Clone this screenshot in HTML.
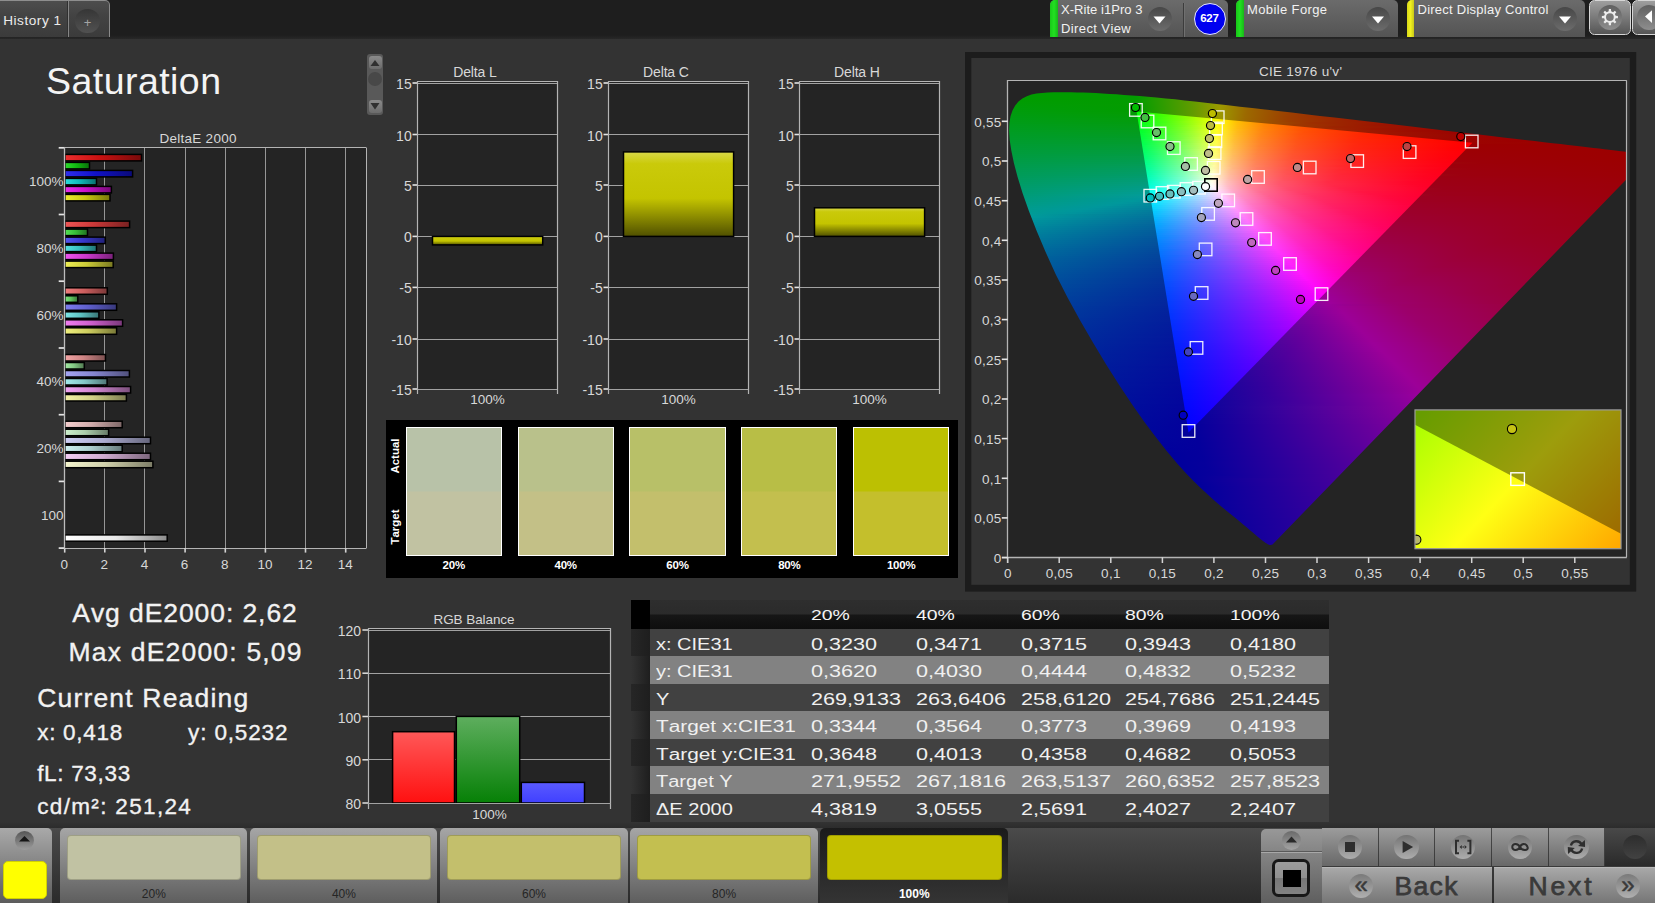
<!DOCTYPE html><html lang="en"><head><meta charset="utf-8"><title>Saturation</title><style>
html,body{margin:0;padding:0;background:#333;}
body{width:1655px;height:903px;overflow:hidden;position:relative;font-family:"Liberation Sans",sans-serif;font-kerning:none;}
.t{position:absolute;white-space:nowrap;line-height:normal;font-kerning:none;}
.a{position:absolute;box-sizing:border-box;}
svg{position:absolute;left:0;top:0;overflow:visible}
svg text{font-family:"Liberation Sans",sans-serif;font-kerning:none;}
</style></head><body><div class="a" style="left:0;top:0;width:1655px;height:38.5px;background:linear-gradient(#1e1e1e,#1e1e1e 90%,#282828)"></div><div class="a" style="left:0;top:0;width:110px;height:37px;background:linear-gradient(#4d4d4d,#434343 40%,#3b3b3b);border-top:1.3px solid #8e8e8e;border-right:1.2px solid #8a8a8a;border-top-right-radius:5px"></div><div class="a" style="left:67.3px;top:1px;width:1px;height:36px;background:#303030"></div><div class="a" style="left:68.3px;top:1px;width:1px;height:36px;background:#858585"></div><div class="a" style="left:75.4px;top:8.8px;width:24.4px;height:24.4px;border-radius:50%;background:linear-gradient(#363636,#515151)"></div><div class="t" style="left:3.2px;top:12.7px;font-size:13.6px;color:#ececec;letter-spacing:0.54px;">History 1</div><div class="t" style="left:83.8px;top:15.2px;font-size:13px;color:#a4a4a4;">+</div><div class="a" style="left:1050.0px;top:0;width:178.0px;height:37px;background:linear-gradient(#6b6b6b,#545454);border-radius:5px 5px 0 0;overflow:hidden"><div style="width:7.5px;height:37px;background:linear-gradient(90deg,#18c818,#22e022 50%,#18b818)"></div></div><div class="a" style="left:1147.5px;top:6.5px;width:24px;height:24px;border-radius:50%;background:linear-gradient(#474747,#6c6c6c)"></div><svg width="1655" height="40"><polygon points="1153.5,16.5 1165.5,16.5 1159.5,23.5" fill="#fff"/></svg><div class="a" style="left:1183px;top:3px;width:1px;height:34px;background:#3c3c3c"></div><div class="a" style="left:1184px;top:3px;width:1px;height:34px;background:#707070"></div><div class="a" style="left:1193.5px;top:2.5px;width:32px;height:32px;border-radius:50%;background:#0000f0;border:1.3px solid #e8e8ff;box-sizing:border-box"></div><div class="t" style="left:1200.3px;top:12.2px;font-size:11.5px;color:#fff;letter-spacing:-0.34px;font-weight:bold;">627</div><div class="t" style="left:1061.0px;top:1.7px;font-size:13px;color:#f2f2f2;letter-spacing:0.04px;">X-Rite i1Pro 3</div><div class="t" style="left:1061.0px;top:20.7px;font-size:13px;color:#f2f2f2;letter-spacing:0.40px;">Direct View</div><div class="a" style="left:1236.0px;top:0;width:162.0px;height:37px;background:linear-gradient(#6b6b6b,#545454);border-radius:5px 5px 0 0;overflow:hidden"><div style="width:7.5px;height:37px;background:linear-gradient(90deg,#18c818,#22e022 50%,#18b818)"></div></div><div class="a" style="left:1366.0px;top:6.5px;width:24px;height:24px;border-radius:50%;background:linear-gradient(#474747,#6c6c6c)"></div><svg width="1655" height="40"><polygon points="1372.0,16.5 1384.0,16.5 1378.0,23.5" fill="#fff"/></svg><div class="t" style="left:1247.0px;top:1.7px;font-size:13px;color:#f2f2f2;letter-spacing:0.38px;">Mobile Forge</div><div class="a" style="left:1406.5px;top:0;width:178.5px;height:37px;background:linear-gradient(#6b6b6b,#545454);border-radius:5px 5px 0 0;overflow:hidden"><div style="width:7.5px;height:37px;background:linear-gradient(90deg,#d8d818,#f0f020 50%,#c8c818)"></div></div><div class="a" style="left:1553.0px;top:6.5px;width:24px;height:24px;border-radius:50%;background:linear-gradient(#474747,#6c6c6c)"></div><svg width="1655" height="40"><polygon points="1559.0,16.5 1571.0,16.5 1565.0,23.5" fill="#fff"/></svg><div class="t" style="left:1417.5px;top:1.7px;font-size:13px;color:#f2f2f2;letter-spacing:0.25px;">Direct Display Control</div><div class="a" style="left:1589px;top:-0.3px;width:41.9px;height:35.5px;border:1.4px solid #d6d6d6;border-radius:5.5px;background:linear-gradient(#9e9e9e,#565656)"></div><div class="a" style="left:1597.8px;top:5.2px;width:24.4px;height:24.4px;border-radius:50%;background:linear-gradient(#606060,#8e8e8e)"></div><svg width="1655" height="40"><polygon points="1617.93,16.02 1617.93,18.18 1615.67,18.34 1614.86,20.30 1616.34,22.01 1614.81,23.54 1613.10,22.06 1611.14,22.87 1610.98,25.13 1608.82,25.13 1608.66,22.87 1606.70,22.06 1604.99,23.54 1603.46,22.01 1604.94,20.30 1604.13,18.34 1601.87,18.18 1601.87,16.02 1604.13,15.86 1604.94,13.90 1603.46,12.19 1604.99,10.66 1606.70,12.14 1608.66,11.33 1608.82,9.07 1610.98,9.07 1611.14,11.33 1613.10,12.14 1614.81,10.66 1616.34,12.19 1614.86,13.90 1615.67,15.86" fill="#ececec"/><circle cx="1609.9" cy="17.1" r="3.9" fill="#797979"/></svg><div class="a" style="left:1632.3px;top:-0.3px;width:30px;height:35.5px;border:1.4px solid #d6d6d6;border-radius:5.5px 0 0 5.5px;background:linear-gradient(#9e9e9e,#565656)"></div><div class="a" style="left:1636.6px;top:5.2px;width:24.4px;height:24.4px;border-radius:50%;background:linear-gradient(#606060,#8e8e8e)"></div><svg width="1655" height="40"><polygon points="1645,16.6 1652,10.2 1652,23" fill="#fff"/></svg><div class="t" style="left:46.0px;top:59.8px;font-size:37.5px;color:#f4f4f4;letter-spacing:0.45px;">Saturation</div><div class="a" style="left:367px;top:54px;width:16px;height:61px;background:#595959;border-radius:3px"></div><div class="a" style="left:368.5px;top:56px;width:13px;height:13px;background:linear-gradient(#8a8a8a,#6c6c6c);border-radius:3px"></div><div class="a" style="left:368.5px;top:99.5px;width:13px;height:13px;background:linear-gradient(#8a8a8a,#6c6c6c);border-radius:3px"></div><div class="a" style="left:368px;top:71.5px;width:14px;height:14px;background:#484848;border-radius:50%"></div><svg width="400" height="120"><polygon points="370.5,66 379.5,66 375,60" fill="#303030"/><polygon points="370.5,103 379.5,103 375,109.5" fill="#303030"/></svg><svg width="1655" height="903" viewBox="0 0 1655 903"><defs><linearGradient id="b0"><stop offset="0" stop-color="#ec2e2e"/><stop offset="0.45" stop-color="#c91111"/><stop offset="1" stop-color="#780a0a"/></linearGradient><linearGradient id="b1"><stop offset="0" stop-color="#2edc2e"/><stop offset="0.45" stop-color="#11ba11"/><stop offset="1" stop-color="#0a6f0a"/></linearGradient><linearGradient id="b2"><stop offset="0" stop-color="#2e2eec"/><stop offset="0.45" stop-color="#1111c9"/><stop offset="1" stop-color="#0a0a78"/></linearGradient><linearGradient id="b3"><stop offset="0" stop-color="#2edcdc"/><stop offset="0.45" stop-color="#11baba"/><stop offset="1" stop-color="#0a6f6f"/></linearGradient><linearGradient id="b4"><stop offset="0" stop-color="#ec2eec"/><stop offset="0.45" stop-color="#c911c9"/><stop offset="1" stop-color="#780a78"/></linearGradient><linearGradient id="b5"><stop offset="0" stop-color="#ecec2e"/><stop offset="0.45" stop-color="#c9c911"/><stop offset="1" stop-color="#78780a"/></linearGradient><linearGradient id="b6"><stop offset="0" stop-color="#ee5555"/><stop offset="0.45" stop-color="#cb3838"/><stop offset="1" stop-color="#792121"/></linearGradient><linearGradient id="b7"><stop offset="0" stop-color="#55e155"/><stop offset="0.45" stop-color="#38bf38"/><stop offset="1" stop-color="#217221"/></linearGradient><linearGradient id="b8"><stop offset="0" stop-color="#5555ee"/><stop offset="0.45" stop-color="#3838cb"/><stop offset="1" stop-color="#212179"/></linearGradient><linearGradient id="b9"><stop offset="0" stop-color="#55e1e1"/><stop offset="0.45" stop-color="#38bfbf"/><stop offset="1" stop-color="#217272"/></linearGradient><linearGradient id="b10"><stop offset="0" stop-color="#ee55ee"/><stop offset="0.45" stop-color="#cb38cb"/><stop offset="1" stop-color="#792179"/></linearGradient><linearGradient id="b11"><stop offset="0" stop-color="#eeee55"/><stop offset="0.45" stop-color="#cbcb38"/><stop offset="1" stop-color="#797921"/></linearGradient><linearGradient id="b12"><stop offset="0" stop-color="#f07e7e"/><stop offset="0.45" stop-color="#cd5f5f"/><stop offset="1" stop-color="#7a3838"/></linearGradient><linearGradient id="b13"><stop offset="0" stop-color="#7ee67e"/><stop offset="0.45" stop-color="#5fc45f"/><stop offset="1" stop-color="#387538"/></linearGradient><linearGradient id="b14"><stop offset="0" stop-color="#7e7ef0"/><stop offset="0.45" stop-color="#5f5fcd"/><stop offset="1" stop-color="#38387a"/></linearGradient><linearGradient id="b15"><stop offset="0" stop-color="#7ee6e6"/><stop offset="0.45" stop-color="#5fc4c4"/><stop offset="1" stop-color="#387575"/></linearGradient><linearGradient id="b16"><stop offset="0" stop-color="#f07ef0"/><stop offset="0.45" stop-color="#cd5fcd"/><stop offset="1" stop-color="#7a387a"/></linearGradient><linearGradient id="b17"><stop offset="0" stop-color="#f0f07e"/><stop offset="0.45" stop-color="#cdcd5f"/><stop offset="1" stop-color="#7a7a38"/></linearGradient><linearGradient id="b18"><stop offset="0" stop-color="#f2a5a5"/><stop offset="0.45" stop-color="#cf8585"/><stop offset="1" stop-color="#7c5050"/></linearGradient><linearGradient id="b19"><stop offset="0" stop-color="#a5eba5"/><stop offset="0.45" stop-color="#85c985"/><stop offset="1" stop-color="#507850"/></linearGradient><linearGradient id="b20"><stop offset="0" stop-color="#a5a5f2"/><stop offset="0.45" stop-color="#8585cf"/><stop offset="1" stop-color="#50507c"/></linearGradient><linearGradient id="b21"><stop offset="0" stop-color="#a5ebeb"/><stop offset="0.45" stop-color="#85c9c9"/><stop offset="1" stop-color="#507878"/></linearGradient><linearGradient id="b22"><stop offset="0" stop-color="#f2a5f2"/><stop offset="0.45" stop-color="#cf85cf"/><stop offset="1" stop-color="#7c507c"/></linearGradient><linearGradient id="b23"><stop offset="0" stop-color="#f2f2a5"/><stop offset="0.45" stop-color="#cfcf85"/><stop offset="1" stop-color="#7c7c50"/></linearGradient><linearGradient id="b24"><stop offset="0" stop-color="#f4cece"/><stop offset="0.45" stop-color="#d1acac"/><stop offset="1" stop-color="#7d6767"/></linearGradient><linearGradient id="b25"><stop offset="0" stop-color="#cef0ce"/><stop offset="0.45" stop-color="#acceac"/><stop offset="1" stop-color="#677b67"/></linearGradient><linearGradient id="b26"><stop offset="0" stop-color="#cecef4"/><stop offset="0.45" stop-color="#acacd1"/><stop offset="1" stop-color="#67677d"/></linearGradient><linearGradient id="b27"><stop offset="0" stop-color="#cef0f0"/><stop offset="0.45" stop-color="#accece"/><stop offset="1" stop-color="#677b7b"/></linearGradient><linearGradient id="b28"><stop offset="0" stop-color="#f4cef4"/><stop offset="0.45" stop-color="#d1acd1"/><stop offset="1" stop-color="#7d677d"/></linearGradient><linearGradient id="b29"><stop offset="0" stop-color="#f4f4ce"/><stop offset="0.45" stop-color="#d1d1ac"/><stop offset="1" stop-color="#7d7d67"/></linearGradient><linearGradient id="bw"><stop offset="0" stop-color="#fff"/><stop offset="0.5" stop-color="#e8e8e8"/><stop offset="1" stop-color="#8c8c8c"/></linearGradient><linearGradient id="yb" x1="0" y1="0" x2="0" y2="1"><stop offset="0" stop-color="#d8d848"/><stop offset="0.14" stop-color="#caca0a"/><stop offset="0.55" stop-color="#c4c400"/><stop offset="1" stop-color="#505000"/></linearGradient><linearGradient id="gr" x1="0" y1="0" x2="0" y2="1"><stop offset="0" stop-color="#ff5858"/><stop offset="1" stop-color="#ff1010"/></linearGradient><linearGradient id="gg" x1="0" y1="0" x2="0" y2="1"><stop offset="0" stop-color="#5eae5e"/><stop offset="1" stop-color="#068006"/></linearGradient><linearGradient id="gb" x1="0" y1="0" x2="0" y2="1"><stop offset="0" stop-color="#5a5aff"/><stop offset="1" stop-color="#4040ff"/></linearGradient><linearGradient id="ins" gradientUnits="userSpaceOnUse" x1="1432" y1="398" x2="1604" y2="560"><stop offset="0" stop-color="#a6ff00"/><stop offset="0.5" stop-color="#ffff14"/><stop offset="1" stop-color="#ffaa00"/></linearGradient><clipPath id="cins"><rect x="1415" y="410" width="206" height="138.5"/></clipPath></defs><rect x="64.7" y="147.8" width="301.7" height="400.3" fill="#242424"/><line x1="104.5" y1="147.8" x2="104.5" y2="548.1" stroke="#969696" stroke-width="1"/><line x1="144.5" y1="147.8" x2="144.5" y2="548.1" stroke="#969696" stroke-width="1"/><line x1="185.5" y1="147.8" x2="185.5" y2="548.1" stroke="#969696" stroke-width="1"/><line x1="225.5" y1="147.8" x2="225.5" y2="548.1" stroke="#969696" stroke-width="1"/><line x1="265.5" y1="147.8" x2="265.5" y2="548.1" stroke="#969696" stroke-width="1"/><line x1="305.5" y1="147.8" x2="305.5" y2="548.1" stroke="#969696" stroke-width="1"/><line x1="345.5" y1="147.8" x2="345.5" y2="548.1" stroke="#969696" stroke-width="1"/><line x1="64.7" y1="147.5" x2="366.4" y2="147.5" stroke="#b4b4b4" stroke-width="1"/><line x1="366.5" y1="147.8" x2="366.5" y2="548.1" stroke="#b4b4b4" stroke-width="1"/><line x1="64.7" y1="548.5" x2="366.4" y2="548.5" stroke="#b4b4b4" stroke-width="1"/><line x1="58.7" y1="147.8" x2="64.7" y2="147.8" stroke="#e4e4e4" stroke-width="1.7"/><line x1="58.7" y1="214.5" x2="64.7" y2="214.5" stroke="#e4e4e4" stroke-width="1.7"/><line x1="58.7" y1="281.2" x2="64.7" y2="281.2" stroke="#e4e4e4" stroke-width="1.7"/><line x1="58.7" y1="348.0" x2="64.7" y2="348.0" stroke="#e4e4e4" stroke-width="1.7"/><line x1="58.7" y1="414.7" x2="64.7" y2="414.7" stroke="#e4e4e4" stroke-width="1.7"/><line x1="58.7" y1="481.4" x2="64.7" y2="481.4" stroke="#e4e4e4" stroke-width="1.7"/><line x1="58.7" y1="548.1" x2="64.7" y2="548.1" stroke="#e4e4e4" stroke-width="1.7"/><line x1="64.7" y1="548.1" x2="64.7" y2="552.6" stroke="#d4d4d4" stroke-width="1.6"/><text x="64.2" y="568.6" font-size="13.5" fill="#d8d8d8" text-anchor="middle">0</text><line x1="104.8" y1="548.1" x2="104.8" y2="552.6" stroke="#d4d4d4" stroke-width="1.6"/><text x="104.3" y="568.6" font-size="13.5" fill="#d8d8d8" text-anchor="middle">2</text><line x1="145.0" y1="548.1" x2="145.0" y2="552.6" stroke="#d4d4d4" stroke-width="1.6"/><text x="144.5" y="568.6" font-size="13.5" fill="#d8d8d8" text-anchor="middle">4</text><line x1="185.1" y1="548.1" x2="185.1" y2="552.6" stroke="#d4d4d4" stroke-width="1.6"/><text x="184.6" y="568.6" font-size="13.5" fill="#d8d8d8" text-anchor="middle">6</text><line x1="225.3" y1="548.1" x2="225.3" y2="552.6" stroke="#d4d4d4" stroke-width="1.6"/><text x="224.8" y="568.6" font-size="13.5" fill="#d8d8d8" text-anchor="middle">8</text><line x1="265.4" y1="548.1" x2="265.4" y2="552.6" stroke="#d4d4d4" stroke-width="1.6"/><text x="264.9" y="568.6" font-size="13.5" fill="#d8d8d8" text-anchor="middle">10</text><line x1="305.5" y1="548.1" x2="305.5" y2="552.6" stroke="#d4d4d4" stroke-width="1.6"/><text x="305.0" y="568.6" font-size="13.5" fill="#d8d8d8" text-anchor="middle">12</text><line x1="345.7" y1="548.1" x2="345.7" y2="552.6" stroke="#d4d4d4" stroke-width="1.6"/><text x="345.2" y="568.6" font-size="13.5" fill="#d8d8d8" text-anchor="middle">14</text><text x="63.5" y="186.2" font-size="13.5" fill="#d8d8d8" text-anchor="end">100%</text><text x="63.5" y="252.9" font-size="13.5" fill="#d8d8d8" text-anchor="end">80%</text><text x="63.5" y="319.6" font-size="13.5" fill="#d8d8d8" text-anchor="end">60%</text><text x="63.5" y="386.3" font-size="13.5" fill="#d8d8d8" text-anchor="end">40%</text><text x="63.5" y="453.0" font-size="13.5" fill="#d8d8d8" text-anchor="end">20%</text><text x="63.5" y="519.7" font-size="13.5" fill="#d8d8d8" text-anchor="end">100</text><text x="198.1" y="142.5" font-size="13.5" fill="#d8d8d8" text-anchor="middle" letter-spacing="0.27">DeltaE 2000</text><rect x="64.9" y="154.4" width="76.6" height="6.5" fill="url(#b0)" stroke="#000" stroke-width="1.5"/><rect x="64.9" y="162.4" width="24.6" height="6.5" fill="url(#b1)" stroke="#000" stroke-width="1.5"/><rect x="64.9" y="170.4" width="67.7" height="6.5" fill="url(#b2)" stroke="#000" stroke-width="1.5"/><rect x="64.9" y="178.4" width="31.6" height="6.5" fill="url(#b3)" stroke="#000" stroke-width="1.5"/><rect x="64.9" y="186.4" width="46.5" height="6.5" fill="url(#b4)" stroke="#000" stroke-width="1.5"/><rect x="64.9" y="194.4" width="45.1" height="6.5" fill="url(#b5)" stroke="#000" stroke-width="1.5"/><rect x="64.9" y="221.1" width="64.7" height="6.5" fill="url(#b6)" stroke="#000" stroke-width="1.5"/><rect x="64.9" y="229.1" width="22.6" height="6.5" fill="url(#b7)" stroke="#000" stroke-width="1.5"/><rect x="64.9" y="237.1" width="40.4" height="6.5" fill="url(#b8)" stroke="#000" stroke-width="1.5"/><rect x="64.9" y="245.1" width="31.6" height="6.5" fill="url(#b9)" stroke="#000" stroke-width="1.5"/><rect x="64.9" y="253.1" width="48.5" height="6.5" fill="url(#b10)" stroke="#000" stroke-width="1.5"/><rect x="64.9" y="261.1" width="48.3" height="6.5" fill="url(#b11)" stroke="#000" stroke-width="1.5"/><rect x="64.9" y="287.8" width="42.4" height="6.5" fill="url(#b12)" stroke="#000" stroke-width="1.5"/><rect x="64.9" y="295.8" width="12.9" height="6.5" fill="url(#b13)" stroke="#000" stroke-width="1.5"/><rect x="64.9" y="303.8" width="51.7" height="6.5" fill="url(#b14)" stroke="#000" stroke-width="1.5"/><rect x="64.9" y="311.8" width="34.0" height="6.5" fill="url(#b15)" stroke="#000" stroke-width="1.5"/><rect x="64.9" y="319.8" width="57.7" height="6.5" fill="url(#b16)" stroke="#000" stroke-width="1.5"/><rect x="64.9" y="327.8" width="51.7" height="6.5" fill="url(#b17)" stroke="#000" stroke-width="1.5"/><rect x="64.9" y="354.5" width="40.6" height="6.5" fill="url(#b18)" stroke="#000" stroke-width="1.5"/><rect x="64.9" y="362.5" width="19.4" height="6.5" fill="url(#b19)" stroke="#000" stroke-width="1.5"/><rect x="64.9" y="370.5" width="64.5" height="6.5" fill="url(#b20)" stroke="#000" stroke-width="1.5"/><rect x="64.9" y="378.5" width="42.2" height="6.5" fill="url(#b21)" stroke="#000" stroke-width="1.5"/><rect x="64.9" y="386.5" width="65.7" height="6.5" fill="url(#b22)" stroke="#000" stroke-width="1.5"/><rect x="64.9" y="394.5" width="61.5" height="6.5" fill="url(#b23)" stroke="#000" stroke-width="1.5"/><rect x="64.9" y="421.2" width="57.3" height="6.5" fill="url(#b24)" stroke="#000" stroke-width="1.5"/><rect x="64.9" y="429.2" width="43.7" height="6.5" fill="url(#b25)" stroke="#000" stroke-width="1.5"/><rect x="64.9" y="437.2" width="85.6" height="6.5" fill="url(#b26)" stroke="#000" stroke-width="1.5"/><rect x="64.9" y="445.2" width="57.3" height="6.5" fill="url(#b27)" stroke="#000" stroke-width="1.5"/><rect x="64.9" y="453.2" width="85.6" height="6.5" fill="url(#b28)" stroke="#000" stroke-width="1.5"/><rect x="64.9" y="461.2" width="88.0" height="6.5" fill="url(#b29)" stroke="#000" stroke-width="1.5"/><rect x="64.9" y="534.9" width="102.3" height="6.3" fill="url(#bw)" stroke="#000" stroke-width="1.5"/><line x1="64.5" y1="147.3" x2="64.5" y2="548.6" stroke="#bdbdbd" stroke-width="1.3"/><rect x="417.5" y="81.5" width="140.2" height="307.5" fill="#242424"/><line x1="417.5" y1="83.5" x2="557.7" y2="83.5" stroke="#a2a2a2" stroke-width="1.1"/><line x1="412.5" y1="83.0" x2="417.5" y2="83.0" stroke="#e4e4e4" stroke-width="1.6"/><text x="411.7" y="89.0" font-size="14" fill="#d8d8d8" text-anchor="end">15</text><line x1="417.5" y1="134.5" x2="557.7" y2="134.5" stroke="#a2a2a2" stroke-width="1.1"/><line x1="412.5" y1="134.5" x2="417.5" y2="134.5" stroke="#e4e4e4" stroke-width="1.6"/><text x="411.7" y="140.5" font-size="14" fill="#d8d8d8" text-anchor="end">10</text><line x1="417.5" y1="185.5" x2="557.7" y2="185.5" stroke="#a2a2a2" stroke-width="1.1"/><line x1="412.5" y1="185.0" x2="417.5" y2="185.0" stroke="#e4e4e4" stroke-width="1.6"/><text x="411.7" y="191.0" font-size="14" fill="#d8d8d8" text-anchor="end">5</text><line x1="417.5" y1="236.5" x2="557.7" y2="236.5" stroke="#a2a2a2" stroke-width="1.1"/><line x1="412.5" y1="236.4" x2="417.5" y2="236.4" stroke="#e4e4e4" stroke-width="1.6"/><text x="411.7" y="242.4" font-size="14" fill="#d8d8d8" text-anchor="end">0</text><line x1="417.5" y1="287.5" x2="557.7" y2="287.5" stroke="#a2a2a2" stroke-width="1.1"/><line x1="412.5" y1="287.4" x2="417.5" y2="287.4" stroke="#e4e4e4" stroke-width="1.6"/><text x="411.7" y="293.4" font-size="14" fill="#d8d8d8" text-anchor="end">-5</text><line x1="417.5" y1="339.5" x2="557.7" y2="339.5" stroke="#a2a2a2" stroke-width="1.1"/><line x1="412.5" y1="339.0" x2="417.5" y2="339.0" stroke="#e4e4e4" stroke-width="1.6"/><text x="411.7" y="345.0" font-size="14" fill="#d8d8d8" text-anchor="end">-10</text><line x1="417.5" y1="389.5" x2="557.7" y2="389.5" stroke="#a2a2a2" stroke-width="1.1"/><line x1="412.5" y1="389.0" x2="417.5" y2="389.0" stroke="#e4e4e4" stroke-width="1.6"/><text x="411.7" y="395.0" font-size="14" fill="#d8d8d8" text-anchor="end">-15</text><line x1="417.5" y1="81.5" x2="557.7" y2="81.5" stroke="#b4b4b4" stroke-width="1"/><line x1="417.5" y1="81.0" x2="417.5" y2="394.0" stroke="#b4b4b4" stroke-width="1.2"/><line x1="557.5" y1="81.0" x2="557.5" y2="394.0" stroke="#b4b4b4" stroke-width="1.2"/><rect x="432.5" y="236.4" width="110.2" height="8.5" fill="url(#yb)" stroke="#000" stroke-width="1.5"/><text x="487.6" y="404.0" font-size="13.5" fill="#d8d8d8" text-anchor="middle" letter-spacing="-0.01">100%</text><text x="474.9" y="76.6" font-size="14" fill="#d8d8d8" text-anchor="middle" letter-spacing="-0.15">Delta L</text><rect x="608.5" y="81.5" width="140.1" height="307.5" fill="#242424"/><line x1="608.5" y1="83.5" x2="748.6" y2="83.5" stroke="#a2a2a2" stroke-width="1.1"/><line x1="603.5" y1="83.0" x2="608.5" y2="83.0" stroke="#e4e4e4" stroke-width="1.6"/><text x="602.7" y="89.0" font-size="14" fill="#d8d8d8" text-anchor="end">15</text><line x1="608.5" y1="134.5" x2="748.6" y2="134.5" stroke="#a2a2a2" stroke-width="1.1"/><line x1="603.5" y1="134.5" x2="608.5" y2="134.5" stroke="#e4e4e4" stroke-width="1.6"/><text x="602.7" y="140.5" font-size="14" fill="#d8d8d8" text-anchor="end">10</text><line x1="608.5" y1="185.5" x2="748.6" y2="185.5" stroke="#a2a2a2" stroke-width="1.1"/><line x1="603.5" y1="185.0" x2="608.5" y2="185.0" stroke="#e4e4e4" stroke-width="1.6"/><text x="602.7" y="191.0" font-size="14" fill="#d8d8d8" text-anchor="end">5</text><line x1="608.5" y1="236.5" x2="748.6" y2="236.5" stroke="#a2a2a2" stroke-width="1.1"/><line x1="603.5" y1="236.4" x2="608.5" y2="236.4" stroke="#e4e4e4" stroke-width="1.6"/><text x="602.7" y="242.4" font-size="14" fill="#d8d8d8" text-anchor="end">0</text><line x1="608.5" y1="287.5" x2="748.6" y2="287.5" stroke="#a2a2a2" stroke-width="1.1"/><line x1="603.5" y1="287.4" x2="608.5" y2="287.4" stroke="#e4e4e4" stroke-width="1.6"/><text x="602.7" y="293.4" font-size="14" fill="#d8d8d8" text-anchor="end">-5</text><line x1="608.5" y1="339.5" x2="748.6" y2="339.5" stroke="#a2a2a2" stroke-width="1.1"/><line x1="603.5" y1="339.0" x2="608.5" y2="339.0" stroke="#e4e4e4" stroke-width="1.6"/><text x="602.7" y="345.0" font-size="14" fill="#d8d8d8" text-anchor="end">-10</text><line x1="608.5" y1="389.5" x2="748.6" y2="389.5" stroke="#a2a2a2" stroke-width="1.1"/><line x1="603.5" y1="389.0" x2="608.5" y2="389.0" stroke="#e4e4e4" stroke-width="1.6"/><text x="602.7" y="395.0" font-size="14" fill="#d8d8d8" text-anchor="end">-15</text><line x1="608.5" y1="81.5" x2="748.6" y2="81.5" stroke="#b4b4b4" stroke-width="1"/><line x1="608.5" y1="81.0" x2="608.5" y2="394.0" stroke="#b4b4b4" stroke-width="1.2"/><line x1="748.5" y1="81.0" x2="748.5" y2="394.0" stroke="#b4b4b4" stroke-width="1.2"/><rect x="623.5" y="151.9" width="110.1" height="84.5" fill="url(#yb)" stroke="#000" stroke-width="1.5"/><text x="678.5" y="404.0" font-size="13.5" fill="#d8d8d8" text-anchor="middle" letter-spacing="-0.01">100%</text><text x="665.9" y="76.6" font-size="14" fill="#d8d8d8" text-anchor="middle" letter-spacing="-0.16">Delta C</text><rect x="799.5" y="81.5" width="140.1" height="307.5" fill="#242424"/><line x1="799.5" y1="83.5" x2="939.6" y2="83.5" stroke="#a2a2a2" stroke-width="1.1"/><line x1="794.5" y1="83.0" x2="799.5" y2="83.0" stroke="#e4e4e4" stroke-width="1.6"/><text x="793.7" y="89.0" font-size="14" fill="#d8d8d8" text-anchor="end">15</text><line x1="799.5" y1="134.5" x2="939.6" y2="134.5" stroke="#a2a2a2" stroke-width="1.1"/><line x1="794.5" y1="134.5" x2="799.5" y2="134.5" stroke="#e4e4e4" stroke-width="1.6"/><text x="793.7" y="140.5" font-size="14" fill="#d8d8d8" text-anchor="end">10</text><line x1="799.5" y1="185.5" x2="939.6" y2="185.5" stroke="#a2a2a2" stroke-width="1.1"/><line x1="794.5" y1="185.0" x2="799.5" y2="185.0" stroke="#e4e4e4" stroke-width="1.6"/><text x="793.7" y="191.0" font-size="14" fill="#d8d8d8" text-anchor="end">5</text><line x1="799.5" y1="236.5" x2="939.6" y2="236.5" stroke="#a2a2a2" stroke-width="1.1"/><line x1="794.5" y1="236.4" x2="799.5" y2="236.4" stroke="#e4e4e4" stroke-width="1.6"/><text x="793.7" y="242.4" font-size="14" fill="#d8d8d8" text-anchor="end">0</text><line x1="799.5" y1="287.5" x2="939.6" y2="287.5" stroke="#a2a2a2" stroke-width="1.1"/><line x1="794.5" y1="287.4" x2="799.5" y2="287.4" stroke="#e4e4e4" stroke-width="1.6"/><text x="793.7" y="293.4" font-size="14" fill="#d8d8d8" text-anchor="end">-5</text><line x1="799.5" y1="339.5" x2="939.6" y2="339.5" stroke="#a2a2a2" stroke-width="1.1"/><line x1="794.5" y1="339.0" x2="799.5" y2="339.0" stroke="#e4e4e4" stroke-width="1.6"/><text x="793.7" y="345.0" font-size="14" fill="#d8d8d8" text-anchor="end">-10</text><line x1="799.5" y1="389.5" x2="939.6" y2="389.5" stroke="#a2a2a2" stroke-width="1.1"/><line x1="794.5" y1="389.0" x2="799.5" y2="389.0" stroke="#e4e4e4" stroke-width="1.6"/><text x="793.7" y="395.0" font-size="14" fill="#d8d8d8" text-anchor="end">-15</text><line x1="799.5" y1="81.5" x2="939.6" y2="81.5" stroke="#b4b4b4" stroke-width="1"/><line x1="799.5" y1="81.0" x2="799.5" y2="394.0" stroke="#b4b4b4" stroke-width="1.2"/><line x1="939.5" y1="81.0" x2="939.5" y2="394.0" stroke="#b4b4b4" stroke-width="1.2"/><rect x="814.5" y="207.8" width="110.1" height="28.6" fill="url(#yb)" stroke="#000" stroke-width="1.5"/><text x="869.5" y="404.0" font-size="13.5" fill="#d8d8d8" text-anchor="middle" letter-spacing="-0.01">100%</text><text x="856.9" y="76.6" font-size="14" fill="#d8d8d8" text-anchor="middle" letter-spacing="-0.16">Delta H</text><rect x="368.4" y="628.5" width="242.0" height="174.5" fill="#242424"/><line x1="368.4" y1="630.5" x2="610.4" y2="630.5" stroke="#a2a2a2" stroke-width="1.1"/><line x1="362.4" y1="630.0" x2="368.4" y2="630.0" stroke="#e0e0e0" stroke-width="1.5"/><text x="361.1" y="636.0" font-size="14" fill="#d8d8d8" text-anchor="end">120</text><line x1="368.4" y1="673.5" x2="610.4" y2="673.5" stroke="#a2a2a2" stroke-width="1.1"/><line x1="362.4" y1="673.2" x2="368.4" y2="673.2" stroke="#e0e0e0" stroke-width="1.5"/><text x="361.1" y="679.2" font-size="14" fill="#d8d8d8" text-anchor="end">110</text><line x1="368.4" y1="716.5" x2="610.4" y2="716.5" stroke="#a2a2a2" stroke-width="1.1"/><line x1="362.4" y1="716.5" x2="368.4" y2="716.5" stroke="#e0e0e0" stroke-width="1.5"/><text x="361.1" y="722.5" font-size="14" fill="#d8d8d8" text-anchor="end">100</text><line x1="368.4" y1="759.5" x2="610.4" y2="759.5" stroke="#a2a2a2" stroke-width="1.1"/><line x1="362.4" y1="759.8" x2="368.4" y2="759.8" stroke="#e0e0e0" stroke-width="1.5"/><text x="361.1" y="765.8" font-size="14" fill="#d8d8d8" text-anchor="end">90</text><line x1="368.4" y1="803.5" x2="610.4" y2="803.5" stroke="#a2a2a2" stroke-width="1.1"/><line x1="362.4" y1="803.0" x2="368.4" y2="803.0" stroke="#e0e0e0" stroke-width="1.5"/><text x="361.1" y="809.0" font-size="14" fill="#d8d8d8" text-anchor="end">80</text><line x1="368.4" y1="628.5" x2="610.4" y2="628.5" stroke="#b4b4b4" stroke-width="1"/><line x1="368.5" y1="628.0" x2="368.5" y2="809.0" stroke="#b4b4b4" stroke-width="1.2"/><line x1="610.5" y1="628.0" x2="610.5" y2="809.0" stroke="#b4b4b4" stroke-width="1.2"/><rect x="392.6" y="731.7" width="61.9" height="71.3" fill="url(#gr)" stroke="#000" stroke-width="1.5"/><rect x="456.3" y="716.4" width="63.4" height="86.6" fill="url(#gg)" stroke="#000" stroke-width="1.5"/><rect x="521.3" y="782.4" width="63.2" height="20.6" fill="url(#gb)" stroke="#000" stroke-width="1.5"/><line x1="368.4" y1="803.5" x2="610.4" y2="803.5" stroke="#a2a2a2" stroke-width="1.1"/><text x="489.4" y="819.3" font-size="13.5" fill="#d8d8d8" text-anchor="middle" letter-spacing="-0.01">100%</text><text x="474.0" y="624.0" font-size="13.5" fill="#d8d8d8" text-anchor="middle" letter-spacing="-0.08">RGB Balance</text><rect x="965" y="52" width="671.2" height="539.6" fill="#1c1c1c"/><rect x="971.3" y="58" width="658.5" height="526.8" fill="#333"/><rect x="1007.7" y="80.5" width="619" height="476.5" fill="#242424"/><defs><linearGradient id="o0" gradientUnits="userSpaceOnUse" x1="1033" x2="1113"><stop offset="0" stop-color="#009c00"/><stop offset="1" stop-color="#009c00"/></linearGradient><linearGradient id="o1" gradientUnits="userSpaceOnUse" x1="1026" x2="1140"><stop offset="0" stop-color="#009c00"/><stop offset="0.965" stop-color="#039c00"/><stop offset="1" stop-color="#099c00"/></linearGradient><linearGradient id="o2" gradientUnits="userSpaceOnUse" x1="1022" x2="1163"><stop offset="0" stop-color="#009c00"/><stop offset="0.809" stop-color="#029c00"/><stop offset="1" stop-color="#2c9c00"/></linearGradient><linearGradient id="o3" gradientUnits="userSpaceOnUse" x1="1019" x2="1183"><stop offset="0" stop-color="#009c00"/><stop offset="0.72" stop-color="#039c00"/><stop offset="1" stop-color="#4f9c00"/></linearGradient><linearGradient id="o4" gradientUnits="userSpaceOnUse" x1="1017" x2="1201"><stop offset="0" stop-color="#009c01"/><stop offset="0.652" stop-color="#039c00"/><stop offset="0.94" stop-color="#5c9c00"/><stop offset="1" stop-color="#729c00"/></linearGradient><linearGradient id="o5" gradientUnits="userSpaceOnUse" x1="1015" x2="1218"><stop offset="0" stop-color="#009c03"/><stop offset="0.601" stop-color="#039c00"/><stop offset="0.862" stop-color="#5c9c00"/><stop offset="1" stop-color="#989c00"/></linearGradient><linearGradient id="o6" gradientUnits="userSpaceOnUse" x1="1013" x2="1236"><stop offset="0" stop-color="#009c05"/><stop offset="0.561" stop-color="#049c00"/><stop offset="0.798" stop-color="#5e9c00"/><stop offset="0.928" stop-color="#9c9a00"/><stop offset="1" stop-color="#9c7a00"/></linearGradient><linearGradient id="o7" gradientUnits="userSpaceOnUse" x1="1012" x2="1253"><stop offset="0" stop-color="#009c07"/><stop offset="0.523" stop-color="#039c00"/><stop offset="0.739" stop-color="#5c9c00"/><stop offset="0.863" stop-color="#9c9900"/><stop offset="0.975" stop-color="#9c6900"/><stop offset="1" stop-color="#9c6200"/></linearGradient><linearGradient id="o8" gradientUnits="userSpaceOnUse" x1="1011" x2="1270"><stop offset="0" stop-color="#009c09"/><stop offset="0.49" stop-color="#039c00"/><stop offset="0.691" stop-color="#5c9c00"/><stop offset="0.807" stop-color="#9c9900"/><stop offset="0.911" stop-color="#9c6900"/><stop offset="1" stop-color="#9c4f00"/></linearGradient><linearGradient id="o9" gradientUnits="userSpaceOnUse" x1="1010" x2="1288"><stop offset="0" stop-color="#009c0c"/><stop offset="0.46" stop-color="#029c00"/><stop offset="0.647" stop-color="#5c9c00"/><stop offset="0.755" stop-color="#9c9800"/><stop offset="0.853" stop-color="#9c6800"/><stop offset="1" stop-color="#9c4000"/></linearGradient><linearGradient id="o10" gradientUnits="userSpaceOnUse" x1="1010" x2="1305"><stop offset="0" stop-color="#009c0e"/><stop offset="0.437" stop-color="#039c02"/><stop offset="0.61" stop-color="#5c9c00"/><stop offset="0.712" stop-color="#9c9800"/><stop offset="0.803" stop-color="#9c6800"/><stop offset="0.949" stop-color="#9c3e00"/><stop offset="1" stop-color="#9c3400"/></linearGradient><linearGradient id="o11" gradientUnits="userSpaceOnUse" x1="1009" x2="1323"><stop offset="0" stop-color="#009c10"/><stop offset="0.414" stop-color="#039c05"/><stop offset="0.576" stop-color="#5c9c00"/><stop offset="0.669" stop-color="#9c9a00"/><stop offset="0.752" stop-color="#9c6a00"/><stop offset="0.885" stop-color="#9c4000"/><stop offset="1" stop-color="#9c2b00"/></linearGradient><linearGradient id="o12" gradientUnits="userSpaceOnUse" x1="1009" x2="1340"><stop offset="0" stop-color="#009c12"/><stop offset="0.393" stop-color="#029c07"/><stop offset="0.547" stop-color="#5c9c01"/><stop offset="0.634" stop-color="#9c9900"/><stop offset="0.713" stop-color="#9c6a00"/><stop offset="0.84" stop-color="#9c3f00"/><stop offset="1" stop-color="#9c2300"/></linearGradient><linearGradient id="o13" gradientUnits="userSpaceOnUse" x1="1008" x2="1357"><stop offset="0" stop-color="#009c14"/><stop offset="0.378" stop-color="#039c0a"/><stop offset="0.542" stop-color="#6b9c03"/><stop offset="0.605" stop-color="#9c9900"/><stop offset="0.679" stop-color="#9c6900"/><stop offset="0.799" stop-color="#9c3f00"/><stop offset="1" stop-color="#9c1c00"/></linearGradient><linearGradient id="o14" gradientUnits="userSpaceOnUse" x1="1008" x2="1374"><stop offset="0" stop-color="#009c16"/><stop offset="0.361" stop-color="#039c0d"/><stop offset="0.56" stop-color="#909c04"/><stop offset="0.579" stop-color="#9c9603"/><stop offset="0.653" stop-color="#9c6600"/><stop offset="0.77" stop-color="#9c3c00"/><stop offset="0.975" stop-color="#9c1900"/><stop offset="1" stop-color="#9c1700"/></linearGradient><linearGradient id="o15" gradientUnits="userSpaceOnUse" x1="1008" x2="1391"><stop offset="0" stop-color="#009c18"/><stop offset="0.345" stop-color="#029c10"/><stop offset="0.577" stop-color="#9c8205"/><stop offset="0.661" stop-color="#9c5500"/><stop offset="0.796" stop-color="#9c2e00"/><stop offset="1" stop-color="#9c1200"/></linearGradient><linearGradient id="o16" gradientUnits="userSpaceOnUse" x1="1008" x2="1408"><stop offset="0" stop-color="#009c1b"/><stop offset="0.333" stop-color="#039c13"/><stop offset="0.605" stop-color="#9c6104"/><stop offset="0.718" stop-color="#9c3800"/><stop offset="0.915" stop-color="#9c1600"/><stop offset="1" stop-color="#9c0e00"/></linearGradient><linearGradient id="o17" gradientUnits="userSpaceOnUse" x1="1008" x2="1425"><stop offset="0" stop-color="#009c1d"/><stop offset="0.319" stop-color="#039c16"/><stop offset="0.633" stop-color="#9c4903"/><stop offset="0.779" stop-color="#9c2400"/><stop offset="1" stop-color="#9c0a00"/></linearGradient><linearGradient id="o18" gradientUnits="userSpaceOnUse" x1="1008" x2="1442"><stop offset="0" stop-color="#009c1f"/><stop offset="0.306" stop-color="#029c19"/><stop offset="0.659" stop-color="#9c3803"/><stop offset="0.841" stop-color="#9c1600"/><stop offset="1" stop-color="#9c0700"/></linearGradient><linearGradient id="o19" gradientUnits="userSpaceOnUse" x1="1008" x2="1459"><stop offset="0" stop-color="#009c21"/><stop offset="0.297" stop-color="#049c1c"/><stop offset="0.683" stop-color="#9c2b02"/><stop offset="0.902" stop-color="#9c0b00"/><stop offset="1" stop-color="#9c0400"/></linearGradient><linearGradient id="o20" gradientUnits="userSpaceOnUse" x1="1008" x2="1476"><stop offset="0" stop-color="#009c24"/><stop offset="0.286" stop-color="#039c1f"/><stop offset="0.705" stop-color="#9c2102"/><stop offset="0.964" stop-color="#9c0300"/><stop offset="1" stop-color="#9c0100"/></linearGradient><linearGradient id="o21" gradientUnits="userSpaceOnUse" x1="1008" x2="1493"><stop offset="0" stop-color="#009c26"/><stop offset="0.276" stop-color="#039c22"/><stop offset="0.724" stop-color="#9c1902"/><stop offset="0.99" stop-color="#9c0000"/><stop offset="1" stop-color="#9c0000"/></linearGradient><linearGradient id="o22" gradientUnits="userSpaceOnUse" x1="1008" x2="1510"><stop offset="0" stop-color="#009c28"/><stop offset="0.267" stop-color="#029c25"/><stop offset="0.743" stop-color="#9c1202"/><stop offset="0.978" stop-color="#9c0000"/><stop offset="1" stop-color="#9c0000"/></linearGradient><linearGradient id="o23" gradientUnits="userSpaceOnUse" x1="1008" x2="1527"><stop offset="0" stop-color="#009c2a"/><stop offset="0.26" stop-color="#039c29"/><stop offset="0.761" stop-color="#9c0d01"/><stop offset="0.956" stop-color="#9c0000"/><stop offset="1" stop-color="#9c0000"/></linearGradient><linearGradient id="o24" gradientUnits="userSpaceOnUse" x1="1008" x2="1544"><stop offset="0" stop-color="#009c2d"/><stop offset="0.252" stop-color="#039c2c"/><stop offset="0.778" stop-color="#9c0801"/><stop offset="0.944" stop-color="#9c0000"/><stop offset="1" stop-color="#9c0000"/></linearGradient><linearGradient id="o25" gradientUnits="userSpaceOnUse" x1="1008" x2="1561"><stop offset="0" stop-color="#009c2f"/><stop offset="0.244" stop-color="#029c2f"/><stop offset="0.792" stop-color="#9c0401"/><stop offset="1" stop-color="#9c0000"/></linearGradient><linearGradient id="o26" gradientUnits="userSpaceOnUse" x1="1009" x2="1578"><stop offset="0" stop-color="#009c32"/><stop offset="0.237" stop-color="#039c33"/><stop offset="0.808" stop-color="#9c0001"/><stop offset="1" stop-color="#9c0000"/></linearGradient><linearGradient id="o27" gradientUnits="userSpaceOnUse" x1="1009" x2="1595"><stop offset="0" stop-color="#009c34"/><stop offset="0.23" stop-color="#039c36"/><stop offset="0.788" stop-color="#9c0002"/><stop offset="1" stop-color="#9c0000"/></linearGradient><linearGradient id="o28" gradientUnits="userSpaceOnUse" x1="1009" x2="1612"><stop offset="0" stop-color="#009c36"/><stop offset="0.224" stop-color="#029c39"/><stop offset="0.763" stop-color="#9c0003"/><stop offset="1" stop-color="#9c0000"/></linearGradient><linearGradient id="o29" gradientUnits="userSpaceOnUse" x1="1010" x2="1628"><stop offset="0" stop-color="#009c39"/><stop offset="0.218" stop-color="#039c3d"/><stop offset="0.739" stop-color="#9c0004"/><stop offset="1" stop-color="#9c0000"/></linearGradient><linearGradient id="o30" gradientUnits="userSpaceOnUse" x1="1010" x2="1628"><stop offset="0" stop-color="#009c3b"/><stop offset="0.218" stop-color="#039c40"/><stop offset="0.736" stop-color="#9c0005"/><stop offset="1" stop-color="#9c0000"/></linearGradient><linearGradient id="o31" gradientUnits="userSpaceOnUse" x1="1010" x2="1628"><stop offset="0" stop-color="#009c3e"/><stop offset="0.218" stop-color="#029c44"/><stop offset="0.733" stop-color="#9c0006"/><stop offset="1" stop-color="#9c0000"/></linearGradient><linearGradient id="o32" gradientUnits="userSpaceOnUse" x1="1011" x2="1628"><stop offset="0" stop-color="#009c40"/><stop offset="0.219" stop-color="#049c48"/><stop offset="0.729" stop-color="#9c0007"/><stop offset="1" stop-color="#9c0000"/></linearGradient><linearGradient id="o33" gradientUnits="userSpaceOnUse" x1="1011" x2="1628"><stop offset="0" stop-color="#009c43"/><stop offset="0.219" stop-color="#039c4b"/><stop offset="0.726" stop-color="#9c0008"/><stop offset="1" stop-color="#9c0000"/></linearGradient><linearGradient id="o34" gradientUnits="userSpaceOnUse" x1="1012" x2="1628"><stop offset="0" stop-color="#009c45"/><stop offset="0.218" stop-color="#029c4f"/><stop offset="0.722" stop-color="#9c0009"/><stop offset="1" stop-color="#9c0001"/></linearGradient><linearGradient id="o35" gradientUnits="userSpaceOnUse" x1="1012" x2="1628"><stop offset="0" stop-color="#009c48"/><stop offset="0.218" stop-color="#029c53"/><stop offset="0.622" stop-color="#9c0a10"/><stop offset="0.763" stop-color="#9c0008"/><stop offset="1" stop-color="#9c0002"/></linearGradient><linearGradient id="o36" gradientUnits="userSpaceOnUse" x1="1013" x2="1628"><stop offset="0" stop-color="#009c4b"/><stop offset="0.218" stop-color="#039c57"/><stop offset="0.715" stop-color="#9c000b"/><stop offset="1" stop-color="#9c0002"/></linearGradient><linearGradient id="o37" gradientUnits="userSpaceOnUse" x1="1013" x2="1628"><stop offset="0" stop-color="#009c4d"/><stop offset="0.218" stop-color="#039c5b"/><stop offset="0.711" stop-color="#9c000c"/><stop offset="1" stop-color="#9c0003"/></linearGradient><linearGradient id="o38" gradientUnits="userSpaceOnUse" x1="1014" x2="1628"><stop offset="0" stop-color="#009c50"/><stop offset="0.217" stop-color="#029c5f"/><stop offset="0.596" stop-color="#9c0d16"/><stop offset="0.744" stop-color="#9c000c"/><stop offset="1" stop-color="#9c0003"/></linearGradient><linearGradient id="o39" gradientUnits="userSpaceOnUse" x1="1014" x2="1628"><stop offset="0" stop-color="#009c53"/><stop offset="0.218" stop-color="#039c63"/><stop offset="0.704" stop-color="#9c000f"/><stop offset="1" stop-color="#9c0004"/></linearGradient><linearGradient id="o40" gradientUnits="userSpaceOnUse" x1="1015" x2="1628"><stop offset="0" stop-color="#009c56"/><stop offset="0.217" stop-color="#039c67"/><stop offset="0.7" stop-color="#9c0010"/><stop offset="1" stop-color="#9c0005"/></linearGradient><linearGradient id="o41" gradientUnits="userSpaceOnUse" x1="1015" x2="1628"><stop offset="0" stop-color="#009c58"/><stop offset="0.217" stop-color="#029c6b"/><stop offset="0.574" stop-color="#9c0f1c"/><stop offset="0.731" stop-color="#9c000f"/><stop offset="1" stop-color="#9c0005"/></linearGradient><linearGradient id="o42" gradientUnits="userSpaceOnUse" x1="1016" x2="1628"><stop offset="0" stop-color="#009c5b"/><stop offset="0.217" stop-color="#039c6f"/><stop offset="0.693" stop-color="#9c0012"/><stop offset="1" stop-color="#9c0006"/></linearGradient><linearGradient id="o43" gradientUnits="userSpaceOnUse" x1="1016" x2="1628"><stop offset="0" stop-color="#009c5e"/><stop offset="0.217" stop-color="#039c74"/><stop offset="0.69" stop-color="#9c0014"/><stop offset="1" stop-color="#9c0007"/></linearGradient><linearGradient id="o44" gradientUnits="userSpaceOnUse" x1="1017" x2="1627"><stop offset="0" stop-color="#009c61"/><stop offset="0.216" stop-color="#029c78"/><stop offset="0.687" stop-color="#9c0015"/><stop offset="1" stop-color="#9c0007"/></linearGradient><linearGradient id="o45" gradientUnits="userSpaceOnUse" x1="1018" x2="1625"><stop offset="0" stop-color="#009c64"/><stop offset="0.217" stop-color="#039c7d"/><stop offset="0.685" stop-color="#9c0016"/><stop offset="1" stop-color="#9c0008"/></linearGradient><linearGradient id="o46" gradientUnits="userSpaceOnUse" x1="1018" x2="1623"><stop offset="0" stop-color="#009c67"/><stop offset="0.218" stop-color="#039c81"/><stop offset="0.684" stop-color="#9c0017"/><stop offset="1" stop-color="#9c0009"/></linearGradient><linearGradient id="o47" gradientUnits="userSpaceOnUse" x1="1019" x2="1621"><stop offset="0" stop-color="#009c6a"/><stop offset="0.218" stop-color="#029c86"/><stop offset="0.683" stop-color="#9c0019"/><stop offset="1" stop-color="#9c0009"/></linearGradient><linearGradient id="o48" gradientUnits="userSpaceOnUse" x1="1019" x2="1620"><stop offset="0" stop-color="#009c6d"/><stop offset="0.218" stop-color="#029c8a"/><stop offset="0.536" stop-color="#9c142c"/><stop offset="0.707" stop-color="#9c0018"/><stop offset="1" stop-color="#9c000a"/></linearGradient><linearGradient id="o49" gradientUnits="userSpaceOnUse" x1="1020" x2="1618"><stop offset="0" stop-color="#009c70"/><stop offset="0.219" stop-color="#039c8f"/><stop offset="0.679" stop-color="#9c001b"/><stop offset="1" stop-color="#9c000b"/></linearGradient><linearGradient id="o50" gradientUnits="userSpaceOnUse" x1="1021" x2="1616"><stop offset="0" stop-color="#009c73"/><stop offset="0.218" stop-color="#029c94"/><stop offset="0.679" stop-color="#9c001d"/><stop offset="1" stop-color="#9c000b"/></linearGradient><linearGradient id="o51" gradientUnits="userSpaceOnUse" x1="1021" x2="1614"><stop offset="0" stop-color="#009c76"/><stop offset="0.219" stop-color="#029c99"/><stop offset="0.521" stop-color="#9c1735"/><stop offset="0.7" stop-color="#9c001c"/><stop offset="1" stop-color="#9c000c"/></linearGradient><linearGradient id="o52" gradientUnits="userSpaceOnUse" x1="1022" x2="1612"><stop offset="0" stop-color="#009c7a"/><stop offset="0.22" stop-color="#03999c"/><stop offset="0.676" stop-color="#9c0020"/><stop offset="1" stop-color="#9c000d"/></linearGradient><linearGradient id="o53" gradientUnits="userSpaceOnUse" x1="1023" x2="1610"><stop offset="0" stop-color="#009c7d"/><stop offset="0.204" stop-color="#00989c"/><stop offset="0.221" stop-color="#04949c"/><stop offset="0.675" stop-color="#9c0021"/><stop offset="1" stop-color="#9c000e"/></linearGradient><linearGradient id="o54" gradientUnits="userSpaceOnUse" x1="1023" x2="1608"><stop offset="0" stop-color="#009c80"/><stop offset="0.186" stop-color="#00989c"/><stop offset="0.222" stop-color="#04909c"/><stop offset="0.674" stop-color="#9c0022"/><stop offset="1" stop-color="#9c000e"/></linearGradient><linearGradient id="o55" gradientUnits="userSpaceOnUse" x1="1024" x2="1606"><stop offset="0" stop-color="#009c84"/><stop offset="0.165" stop-color="#00989c"/><stop offset="0.222" stop-color="#038b9c"/><stop offset="0.672" stop-color="#9c0024"/><stop offset="1" stop-color="#9c000f"/></linearGradient><linearGradient id="o56" gradientUnits="userSpaceOnUse" x1="1025" x2="1604"><stop offset="0" stop-color="#009c87"/><stop offset="0.145" stop-color="#00989c"/><stop offset="0.221" stop-color="#02879c"/><stop offset="0.668" stop-color="#9c0026"/><stop offset="1" stop-color="#9c0010"/></linearGradient><linearGradient id="o57" gradientUnits="userSpaceOnUse" x1="1026" x2="1602"><stop offset="0" stop-color="#009c8b"/><stop offset="0.125" stop-color="#00979c"/><stop offset="0.222" stop-color="#03839c"/><stop offset="0.667" stop-color="#9c0027"/><stop offset="1" stop-color="#9c0011"/></linearGradient><linearGradient id="o58" gradientUnits="userSpaceOnUse" x1="1026" x2="1600"><stop offset="0" stop-color="#009c8e"/><stop offset="0.106" stop-color="#00979c"/><stop offset="0.223" stop-color="#037f9c"/><stop offset="0.666" stop-color="#9c0029"/><stop offset="1" stop-color="#9c0012"/></linearGradient><linearGradient id="o59" gradientUnits="userSpaceOnUse" x1="1027" x2="1598"><stop offset="0" stop-color="#009c92"/><stop offset="0.089" stop-color="#00969c"/><stop offset="0.222" stop-color="#027c9c"/><stop offset="0.664" stop-color="#9c002b"/><stop offset="1" stop-color="#9c0012"/></linearGradient><linearGradient id="o60" gradientUnits="userSpaceOnUse" x1="1028" x2="1596"><stop offset="0" stop-color="#009c95"/><stop offset="0.079" stop-color="#00949c"/><stop offset="0.224" stop-color="#03789c"/><stop offset="0.662" stop-color="#9c002c"/><stop offset="0.996" stop-color="#9c0013"/><stop offset="1" stop-color="#9c0013"/></linearGradient><linearGradient id="o61" gradientUnits="userSpaceOnUse" x1="1029" x2="1594"><stop offset="0" stop-color="#009c99"/><stop offset="0.223" stop-color="#03759c"/><stop offset="0.66" stop-color="#9c002e"/><stop offset="0.986" stop-color="#9c0015"/><stop offset="1" stop-color="#9c0014"/></linearGradient><linearGradient id="o62" gradientUnits="userSpaceOnUse" x1="1029" x2="1592"><stop offset="0" stop-color="#009b9c"/><stop offset="0.224" stop-color="#02729c"/><stop offset="0.659" stop-color="#9c0030"/><stop offset="0.977" stop-color="#9c0016"/><stop offset="1" stop-color="#9c0015"/></linearGradient><linearGradient id="o63" gradientUnits="userSpaceOnUse" x1="1030" x2="1590"><stop offset="0" stop-color="#00979c"/><stop offset="0.225" stop-color="#036e9c"/><stop offset="0.657" stop-color="#9c0031"/><stop offset="0.966" stop-color="#9c0017"/><stop offset="1" stop-color="#9c0016"/></linearGradient><linearGradient id="o64" gradientUnits="userSpaceOnUse" x1="1031" x2="1589"><stop offset="0" stop-color="#00939c"/><stop offset="0.224" stop-color="#036b9c"/><stop offset="0.654" stop-color="#9c0033"/><stop offset="0.955" stop-color="#9c0019"/><stop offset="1" stop-color="#9c0016"/></linearGradient><linearGradient id="o65" gradientUnits="userSpaceOnUse" x1="1032" x2="1587"><stop offset="0" stop-color="#00909c"/><stop offset="0.225" stop-color="#04689c"/><stop offset="0.652" stop-color="#9c0035"/><stop offset="0.946" stop-color="#9c001a"/><stop offset="1" stop-color="#9c0017"/></linearGradient><linearGradient id="o66" gradientUnits="userSpaceOnUse" x1="1032" x2="1585"><stop offset="0" stop-color="#008d9c"/><stop offset="0.226" stop-color="#03659c"/><stop offset="0.651" stop-color="#9c0037"/><stop offset="0.937" stop-color="#9c001b"/><stop offset="1" stop-color="#9c0018"/></linearGradient><linearGradient id="o67" gradientUnits="userSpaceOnUse" x1="1033" x2="1583"><stop offset="0" stop-color="#00899c"/><stop offset="0.225" stop-color="#02639c"/><stop offset="0.649" stop-color="#9c0039"/><stop offset="0.929" stop-color="#9c001d"/><stop offset="1" stop-color="#9c0019"/></linearGradient><linearGradient id="o68" gradientUnits="userSpaceOnUse" x1="1034" x2="1581"><stop offset="0" stop-color="#00869c"/><stop offset="0.227" stop-color="#03609c"/><stop offset="0.647" stop-color="#9c003b"/><stop offset="0.92" stop-color="#9c001e"/><stop offset="1" stop-color="#9c001a"/></linearGradient><linearGradient id="o69" gradientUnits="userSpaceOnUse" x1="1035" x2="1579"><stop offset="0" stop-color="#00839c"/><stop offset="0.226" stop-color="#035d9c"/><stop offset="0.645" stop-color="#9c003d"/><stop offset="0.912" stop-color="#9c0020"/><stop offset="1" stop-color="#9c001b"/></linearGradient><linearGradient id="o70" gradientUnits="userSpaceOnUse" x1="1036" x2="1577"><stop offset="0" stop-color="#00809c"/><stop offset="0.226" stop-color="#025b9c"/><stop offset="0.643" stop-color="#9c003f"/><stop offset="0.904" stop-color="#9c0021"/><stop offset="1" stop-color="#9c001c"/></linearGradient><linearGradient id="o71" gradientUnits="userSpaceOnUse" x1="1036" x2="1575"><stop offset="0" stop-color="#007d9c"/><stop offset="0.228" stop-color="#03599c"/><stop offset="0.642" stop-color="#9c0041"/><stop offset="0.896" stop-color="#9c0023"/><stop offset="1" stop-color="#9c001d"/></linearGradient><linearGradient id="o72" gradientUnits="userSpaceOnUse" x1="1037" x2="1573"><stop offset="0" stop-color="#007b9c"/><stop offset="0.228" stop-color="#03569c"/><stop offset="0.64" stop-color="#9c0043"/><stop offset="0.888" stop-color="#9c0025"/><stop offset="1" stop-color="#9c001d"/></linearGradient><linearGradient id="o73" gradientUnits="userSpaceOnUse" x1="1038" x2="1571"><stop offset="0" stop-color="#00789c"/><stop offset="0.227" stop-color="#02549c"/><stop offset="0.638" stop-color="#9c0045"/><stop offset="0.88" stop-color="#9c0026"/><stop offset="1" stop-color="#9c001e"/></linearGradient><linearGradient id="o74" gradientUnits="userSpaceOnUse" x1="1039" x2="1569"><stop offset="0" stop-color="#00759c"/><stop offset="0.228" stop-color="#03529c"/><stop offset="0.634" stop-color="#9c0047"/><stop offset="0.868" stop-color="#9c0029"/><stop offset="1" stop-color="#9c001f"/></linearGradient><linearGradient id="o75" gradientUnits="userSpaceOnUse" x1="1040" x2="1567"><stop offset="0" stop-color="#00739c"/><stop offset="0.228" stop-color="#03509c"/><stop offset="0.634" stop-color="#9c0049"/><stop offset="0.865" stop-color="#9c002a"/><stop offset="1" stop-color="#9c0020"/></linearGradient><linearGradient id="o76" gradientUnits="userSpaceOnUse" x1="1041" x2="1565"><stop offset="0" stop-color="#00709c"/><stop offset="0.229" stop-color="#044e9c"/><stop offset="0.632" stop-color="#9c004c"/><stop offset="0.857" stop-color="#9c002c"/><stop offset="1" stop-color="#9c0021"/></linearGradient><linearGradient id="o77" gradientUnits="userSpaceOnUse" x1="1041" x2="1563"><stop offset="0" stop-color="#006e9c"/><stop offset="0.23" stop-color="#034c9c"/><stop offset="0.63" stop-color="#9c004e"/><stop offset="0.851" stop-color="#9c002e"/><stop offset="1" stop-color="#9c0022"/></linearGradient><linearGradient id="o78" gradientUnits="userSpaceOnUse" x1="1042" x2="1561"><stop offset="0" stop-color="#006b9c"/><stop offset="0.229" stop-color="#034a9c"/><stop offset="0.628" stop-color="#9c0050"/><stop offset="0.844" stop-color="#9c0030"/><stop offset="1" stop-color="#9c0023"/></linearGradient><linearGradient id="o79" gradientUnits="userSpaceOnUse" x1="1043" x2="1559"><stop offset="0" stop-color="#00699c"/><stop offset="0.231" stop-color="#03489c"/><stop offset="0.626" stop-color="#9c0053"/><stop offset="0.835" stop-color="#9c0032"/><stop offset="1" stop-color="#9c0024"/></linearGradient><linearGradient id="o80" gradientUnits="userSpaceOnUse" x1="1044" x2="1558"><stop offset="0" stop-color="#00679c"/><stop offset="0.23" stop-color="#03469c"/><stop offset="0.623" stop-color="#9c0055"/><stop offset="0.827" stop-color="#9c0034"/><stop offset="1" stop-color="#9c0025"/></linearGradient><linearGradient id="o81" gradientUnits="userSpaceOnUse" x1="1045" x2="1556"><stop offset="0" stop-color="#00659c"/><stop offset="0.229" stop-color="#03449c"/><stop offset="0.62" stop-color="#9c0058"/><stop offset="0.82" stop-color="#9c0036"/><stop offset="1" stop-color="#9c0026"/></linearGradient><linearGradient id="o82" gradientUnits="userSpaceOnUse" x1="1046" x2="1554"><stop offset="0" stop-color="#00629c"/><stop offset="0.23" stop-color="#03439c"/><stop offset="0.618" stop-color="#9c005a"/><stop offset="0.813" stop-color="#9c0038"/><stop offset="1" stop-color="#9c0027"/></linearGradient><linearGradient id="o83" gradientUnits="userSpaceOnUse" x1="1047" x2="1552"><stop offset="0" stop-color="#00609c"/><stop offset="0.23" stop-color="#03419c"/><stop offset="0.616" stop-color="#9c005d"/><stop offset="0.808" stop-color="#9c003a"/><stop offset="1" stop-color="#9c0028"/></linearGradient><linearGradient id="o84" gradientUnits="userSpaceOnUse" x1="1048" x2="1550"><stop offset="0" stop-color="#005e9c"/><stop offset="0.231" stop-color="#043f9c"/><stop offset="0.614" stop-color="#9c0060"/><stop offset="0.801" stop-color="#9c003c"/><stop offset="1" stop-color="#9c0029"/></linearGradient><linearGradient id="o85" gradientUnits="userSpaceOnUse" x1="1049" x2="1548"><stop offset="0" stop-color="#005c9c"/><stop offset="0.23" stop-color="#033e9c"/><stop offset="0.611" stop-color="#9c0063"/><stop offset="0.794" stop-color="#9c003f"/><stop offset="1" stop-color="#9c002a"/></linearGradient><linearGradient id="o86" gradientUnits="userSpaceOnUse" x1="1049" x2="1546"><stop offset="0" stop-color="#005b9c"/><stop offset="0.231" stop-color="#033c9c"/><stop offset="0.61" stop-color="#9c0065"/><stop offset="0.789" stop-color="#9c0041"/><stop offset="1" stop-color="#9c002b"/></linearGradient><linearGradient id="o87" gradientUnits="userSpaceOnUse" x1="1050" x2="1544"><stop offset="0" stop-color="#00599c"/><stop offset="0.233" stop-color="#043b9c"/><stop offset="0.607" stop-color="#9c0068"/><stop offset="0.781" stop-color="#9c0043"/><stop offset="1" stop-color="#9c002d"/></linearGradient><linearGradient id="o88" gradientUnits="userSpaceOnUse" x1="1051" x2="1542"><stop offset="0" stop-color="#00579c"/><stop offset="0.232" stop-color="#03399c"/><stop offset="0.605" stop-color="#9c006b"/><stop offset="0.776" stop-color="#9c0046"/><stop offset="1" stop-color="#9c002e"/></linearGradient><linearGradient id="o89" gradientUnits="userSpaceOnUse" x1="1052" x2="1540"><stop offset="0" stop-color="#00559c"/><stop offset="0.232" stop-color="#03389c"/><stop offset="0.602" stop-color="#9c006e"/><stop offset="0.768" stop-color="#9c0048"/><stop offset="1" stop-color="#9c002f"/></linearGradient><linearGradient id="o90" gradientUnits="userSpaceOnUse" x1="1053" x2="1538"><stop offset="0" stop-color="#00539c"/><stop offset="0.233" stop-color="#03369c"/><stop offset="0.6" stop-color="#9c0072"/><stop offset="0.763" stop-color="#9c004b"/><stop offset="1" stop-color="#9c0030"/></linearGradient><linearGradient id="o91" gradientUnits="userSpaceOnUse" x1="1054" x2="1536"><stop offset="0" stop-color="#00519c"/><stop offset="0.232" stop-color="#03359c"/><stop offset="0.598" stop-color="#9c0075"/><stop offset="0.755" stop-color="#9c004e"/><stop offset="1" stop-color="#9c0031"/></linearGradient><linearGradient id="o92" gradientUnits="userSpaceOnUse" x1="1055" x2="1534"><stop offset="0" stop-color="#00509c"/><stop offset="0.232" stop-color="#03349c"/><stop offset="0.593" stop-color="#9c0079"/><stop offset="0.747" stop-color="#9c0051"/><stop offset="1" stop-color="#9c0032"/></linearGradient><linearGradient id="o93" gradientUnits="userSpaceOnUse" x1="1056" x2="1532"><stop offset="0" stop-color="#004e9c"/><stop offset="0.233" stop-color="#03329c"/><stop offset="0.59" stop-color="#9c007c"/><stop offset="0.739" stop-color="#9c0054"/><stop offset="1" stop-color="#9c0033"/></linearGradient><linearGradient id="o94" gradientUnits="userSpaceOnUse" x1="1057" x2="1530"><stop offset="0" stop-color="#004c9c"/><stop offset="0.233" stop-color="#03319c"/><stop offset="0.588" stop-color="#9c0180"/><stop offset="0.734" stop-color="#9c0057"/><stop offset="0.992" stop-color="#9c0035"/><stop offset="1" stop-color="#9c0035"/></linearGradient><linearGradient id="o95" gradientUnits="userSpaceOnUse" x1="1058" x2="1528"><stop offset="0" stop-color="#004b9c"/><stop offset="0.234" stop-color="#04309c"/><stop offset="0.585" stop-color="#9c0184"/><stop offset="0.728" stop-color="#9c005a"/><stop offset="0.977" stop-color="#9c0038"/><stop offset="1" stop-color="#9c0036"/></linearGradient><linearGradient id="o96" gradientUnits="userSpaceOnUse" x1="1059" x2="1527"><stop offset="0" stop-color="#00499c"/><stop offset="0.233" stop-color="#032f9c"/><stop offset="0.581" stop-color="#9c0187"/><stop offset="0.72" stop-color="#9c005d"/><stop offset="0.962" stop-color="#9c003a"/><stop offset="1" stop-color="#9c0037"/></linearGradient><linearGradient id="o97" gradientUnits="userSpaceOnUse" x1="1060" x2="1525"><stop offset="0" stop-color="#00489c"/><stop offset="0.232" stop-color="#032e9c"/><stop offset="0.578" stop-color="#9c018b"/><stop offset="0.714" stop-color="#9c0061"/><stop offset="0.948" stop-color="#9c003d"/><stop offset="1" stop-color="#9c0038"/></linearGradient><linearGradient id="o98" gradientUnits="userSpaceOnUse" x1="1061" x2="1523"><stop offset="0" stop-color="#00469c"/><stop offset="0.234" stop-color="#032c9c"/><stop offset="0.576" stop-color="#9c018f"/><stop offset="0.708" stop-color="#9c0064"/><stop offset="0.933" stop-color="#9c0040"/><stop offset="1" stop-color="#9c0039"/></linearGradient><linearGradient id="o99" gradientUnits="userSpaceOnUse" x1="1062" x2="1521"><stop offset="0" stop-color="#00459c"/><stop offset="0.233" stop-color="#032b9c"/><stop offset="0.573" stop-color="#9c0193"/><stop offset="0.702" stop-color="#9c0068"/><stop offset="0.919" stop-color="#9c0043"/><stop offset="1" stop-color="#9c003b"/></linearGradient><linearGradient id="o100" gradientUnits="userSpaceOnUse" x1="1063" x2="1519"><stop offset="0" stop-color="#00439c"/><stop offset="0.232" stop-color="#032a9c"/><stop offset="0.57" stop-color="#9c0197"/><stop offset="0.697" stop-color="#9c006b"/><stop offset="0.91" stop-color="#9c0045"/><stop offset="1" stop-color="#9c003c"/></linearGradient><linearGradient id="o101" gradientUnits="userSpaceOnUse" x1="1064" x2="1517"><stop offset="0" stop-color="#00429c"/><stop offset="0.234" stop-color="#03299c"/><stop offset="0.574" stop-color="#9c0098"/><stop offset="0.702" stop-color="#9c006c"/><stop offset="0.916" stop-color="#9c0046"/><stop offset="1" stop-color="#9c003d"/></linearGradient><linearGradient id="o102" gradientUnits="userSpaceOnUse" x1="1065" x2="1515"><stop offset="0" stop-color="#00409c"/><stop offset="0.233" stop-color="#03289c"/><stop offset="0.58" stop-color="#9c0099"/><stop offset="0.709" stop-color="#9c006c"/><stop offset="0.924" stop-color="#9c0047"/><stop offset="1" stop-color="#9c003e"/></linearGradient><linearGradient id="o103" gradientUnits="userSpaceOnUse" x1="1066" x2="1513"><stop offset="0" stop-color="#003f9c"/><stop offset="0.235" stop-color="#04279c"/><stop offset="0.586" stop-color="#9c0099"/><stop offset="0.718" stop-color="#9c006c"/><stop offset="0.94" stop-color="#9c0046"/><stop offset="1" stop-color="#9c0040"/></linearGradient><linearGradient id="o104" gradientUnits="userSpaceOnUse" x1="1067" x2="1511"><stop offset="0" stop-color="#003e9c"/><stop offset="0.234" stop-color="#03269c"/><stop offset="0.592" stop-color="#9c0099"/><stop offset="0.725" stop-color="#9c006c"/><stop offset="0.948" stop-color="#9c0047"/><stop offset="1" stop-color="#9c0041"/></linearGradient><linearGradient id="o105" gradientUnits="userSpaceOnUse" x1="1068" x2="1509"><stop offset="0" stop-color="#003c9c"/><stop offset="0.234" stop-color="#03259c"/><stop offset="0.594" stop-color="#9c009b"/><stop offset="0.728" stop-color="#9c006e"/><stop offset="0.95" stop-color="#9c0048"/><stop offset="1" stop-color="#9c0042"/></linearGradient><linearGradient id="o106" gradientUnits="userSpaceOnUse" x1="1070" x2="1507"><stop offset="0" stop-color="#003b9c"/><stop offset="0.233" stop-color="#04249c"/><stop offset="0.59" stop-color="#98009c"/><stop offset="0.76" stop-color="#9c0068"/><stop offset="1" stop-color="#9c0044"/></linearGradient><linearGradient id="o107" gradientUnits="userSpaceOnUse" x1="1071" x2="1505"><stop offset="0" stop-color="#00399c"/><stop offset="0.233" stop-color="#03239c"/><stop offset="0.59" stop-color="#95009c"/><stop offset="0.622" stop-color="#9c0094"/><stop offset="0.77" stop-color="#9c0068"/><stop offset="1" stop-color="#9c0045"/></linearGradient><linearGradient id="o108" gradientUnits="userSpaceOnUse" x1="1072" x2="1503"><stop offset="0" stop-color="#00389c"/><stop offset="0.232" stop-color="#03229c"/><stop offset="0.587" stop-color="#91009c"/><stop offset="0.622" stop-color="#9c0097"/><stop offset="0.768" stop-color="#9c006b"/><stop offset="1" stop-color="#9c0047"/></linearGradient><linearGradient id="o109" gradientUnits="userSpaceOnUse" x1="1073" x2="1501"><stop offset="0" stop-color="#00379c"/><stop offset="0.234" stop-color="#03219c"/><stop offset="0.584" stop-color="#8d009c"/><stop offset="0.629" stop-color="#9c0097"/><stop offset="0.778" stop-color="#9c006b"/><stop offset="1" stop-color="#9c0048"/></linearGradient><linearGradient id="o110" gradientUnits="userSpaceOnUse" x1="1074" x2="1499"><stop offset="0" stop-color="#00369c"/><stop offset="0.233" stop-color="#03209c"/><stop offset="0.581" stop-color="#8a009c"/><stop offset="0.633" stop-color="#9c0098"/><stop offset="0.784" stop-color="#9c006b"/><stop offset="1" stop-color="#9c004a"/></linearGradient><linearGradient id="o111" gradientUnits="userSpaceOnUse" x1="1075" x2="1497"><stop offset="0" stop-color="#00359c"/><stop offset="0.232" stop-color="#031f9c"/><stop offset="0.581" stop-color="#87009c"/><stop offset="0.64" stop-color="#9c0098"/><stop offset="0.791" stop-color="#9c006c"/><stop offset="1" stop-color="#9c004b"/></linearGradient><linearGradient id="o112" gradientUnits="userSpaceOnUse" x1="1076" x2="1496"><stop offset="0" stop-color="#00349c"/><stop offset="0.233" stop-color="#031e9c"/><stop offset="0.576" stop-color="#83009c"/><stop offset="0.645" stop-color="#9c0098"/><stop offset="0.8" stop-color="#9c006c"/><stop offset="1" stop-color="#9c004c"/></linearGradient><linearGradient id="o113" gradientUnits="userSpaceOnUse" x1="1077" x2="1494"><stop offset="0" stop-color="#00329c"/><stop offset="0.233" stop-color="#031e9c"/><stop offset="0.573" stop-color="#80009c"/><stop offset="0.652" stop-color="#9c0098"/><stop offset="0.811" stop-color="#9c006b"/><stop offset="1" stop-color="#9c004e"/></linearGradient><linearGradient id="o114" gradientUnits="userSpaceOnUse" x1="1078" x2="1492"><stop offset="0" stop-color="#00319c"/><stop offset="0.234" stop-color="#041d9c"/><stop offset="0.57" stop-color="#7c009c"/><stop offset="0.659" stop-color="#9c0098"/><stop offset="0.819" stop-color="#9c006c"/><stop offset="1" stop-color="#9c004f"/></linearGradient><linearGradient id="o115" gradientUnits="userSpaceOnUse" x1="1080" x2="1490"><stop offset="0" stop-color="#00309c"/><stop offset="0.232" stop-color="#031c9c"/><stop offset="0.568" stop-color="#7a009c"/><stop offset="0.666" stop-color="#9c0098"/><stop offset="0.829" stop-color="#9c006c"/><stop offset="1" stop-color="#9c0051"/></linearGradient><linearGradient id="o116" gradientUnits="userSpaceOnUse" x1="1081" x2="1488"><stop offset="0" stop-color="#002f9c"/><stop offset="0.231" stop-color="#031b9c"/><stop offset="0.565" stop-color="#76009c"/><stop offset="0.673" stop-color="#9c0098"/><stop offset="0.838" stop-color="#9c006c"/><stop offset="1" stop-color="#9c0053"/></linearGradient><linearGradient id="o117" gradientUnits="userSpaceOnUse" x1="1082" x2="1486"><stop offset="0" stop-color="#002e9c"/><stop offset="0.233" stop-color="#041a9c"/><stop offset="0.562" stop-color="#73009c"/><stop offset="0.681" stop-color="#9c0098"/><stop offset="0.849" stop-color="#9c006c"/><stop offset="1" stop-color="#9c0054"/></linearGradient><linearGradient id="o118" gradientUnits="userSpaceOnUse" x1="1083" x2="1484"><stop offset="0" stop-color="#002d9c"/><stop offset="0.232" stop-color="#031a9c"/><stop offset="0.559" stop-color="#70009c"/><stop offset="0.688" stop-color="#9c0098"/><stop offset="0.86" stop-color="#9c006c"/><stop offset="1" stop-color="#9c0056"/></linearGradient><linearGradient id="o119" gradientUnits="userSpaceOnUse" x1="1084" x2="1482"><stop offset="0" stop-color="#002c9c"/><stop offset="0.231" stop-color="#03199c"/><stop offset="0.558" stop-color="#6e009c"/><stop offset="0.696" stop-color="#9c0098"/><stop offset="0.869" stop-color="#9c006c"/><stop offset="1" stop-color="#9c0058"/></linearGradient><linearGradient id="o120" gradientUnits="userSpaceOnUse" x1="1085" x2="1480"><stop offset="0" stop-color="#002b9c"/><stop offset="0.233" stop-color="#03189c"/><stop offset="0.554" stop-color="#6b009c"/><stop offset="0.704" stop-color="#9c0098"/><stop offset="0.881" stop-color="#9c006c"/><stop offset="1" stop-color="#9c0059"/></linearGradient><linearGradient id="o121" gradientUnits="userSpaceOnUse" x1="1086" x2="1478"><stop offset="0" stop-color="#002a9c"/><stop offset="0.232" stop-color="#03179c"/><stop offset="0.551" stop-color="#68009c"/><stop offset="0.712" stop-color="#9c0098"/><stop offset="0.89" stop-color="#9c006c"/><stop offset="1" stop-color="#9c005b"/></linearGradient><linearGradient id="o122" gradientUnits="userSpaceOnUse" x1="1088" x2="1476"><stop offset="0" stop-color="#00299c"/><stop offset="0.232" stop-color="#04179c"/><stop offset="0.549" stop-color="#66009c"/><stop offset="0.719" stop-color="#9c0098"/><stop offset="0.902" stop-color="#9c006c"/><stop offset="1" stop-color="#9c005d"/></linearGradient><linearGradient id="o123" gradientUnits="userSpaceOnUse" x1="1089" x2="1474"><stop offset="0" stop-color="#00289c"/><stop offset="0.231" stop-color="#03169c"/><stop offset="0.545" stop-color="#63009c"/><stop offset="0.727" stop-color="#9c0098"/><stop offset="0.914" stop-color="#9c006c"/><stop offset="1" stop-color="#9c005e"/></linearGradient><linearGradient id="o124" gradientUnits="userSpaceOnUse" x1="1090" x2="1472"><stop offset="0" stop-color="#00279c"/><stop offset="0.23" stop-color="#03159c"/><stop offset="0.542" stop-color="#60009c"/><stop offset="0.736" stop-color="#9c0098"/><stop offset="0.924" stop-color="#9c006c"/><stop offset="1" stop-color="#9c0060"/></linearGradient><linearGradient id="o125" gradientUnits="userSpaceOnUse" x1="1091" x2="1470"><stop offset="0" stop-color="#00269c"/><stop offset="0.232" stop-color="#04159c"/><stop offset="0.541" stop-color="#5e009c"/><stop offset="0.744" stop-color="#9c0099"/><stop offset="0.937" stop-color="#9c006c"/><stop offset="1" stop-color="#9c0062"/></linearGradient><linearGradient id="o126" gradientUnits="userSpaceOnUse" x1="1092" x2="1468"><stop offset="0" stop-color="#00259c"/><stop offset="0.231" stop-color="#03149c"/><stop offset="0.537" stop-color="#5b009c"/><stop offset="0.753" stop-color="#9c0099"/><stop offset="0.947" stop-color="#9c006c"/><stop offset="1" stop-color="#9c0064"/></linearGradient><linearGradient id="o127" gradientUnits="userSpaceOnUse" x1="1094" x2="1466"><stop offset="0" stop-color="#00249c"/><stop offset="0.228" stop-color="#03139c"/><stop offset="0.532" stop-color="#59009c"/><stop offset="0.761" stop-color="#9c0099"/><stop offset="0.96" stop-color="#9c006c"/><stop offset="1" stop-color="#9c0066"/></linearGradient><linearGradient id="o128" gradientUnits="userSpaceOnUse" x1="1095" x2="1464"><stop offset="0" stop-color="#00239c"/><stop offset="0.23" stop-color="#04139c"/><stop offset="0.531" stop-color="#57009c"/><stop offset="0.77" stop-color="#9c0099"/><stop offset="0.973" stop-color="#9c006c"/><stop offset="1" stop-color="#9c0068"/></linearGradient><linearGradient id="o129" gradientUnits="userSpaceOnUse" x1="1096" x2="1463"><stop offset="0" stop-color="#00229c"/><stop offset="0.229" stop-color="#03129c"/><stop offset="0.526" stop-color="#54009c"/><stop offset="0.777" stop-color="#9c0099"/><stop offset="0.981" stop-color="#9c006c"/><stop offset="1" stop-color="#9c0069"/></linearGradient><linearGradient id="o130" gradientUnits="userSpaceOnUse" x1="1097" x2="1461"><stop offset="0" stop-color="#00219c"/><stop offset="0.231" stop-color="#04119c"/><stop offset="0.525" stop-color="#52009c"/><stop offset="0.788" stop-color="#9c0098"/><stop offset="0.997" stop-color="#9c006c"/><stop offset="1" stop-color="#9c006b"/></linearGradient><linearGradient id="o131" gradientUnits="userSpaceOnUse" x1="1098" x2="1459"><stop offset="0" stop-color="#00209c"/><stop offset="0.23" stop-color="#03119c"/><stop offset="0.521" stop-color="#50009c"/><stop offset="0.798" stop-color="#9c0098"/><stop offset="1" stop-color="#9c006d"/></linearGradient><linearGradient id="o132" gradientUnits="userSpaceOnUse" x1="1099" x2="1457"><stop offset="0" stop-color="#00209c"/><stop offset="0.229" stop-color="#03109c"/><stop offset="0.517" stop-color="#4e009c"/><stop offset="0.807" stop-color="#9c0098"/><stop offset="1" stop-color="#9c006f"/></linearGradient><linearGradient id="o133" gradientUnits="userSpaceOnUse" x1="1101" x2="1455"><stop offset="0" stop-color="#001f9c"/><stop offset="0.229" stop-color="#04109c"/><stop offset="0.514" stop-color="#4c009c"/><stop offset="0.816" stop-color="#9c0098"/><stop offset="1" stop-color="#9c0071"/></linearGradient><linearGradient id="o134" gradientUnits="userSpaceOnUse" x1="1102" x2="1453"><stop offset="0" stop-color="#001e9c"/><stop offset="0.228" stop-color="#030f9c"/><stop offset="0.51" stop-color="#4a009c"/><stop offset="0.826" stop-color="#9c0098"/><stop offset="1" stop-color="#9c0073"/></linearGradient><linearGradient id="o135" gradientUnits="userSpaceOnUse" x1="1103" x2="1451"><stop offset="0" stop-color="#001d9c"/><stop offset="0.227" stop-color="#030f9c"/><stop offset="0.509" stop-color="#48009c"/><stop offset="0.836" stop-color="#9c0098"/><stop offset="1" stop-color="#9c0076"/></linearGradient><linearGradient id="o136" gradientUnits="userSpaceOnUse" x1="1104" x2="1449"><stop offset="0" stop-color="#001c9c"/><stop offset="0.229" stop-color="#040e9c"/><stop offset="0.507" stop-color="#46009c"/><stop offset="0.846" stop-color="#9c0098"/><stop offset="1" stop-color="#9c0078"/></linearGradient><linearGradient id="o137" gradientUnits="userSpaceOnUse" x1="1106" x2="1447"><stop offset="0" stop-color="#001b9c"/><stop offset="0.226" stop-color="#030d9c"/><stop offset="0.501" stop-color="#44009c"/><stop offset="0.856" stop-color="#9c0098"/><stop offset="1" stop-color="#9c007a"/></linearGradient><linearGradient id="o138" gradientUnits="userSpaceOnUse" x1="1107" x2="1445"><stop offset="0" stop-color="#001b9c"/><stop offset="0.228" stop-color="#040d9c"/><stop offset="0.5" stop-color="#43009c"/><stop offset="0.867" stop-color="#9c0098"/><stop offset="1" stop-color="#9c007c"/></linearGradient><linearGradient id="o139" gradientUnits="userSpaceOnUse" x1="1108" x2="1443"><stop offset="0" stop-color="#001a9c"/><stop offset="0.227" stop-color="#040c9c"/><stop offset="0.499" stop-color="#41009c"/><stop offset="0.878" stop-color="#9c0098"/><stop offset="1" stop-color="#9c007e"/></linearGradient><linearGradient id="o140" gradientUnits="userSpaceOnUse" x1="1109" x2="1441"><stop offset="0" stop-color="#00199c"/><stop offset="0.226" stop-color="#030c9c"/><stop offset="0.494" stop-color="#3f009c"/><stop offset="0.889" stop-color="#9c0098"/><stop offset="1" stop-color="#9c0081"/></linearGradient><linearGradient id="o141" gradientUnits="userSpaceOnUse" x1="1111" x2="1439"><stop offset="0" stop-color="#00189c"/><stop offset="0.226" stop-color="#040b9c"/><stop offset="0.491" stop-color="#3e009c"/><stop offset="0.899" stop-color="#9c0098"/><stop offset="1" stop-color="#9c0083"/></linearGradient><linearGradient id="o142" gradientUnits="userSpaceOnUse" x1="1112" x2="1437"><stop offset="0" stop-color="#00189c"/><stop offset="0.225" stop-color="#030b9c"/><stop offset="0.489" stop-color="#3c009c"/><stop offset="0.911" stop-color="#9c0098"/><stop offset="1" stop-color="#9c0086"/></linearGradient><linearGradient id="o143" gradientUnits="userSpaceOnUse" x1="1113" x2="1435"><stop offset="0" stop-color="#00179c"/><stop offset="0.227" stop-color="#040a9c"/><stop offset="0.488" stop-color="#3b009c"/><stop offset="0.922" stop-color="#9c0098"/><stop offset="1" stop-color="#9c0088"/></linearGradient><linearGradient id="o144" gradientUnits="userSpaceOnUse" x1="1114" x2="1433"><stop offset="0" stop-color="#00169c"/><stop offset="0.226" stop-color="#040a9c"/><stop offset="0.486" stop-color="#3a009c"/><stop offset="0.934" stop-color="#9c0098"/><stop offset="1" stop-color="#9c008b"/></linearGradient><linearGradient id="o145" gradientUnits="userSpaceOnUse" x1="1116" x2="1432"><stop offset="0" stop-color="#00159c"/><stop offset="0.222" stop-color="#03099c"/><stop offset="0.481" stop-color="#38009c"/><stop offset="0.943" stop-color="#9c0098"/><stop offset="1" stop-color="#9c008d"/></linearGradient><linearGradient id="o146" gradientUnits="userSpaceOnUse" x1="1117" x2="1430"><stop offset="0" stop-color="#00159c"/><stop offset="0.224" stop-color="#04099c"/><stop offset="0.479" stop-color="#37009c"/><stop offset="0.955" stop-color="#9c0098"/><stop offset="1" stop-color="#9c008f"/></linearGradient><linearGradient id="o147" gradientUnits="userSpaceOnUse" x1="1118" x2="1428"><stop offset="0" stop-color="#00149c"/><stop offset="0.223" stop-color="#04089c"/><stop offset="0.481" stop-color="#36009c"/><stop offset="0.968" stop-color="#9c0098"/><stop offset="1" stop-color="#9c0092"/></linearGradient><linearGradient id="o148" gradientUnits="userSpaceOnUse" x1="1120" x2="1426"><stop offset="0" stop-color="#00139c"/><stop offset="0.219" stop-color="#03089c"/><stop offset="0.48" stop-color="#36009c"/><stop offset="0.98" stop-color="#9c0098"/><stop offset="1" stop-color="#9c0094"/></linearGradient><linearGradient id="o149" gradientUnits="userSpaceOnUse" x1="1121" x2="1424"><stop offset="0" stop-color="#00139c"/><stop offset="0.221" stop-color="#04079c"/><stop offset="0.485" stop-color="#36009c"/><stop offset="0.993" stop-color="#9c0099"/><stop offset="1" stop-color="#9c0097"/></linearGradient><linearGradient id="o150" gradientUnits="userSpaceOnUse" x1="1122" x2="1422"><stop offset="0" stop-color="#00129c"/><stop offset="0.22" stop-color="#04079c"/><stop offset="0.487" stop-color="#35009c"/><stop offset="1" stop-color="#9c009a"/></linearGradient><linearGradient id="o151" gradientUnits="userSpaceOnUse" x1="1123" x2="1420"><stop offset="0" stop-color="#00119c"/><stop offset="0.222" stop-color="#04069c"/><stop offset="0.498" stop-color="#37009c"/><stop offset="1" stop-color="#9a009c"/></linearGradient><linearGradient id="o152" gradientUnits="userSpaceOnUse" x1="1125" x2="1418"><stop offset="0" stop-color="#00119c"/><stop offset="0.218" stop-color="#04069c"/><stop offset="0.509" stop-color="#38009c"/><stop offset="1" stop-color="#98009c"/></linearGradient><linearGradient id="o153" gradientUnits="userSpaceOnUse" x1="1126" x2="1416"><stop offset="0" stop-color="#00109c"/><stop offset="0.217" stop-color="#03069c"/><stop offset="0.524" stop-color="#3a009c"/><stop offset="1" stop-color="#95009c"/></linearGradient><linearGradient id="o154" gradientUnits="userSpaceOnUse" x1="1128" x2="1414"><stop offset="0" stop-color="#000f9c"/><stop offset="0.217" stop-color="#04059c"/><stop offset="0.57" stop-color="#41009c"/><stop offset="1" stop-color="#92009c"/></linearGradient><linearGradient id="o155" gradientUnits="userSpaceOnUse" x1="1129" x2="1412"><stop offset="0" stop-color="#000f9c"/><stop offset="0.216" stop-color="#04059c"/><stop offset="0.625" stop-color="#4a009c"/><stop offset="1" stop-color="#8f009c"/></linearGradient><linearGradient id="o156" gradientUnits="userSpaceOnUse" x1="1130" x2="1410"><stop offset="0" stop-color="#000e9c"/><stop offset="0.214" stop-color="#03049c"/><stop offset="0.743" stop-color="#5e009c"/><stop offset="1" stop-color="#8d009c"/></linearGradient><linearGradient id="o157" gradientUnits="userSpaceOnUse" x1="1132" x2="1408"><stop offset="0" stop-color="#000d9c"/><stop offset="0.214" stop-color="#04049c"/><stop offset="1" stop-color="#8a009c"/></linearGradient><linearGradient id="o158" gradientUnits="userSpaceOnUse" x1="1133" x2="1406"><stop offset="0" stop-color="#000d9c"/><stop offset="0.212" stop-color="#04039c"/><stop offset="1" stop-color="#88009c"/></linearGradient><linearGradient id="o159" gradientUnits="userSpaceOnUse" x1="1134" x2="1404"><stop offset="0" stop-color="#000c9c"/><stop offset="0.215" stop-color="#04039c"/><stop offset="1" stop-color="#85009c"/></linearGradient><linearGradient id="o160" gradientUnits="userSpaceOnUse" x1="1136" x2="1402"><stop offset="0" stop-color="#000b9c"/><stop offset="0.211" stop-color="#04039c"/><stop offset="1" stop-color="#83009c"/></linearGradient><linearGradient id="o161" gradientUnits="userSpaceOnUse" x1="1137" x2="1401"><stop offset="0" stop-color="#000b9c"/><stop offset="0.212" stop-color="#04029c"/><stop offset="1" stop-color="#81009c"/></linearGradient><linearGradient id="o162" gradientUnits="userSpaceOnUse" x1="1139" x2="1399"><stop offset="0" stop-color="#000a9c"/><stop offset="0.208" stop-color="#04029c"/><stop offset="1" stop-color="#7f009c"/></linearGradient><linearGradient id="o163" gradientUnits="userSpaceOnUse" x1="1140" x2="1397"><stop offset="0" stop-color="#000a9c"/><stop offset="0.206" stop-color="#04019c"/><stop offset="1" stop-color="#7c009c"/></linearGradient><linearGradient id="o164" gradientUnits="userSpaceOnUse" x1="1141" x2="1395"><stop offset="0" stop-color="#00099c"/><stop offset="0.209" stop-color="#04019c"/><stop offset="1" stop-color="#7a009c"/></linearGradient><linearGradient id="o165" gradientUnits="userSpaceOnUse" x1="1143" x2="1393"><stop offset="0" stop-color="#00089c"/><stop offset="0.204" stop-color="#04019c"/><stop offset="1" stop-color="#78009c"/></linearGradient><linearGradient id="o166" gradientUnits="userSpaceOnUse" x1="1144" x2="1391"><stop offset="0" stop-color="#00089c"/><stop offset="0.206" stop-color="#04009c"/><stop offset="1" stop-color="#75009c"/></linearGradient><linearGradient id="o167" gradientUnits="userSpaceOnUse" x1="1146" x2="1389"><stop offset="0" stop-color="#00079c"/><stop offset="0.202" stop-color="#04009c"/><stop offset="1" stop-color="#73009c"/></linearGradient><linearGradient id="o168" gradientUnits="userSpaceOnUse" x1="1147" x2="1387"><stop offset="0" stop-color="#00079c"/><stop offset="0.2" stop-color="#04009c"/><stop offset="1" stop-color="#71009c"/></linearGradient><linearGradient id="o169" gradientUnits="userSpaceOnUse" x1="1149" x2="1385"><stop offset="0" stop-color="#00069c"/><stop offset="0.199" stop-color="#04009c"/><stop offset="1" stop-color="#6f009c"/></linearGradient><linearGradient id="o170" gradientUnits="userSpaceOnUse" x1="1150" x2="1383"><stop offset="0" stop-color="#00069c"/><stop offset="0.197" stop-color="#04009c"/><stop offset="1" stop-color="#6d009c"/></linearGradient><linearGradient id="o171" gradientUnits="userSpaceOnUse" x1="1152" x2="1381"><stop offset="0" stop-color="#00059c"/><stop offset="0.197" stop-color="#04009c"/><stop offset="1" stop-color="#6b009c"/></linearGradient><linearGradient id="o172" gradientUnits="userSpaceOnUse" x1="1153" x2="1379"><stop offset="0" stop-color="#00059c"/><stop offset="0.195" stop-color="#04009c"/><stop offset="1" stop-color="#69009c"/></linearGradient><linearGradient id="o173" gradientUnits="userSpaceOnUse" x1="1155" x2="1377"><stop offset="0" stop-color="#00049c"/><stop offset="0.194" stop-color="#04009c"/><stop offset="1" stop-color="#67009c"/></linearGradient><linearGradient id="o174" gradientUnits="userSpaceOnUse" x1="1156" x2="1375"><stop offset="0" stop-color="#00049c"/><stop offset="0.192" stop-color="#04009c"/><stop offset="1" stop-color="#65009c"/></linearGradient><linearGradient id="o175" gradientUnits="userSpaceOnUse" x1="1158" x2="1373"><stop offset="0" stop-color="#00039c"/><stop offset="0.191" stop-color="#04009c"/><stop offset="1" stop-color="#63009c"/></linearGradient><linearGradient id="o176" gradientUnits="userSpaceOnUse" x1="1160" x2="1371"><stop offset="0" stop-color="#00029c"/><stop offset="0.185" stop-color="#04009c"/><stop offset="1" stop-color="#61009c"/></linearGradient><linearGradient id="o177" gradientUnits="userSpaceOnUse" x1="1161" x2="1370"><stop offset="0" stop-color="#00029c"/><stop offset="0.182" stop-color="#04009c"/><stop offset="1" stop-color="#5f009c"/></linearGradient><linearGradient id="o178" gradientUnits="userSpaceOnUse" x1="1163" x2="1368"><stop offset="0" stop-color="#00019c"/><stop offset="0.18" stop-color="#04009c"/><stop offset="1" stop-color="#5d009c"/></linearGradient><linearGradient id="o179" gradientUnits="userSpaceOnUse" x1="1164" x2="1366"><stop offset="0" stop-color="#00019c"/><stop offset="0.183" stop-color="#05009c"/><stop offset="1" stop-color="#5c009c"/></linearGradient><linearGradient id="o180" gradientUnits="userSpaceOnUse" x1="1166" x2="1364"><stop offset="0" stop-color="#00009c"/><stop offset="0.177" stop-color="#05009c"/><stop offset="1" stop-color="#5a009c"/></linearGradient><linearGradient id="o181" gradientUnits="userSpaceOnUse" x1="1168" x2="1362"><stop offset="0" stop-color="#00009c"/><stop offset="0.175" stop-color="#05009c"/><stop offset="1" stop-color="#58009c"/></linearGradient><linearGradient id="o182" gradientUnits="userSpaceOnUse" x1="1169" x2="1360"><stop offset="0" stop-color="#00009c"/><stop offset="0.178" stop-color="#05009c"/><stop offset="1" stop-color="#56009c"/></linearGradient><linearGradient id="o183" gradientUnits="userSpaceOnUse" x1="1171" x2="1358"><stop offset="0" stop-color="#00009c"/><stop offset="0.171" stop-color="#05009c"/><stop offset="1" stop-color="#54009c"/></linearGradient><linearGradient id="o184" gradientUnits="userSpaceOnUse" x1="1173" x2="1356"><stop offset="0" stop-color="#00009c"/><stop offset="0.169" stop-color="#05009c"/><stop offset="1" stop-color="#53009c"/></linearGradient><linearGradient id="o185" gradientUnits="userSpaceOnUse" x1="1174" x2="1354"><stop offset="0" stop-color="#00009c"/><stop offset="0.172" stop-color="#06009c"/><stop offset="1" stop-color="#51009c"/></linearGradient><linearGradient id="o186" gradientUnits="userSpaceOnUse" x1="1176" x2="1352"><stop offset="0" stop-color="#00009c"/><stop offset="0.17" stop-color="#06009c"/><stop offset="1" stop-color="#4f009c"/></linearGradient><linearGradient id="o187" gradientUnits="userSpaceOnUse" x1="1178" x2="1350"><stop offset="0" stop-color="#00009c"/><stop offset="0.169" stop-color="#06009c"/><stop offset="1" stop-color="#4e009c"/></linearGradient><linearGradient id="o188" gradientUnits="userSpaceOnUse" x1="1180" x2="1348"><stop offset="0" stop-color="#00009c"/><stop offset="0.179" stop-color="#07009c"/><stop offset="1" stop-color="#4c009c"/></linearGradient><linearGradient id="o189" gradientUnits="userSpaceOnUse" x1="1181" x2="1346"><stop offset="0" stop-color="#00009c"/><stop offset="0.182" stop-color="#08009c"/><stop offset="1" stop-color="#4a009c"/></linearGradient><linearGradient id="o190" gradientUnits="userSpaceOnUse" x1="1183" x2="1344"><stop offset="0" stop-color="#00009c"/><stop offset="0.193" stop-color="#09009c"/><stop offset="1" stop-color="#49009c"/></linearGradient><linearGradient id="o191" gradientUnits="userSpaceOnUse" x1="1185" x2="1342"><stop offset="0" stop-color="#00009c"/><stop offset="0.236" stop-color="#0c009c"/><stop offset="1" stop-color="#47009c"/></linearGradient><linearGradient id="o192" gradientUnits="userSpaceOnUse" x1="1187" x2="1340"><stop offset="0" stop-color="#00009c"/><stop offset="0.373" stop-color="#17009c"/><stop offset="1" stop-color="#46009c"/></linearGradient><linearGradient id="o193" gradientUnits="userSpaceOnUse" x1="1189" x2="1338"><stop offset="0" stop-color="#00009c"/><stop offset="1" stop-color="#44009c"/></linearGradient><linearGradient id="o194" gradientUnits="userSpaceOnUse" x1="1191" x2="1337"><stop offset="0" stop-color="#00009c"/><stop offset="1" stop-color="#43009c"/></linearGradient><linearGradient id="o195" gradientUnits="userSpaceOnUse" x1="1193" x2="1335"><stop offset="0" stop-color="#00009c"/><stop offset="1" stop-color="#41009c"/></linearGradient><linearGradient id="o196" gradientUnits="userSpaceOnUse" x1="1195" x2="1333"><stop offset="0" stop-color="#00009c"/><stop offset="1" stop-color="#40009c"/></linearGradient><linearGradient id="o197" gradientUnits="userSpaceOnUse" x1="1197" x2="1331"><stop offset="0" stop-color="#00009c"/><stop offset="1" stop-color="#3e009c"/></linearGradient><linearGradient id="o198" gradientUnits="userSpaceOnUse" x1="1199" x2="1329"><stop offset="0" stop-color="#01009c"/><stop offset="1" stop-color="#3d009c"/></linearGradient><linearGradient id="o199" gradientUnits="userSpaceOnUse" x1="1201" x2="1327"><stop offset="0" stop-color="#01009c"/><stop offset="1" stop-color="#3c009c"/></linearGradient><linearGradient id="o200" gradientUnits="userSpaceOnUse" x1="1203" x2="1325"><stop offset="0" stop-color="#02009c"/><stop offset="1" stop-color="#3a009c"/></linearGradient><linearGradient id="o201" gradientUnits="userSpaceOnUse" x1="1206" x2="1323"><stop offset="0" stop-color="#03009c"/><stop offset="1" stop-color="#39009c"/></linearGradient><linearGradient id="o202" gradientUnits="userSpaceOnUse" x1="1208" x2="1321"><stop offset="0" stop-color="#04009c"/><stop offset="1" stop-color="#37009c"/></linearGradient><linearGradient id="o203" gradientUnits="userSpaceOnUse" x1="1210" x2="1319"><stop offset="0" stop-color="#05009c"/><stop offset="1" stop-color="#36009c"/></linearGradient><linearGradient id="o204" gradientUnits="userSpaceOnUse" x1="1212" x2="1317"><stop offset="0" stop-color="#05009c"/><stop offset="1" stop-color="#35009c"/></linearGradient><linearGradient id="o205" gradientUnits="userSpaceOnUse" x1="1215" x2="1315"><stop offset="0" stop-color="#07009c"/><stop offset="1" stop-color="#33009c"/></linearGradient><linearGradient id="o206" gradientUnits="userSpaceOnUse" x1="1217" x2="1313"><stop offset="0" stop-color="#07009c"/><stop offset="1" stop-color="#32009c"/></linearGradient><linearGradient id="o207" gradientUnits="userSpaceOnUse" x1="1219" x2="1311"><stop offset="0" stop-color="#08009c"/><stop offset="1" stop-color="#31009c"/></linearGradient><linearGradient id="o208" gradientUnits="userSpaceOnUse" x1="1222" x2="1309"><stop offset="0" stop-color="#09009c"/><stop offset="1" stop-color="#2f009c"/></linearGradient><linearGradient id="o209" gradientUnits="userSpaceOnUse" x1="1224" x2="1307"><stop offset="0" stop-color="#0a009c"/><stop offset="1" stop-color="#2e009c"/></linearGradient><linearGradient id="o210" gradientUnits="userSpaceOnUse" x1="1227" x2="1306"><stop offset="0" stop-color="#0b009c"/><stop offset="1" stop-color="#2d009c"/></linearGradient><linearGradient id="o211" gradientUnits="userSpaceOnUse" x1="1229" x2="1304"><stop offset="0" stop-color="#0b009c"/><stop offset="1" stop-color="#2c009c"/></linearGradient><linearGradient id="o212" gradientUnits="userSpaceOnUse" x1="1231" x2="1302"><stop offset="0" stop-color="#0c009c"/><stop offset="1" stop-color="#2b009c"/></linearGradient><linearGradient id="o213" gradientUnits="userSpaceOnUse" x1="1234" x2="1300"><stop offset="0" stop-color="#0d009c"/><stop offset="1" stop-color="#29009c"/></linearGradient><linearGradient id="o214" gradientUnits="userSpaceOnUse" x1="1236" x2="1298"><stop offset="0" stop-color="#0e009c"/><stop offset="1" stop-color="#28009c"/></linearGradient><linearGradient id="o215" gradientUnits="userSpaceOnUse" x1="1239" x2="1296"><stop offset="0" stop-color="#0f009c"/><stop offset="1" stop-color="#27009c"/></linearGradient><linearGradient id="o216" gradientUnits="userSpaceOnUse" x1="1241" x2="1294"><stop offset="0" stop-color="#0f009c"/><stop offset="1" stop-color="#26009c"/></linearGradient><linearGradient id="o217" gradientUnits="userSpaceOnUse" x1="1244" x2="1292"><stop offset="0" stop-color="#11009c"/><stop offset="1" stop-color="#25009c"/></linearGradient><linearGradient id="o218" gradientUnits="userSpaceOnUse" x1="1246" x2="1290"><stop offset="0" stop-color="#11009c"/><stop offset="1" stop-color="#24009c"/></linearGradient><linearGradient id="o219" gradientUnits="userSpaceOnUse" x1="1248" x2="1288"><stop offset="0" stop-color="#12009c"/><stop offset="1" stop-color="#22009c"/></linearGradient><linearGradient id="o220" gradientUnits="userSpaceOnUse" x1="1251" x2="1286"><stop offset="0" stop-color="#13009c"/><stop offset="1" stop-color="#21009c"/></linearGradient><linearGradient id="o221" gradientUnits="userSpaceOnUse" x1="1253" x2="1284"><stop offset="0" stop-color="#13009c"/><stop offset="1" stop-color="#20009c"/></linearGradient><linearGradient id="o222" gradientUnits="userSpaceOnUse" x1="1255" x2="1282"><stop offset="0" stop-color="#14009c"/><stop offset="1" stop-color="#1f009c"/></linearGradient><linearGradient id="o223" gradientUnits="userSpaceOnUse" x1="1258" x2="1280"><stop offset="0" stop-color="#15009c"/><stop offset="1" stop-color="#1e009c"/></linearGradient><linearGradient id="o224" gradientUnits="userSpaceOnUse" x1="1260" x2="1278"><stop offset="0" stop-color="#16009c"/><stop offset="1" stop-color="#1d009c"/></linearGradient><linearGradient id="o225" gradientUnits="userSpaceOnUse" x1="1263" x2="1276"><stop offset="0" stop-color="#16009c"/><stop offset="1" stop-color="#1c009c"/></linearGradient><linearGradient id="o226" gradientUnits="userSpaceOnUse" x1="1266" x2="1275"><stop offset="0" stop-color="#17009c"/><stop offset="1" stop-color="#1b009c"/></linearGradient><linearGradient id="i0" gradientUnits="userSpaceOnUse" x1="1135" x2="1155"><stop offset="0" stop-color="#00ff02"/><stop offset="0.6" stop-color="#1aff00"/><stop offset="1" stop-color="#2fff00"/></linearGradient><linearGradient id="i1" gradientUnits="userSpaceOnUse" x1="1135" x2="1176"><stop offset="0" stop-color="#00ff06"/><stop offset="0.146" stop-color="#0aff05"/><stop offset="1" stop-color="#6aff00"/></linearGradient><linearGradient id="i2" gradientUnits="userSpaceOnUse" x1="1136" x2="1198"><stop offset="0" stop-color="#00ff0a"/><stop offset="0.452" stop-color="#46ff05"/><stop offset="1" stop-color="#b2ff00"/></linearGradient><linearGradient id="i3" gradientUnits="userSpaceOnUse" x1="1136" x2="1219"><stop offset="0" stop-color="#00ff0f"/><stop offset="0.145" stop-color="#1aff0d"/><stop offset="0.614" stop-color="#8dff05"/><stop offset="0.988" stop-color="#ffff00"/><stop offset="1" stop-color="#fffb00"/></linearGradient><linearGradient id="i4" gradientUnits="userSpaceOnUse" x1="1136" x2="1240"><stop offset="0" stop-color="#00ff14"/><stop offset="0.058" stop-color="#0aff13"/><stop offset="0.442" stop-color="#7cff0b"/><stop offset="0.76" stop-color="#f3ff04"/><stop offset="0.798" stop-color="#fffa03"/><stop offset="0.981" stop-color="#ffbd00"/><stop offset="1" stop-color="#ffb800"/></linearGradient><linearGradient id="i5" gradientUnits="userSpaceOnUse" x1="1137" x2="1262"><stop offset="0" stop-color="#00ff18"/><stop offset="0.216" stop-color="#45ff14"/><stop offset="0.504" stop-color="#baff0d"/><stop offset="0.648" stop-color="#fffe09"/><stop offset="0.8" stop-color="#ffbf03"/><stop offset="1" stop-color="#ff8900"/></linearGradient><linearGradient id="i6" gradientUnits="userSpaceOnUse" x1="1137" x2="1283"><stop offset="0" stop-color="#00ff1d"/><stop offset="0.075" stop-color="#18ff1c"/><stop offset="0.336" stop-color="#89ff15"/><stop offset="0.555" stop-color="#fffd0f"/><stop offset="0.685" stop-color="#ffbe08"/><stop offset="0.87" stop-color="#ff8501"/><stop offset="1" stop-color="#ff6a00"/></linearGradient><linearGradient id="i7" gradientUnits="userSpaceOnUse" x1="1137" x2="1304"><stop offset="0" stop-color="#00ff22"/><stop offset="0.036" stop-color="#0aff21"/><stop offset="0.269" stop-color="#7cff1c"/><stop offset="0.467" stop-color="#f5ff16"/><stop offset="0.485" stop-color="#fffc15"/><stop offset="0.599" stop-color="#ffbd0d"/><stop offset="0.76" stop-color="#ff8405"/><stop offset="1" stop-color="#ff5200"/></linearGradient><linearGradient id="i8" gradientUnits="userSpaceOnUse" x1="1138" x2="1326"><stop offset="0" stop-color="#00ff27"/><stop offset="0.144" stop-color="#47ff24"/><stop offset="0.33" stop-color="#bbff1f"/><stop offset="0.426" stop-color="#fffb1b"/><stop offset="0.527" stop-color="#ffbc11"/><stop offset="0.67" stop-color="#ff8409"/><stop offset="0.883" stop-color="#ff5201"/><stop offset="1" stop-color="#ff3f00"/></linearGradient><linearGradient id="i9" gradientUnits="userSpaceOnUse" x1="1138" x2="1347"><stop offset="0" stop-color="#00ff2c"/><stop offset="0.053" stop-color="#19ff2b"/><stop offset="0.234" stop-color="#8dff26"/><stop offset="0.378" stop-color="#ffff22"/><stop offset="0.464" stop-color="#ffc117"/><stop offset="0.589" stop-color="#ff880e"/><stop offset="0.77" stop-color="#ff5605"/><stop offset="1" stop-color="#ff3100"/></linearGradient><linearGradient id="i10" gradientUnits="userSpaceOnUse" x1="1138" x2="1369"><stop offset="0" stop-color="#00ff31"/><stop offset="0.026" stop-color="#0bff30"/><stop offset="0.19" stop-color="#7cff2d"/><stop offset="0.329" stop-color="#f3ff29"/><stop offset="0.346" stop-color="#fffa27"/><stop offset="0.429" stop-color="#ffba1b"/><stop offset="0.545" stop-color="#ff8211"/><stop offset="0.719" stop-color="#ff5007"/><stop offset="0.991" stop-color="#ff2600"/><stop offset="1" stop-color="#ff2500"/></linearGradient><linearGradient id="i11" gradientUnits="userSpaceOnUse" x1="1139" x2="1390"><stop offset="0" stop-color="#00ff36"/><stop offset="0.104" stop-color="#45ff34"/><stop offset="0.243" stop-color="#bcff31"/><stop offset="0.311" stop-color="#fffd2f"/><stop offset="0.382" stop-color="#ffbf21"/><stop offset="0.486" stop-color="#ff8615"/><stop offset="0.637" stop-color="#ff540b"/><stop offset="0.876" stop-color="#ff2902"/><stop offset="1" stop-color="#ff1b00"/></linearGradient><linearGradient id="i12" gradientUnits="userSpaceOnUse" x1="1139" x2="1411"><stop offset="0" stop-color="#00ff3b"/><stop offset="0.04" stop-color="#19ff3a"/><stop offset="0.176" stop-color="#8cff38"/><stop offset="0.287" stop-color="#fffc35"/><stop offset="0.353" stop-color="#ffbe27"/><stop offset="0.449" stop-color="#ff8519"/><stop offset="0.588" stop-color="#ff540e"/><stop offset="0.809" stop-color="#ff2804"/><stop offset="1" stop-color="#ff1300"/></linearGradient><linearGradient id="i13" gradientUnits="userSpaceOnUse" x1="1139" x2="1433"><stop offset="0" stop-color="#00ff40"/><stop offset="0.02" stop-color="#0bff40"/><stop offset="0.146" stop-color="#7bff3e"/><stop offset="0.252" stop-color="#f1ff3c"/><stop offset="0.265" stop-color="#fffb3b"/><stop offset="0.327" stop-color="#ffbd2c"/><stop offset="0.415" stop-color="#ff841e"/><stop offset="0.544" stop-color="#ff5311"/><stop offset="0.748" stop-color="#ff2806"/><stop offset="1" stop-color="#ff0b00"/></linearGradient><linearGradient id="i14" gradientUnits="userSpaceOnUse" x1="1140" x2="1454"><stop offset="0" stop-color="#00ff45"/><stop offset="0.083" stop-color="#47ff45"/><stop offset="0.191" stop-color="#bdff44"/><stop offset="0.242" stop-color="#ffff43"/><stop offset="0.299" stop-color="#ffbf32"/><stop offset="0.379" stop-color="#ff8723"/><stop offset="0.497" stop-color="#ff5515"/><stop offset="0.682" stop-color="#ff2a09"/><stop offset="0.997" stop-color="#ff0500"/><stop offset="1" stop-color="#ff0500"/></linearGradient><linearGradient id="i15" gradientUnits="userSpaceOnUse" x1="1140" x2="1474"><stop offset="0" stop-color="#00ff4b"/><stop offset="0.033" stop-color="#1aff4b"/><stop offset="0.141" stop-color="#8cff4a"/><stop offset="0.228" stop-color="#fffe4a"/><stop offset="0.281" stop-color="#ffbe37"/><stop offset="0.356" stop-color="#ff8627"/><stop offset="0.467" stop-color="#ff5418"/><stop offset="0.641" stop-color="#ff290b"/><stop offset="0.937" stop-color="#ff0501"/><stop offset="1" stop-color="#ff0000"/></linearGradient><linearGradient id="i16" gradientUnits="userSpaceOnUse" x1="1140" x2="1474"><stop offset="0" stop-color="#00ff50"/><stop offset="0.018" stop-color="#0bff50"/><stop offset="0.129" stop-color="#7eff51"/><stop offset="0.222" stop-color="#f8ff51"/><stop offset="0.231" stop-color="#fff94f"/><stop offset="0.284" stop-color="#ffbb3c"/><stop offset="0.362" stop-color="#ff822a"/><stop offset="0.476" stop-color="#ff511a"/><stop offset="0.656" stop-color="#ff260d"/><stop offset="0.964" stop-color="#ff0202"/><stop offset="1" stop-color="#ff0001"/></linearGradient><linearGradient id="i17" gradientUnits="userSpaceOnUse" x1="1141" x2="1472"><stop offset="0" stop-color="#00ff56"/><stop offset="0.076" stop-color="#45ff56"/><stop offset="0.175" stop-color="#baff57"/><stop offset="0.227" stop-color="#fffc57"/><stop offset="0.281" stop-color="#ffbd42"/><stop offset="0.356" stop-color="#ff842f"/><stop offset="0.468" stop-color="#ff531e"/><stop offset="0.644" stop-color="#ff2810"/><stop offset="0.943" stop-color="#ff0404"/><stop offset="1" stop-color="#ff0002"/></linearGradient><linearGradient id="i18" gradientUnits="userSpaceOnUse" x1="1141" x2="1470"><stop offset="0" stop-color="#00ff5b"/><stop offset="0.033" stop-color="#1bff5c"/><stop offset="0.14" stop-color="#8cff5d"/><stop offset="0.228" stop-color="#fffc5e"/><stop offset="0.283" stop-color="#ffbc47"/><stop offset="0.359" stop-color="#ff8433"/><stop offset="0.471" stop-color="#ff5221"/><stop offset="0.647" stop-color="#ff2712"/><stop offset="0.948" stop-color="#ff0305"/><stop offset="1" stop-color="#ff0004"/></linearGradient><linearGradient id="i19" gradientUnits="userSpaceOnUse" x1="1141" x2="1468"><stop offset="0" stop-color="#00ff61"/><stop offset="0.018" stop-color="#0cff61"/><stop offset="0.128" stop-color="#7eff64"/><stop offset="0.22" stop-color="#f6ff66"/><stop offset="0.229" stop-color="#fffb65"/><stop offset="0.281" stop-color="#ffbe4e"/><stop offset="0.358" stop-color="#ff8438"/><stop offset="0.471" stop-color="#ff5225"/><stop offset="0.648" stop-color="#ff2715"/><stop offset="0.951" stop-color="#ff0307"/><stop offset="1" stop-color="#ff0006"/></linearGradient><linearGradient id="i20" gradientUnits="userSpaceOnUse" x1="1141" x2="1466"><stop offset="0" stop-color="#00ff66"/><stop offset="0.015" stop-color="#08ff67"/><stop offset="0.126" stop-color="#7aff6a"/><stop offset="0.218" stop-color="#f2ff6e"/><stop offset="0.231" stop-color="#fffa6c"/><stop offset="0.283" stop-color="#ffbd53"/><stop offset="0.36" stop-color="#ff843c"/><stop offset="0.474" stop-color="#ff5228"/><stop offset="0.652" stop-color="#ff2717"/><stop offset="0.957" stop-color="#ff0309"/><stop offset="1" stop-color="#ff0007"/></linearGradient><linearGradient id="i21" gradientUnits="userSpaceOnUse" x1="1142" x2="1464"><stop offset="0" stop-color="#00ff6c"/><stop offset="0.034" stop-color="#1bff6d"/><stop offset="0.14" stop-color="#8cff71"/><stop offset="0.227" stop-color="#fffe75"/><stop offset="0.28" stop-color="#ffbf5a"/><stop offset="0.354" stop-color="#ff8642"/><stop offset="0.466" stop-color="#ff542d"/><stop offset="0.64" stop-color="#ff291a"/><stop offset="0.935" stop-color="#ff050b"/><stop offset="1" stop-color="#ff0009"/></linearGradient><linearGradient id="i22" gradientUnits="userSpaceOnUse" x1="1142" x2="1462"><stop offset="0" stop-color="#00ff72"/><stop offset="0.019" stop-color="#0cff73"/><stop offset="0.128" stop-color="#7dff78"/><stop offset="0.219" stop-color="#f4ff7d"/><stop offset="0.231" stop-color="#fff87a"/><stop offset="0.284" stop-color="#ffbb5f"/><stop offset="0.359" stop-color="#ff8446"/><stop offset="0.472" stop-color="#ff5230"/><stop offset="0.65" stop-color="#ff271c"/><stop offset="0.953" stop-color="#ff030c"/><stop offset="1" stop-color="#ff000b"/></linearGradient><linearGradient id="i23" gradientUnits="userSpaceOnUse" x1="1142" x2="1460"><stop offset="0" stop-color="#00ff78"/><stop offset="0.016" stop-color="#08ff79"/><stop offset="0.126" stop-color="#79ff7e"/><stop offset="0.217" stop-color="#f0ff84"/><stop offset="0.23" stop-color="#fffc83"/><stop offset="0.283" stop-color="#ffbd66"/><stop offset="0.358" stop-color="#ff854b"/><stop offset="0.472" stop-color="#ff5233"/><stop offset="0.648" stop-color="#ff281f"/><stop offset="0.95" stop-color="#ff030e"/><stop offset="1" stop-color="#ff000c"/></linearGradient><linearGradient id="i24" gradientUnits="userSpaceOnUse" x1="1143" x2="1458"><stop offset="0" stop-color="#00ff7e"/><stop offset="0.032" stop-color="#19ff80"/><stop offset="0.14" stop-color="#8cff86"/><stop offset="0.225" stop-color="#feff8d"/><stop offset="0.279" stop-color="#ffbf6d"/><stop offset="0.352" stop-color="#ff8751"/><stop offset="0.46" stop-color="#ff5639"/><stop offset="0.632" stop-color="#ff2a23"/><stop offset="0.921" stop-color="#ff0611"/><stop offset="1" stop-color="#ff000e"/></linearGradient><linearGradient id="i25" gradientUnits="userSpaceOnUse" x1="1143" x2="1456"><stop offset="0" stop-color="#00ff84"/><stop offset="0.019" stop-color="#0cff85"/><stop offset="0.128" stop-color="#7dff8d"/><stop offset="0.22" stop-color="#f6ff94"/><stop offset="0.23" stop-color="#fffa92"/><stop offset="0.284" stop-color="#ffbb71"/><stop offset="0.361" stop-color="#ff8354"/><stop offset="0.476" stop-color="#ff513a"/><stop offset="0.655" stop-color="#ff2624"/><stop offset="0.962" stop-color="#ff0211"/><stop offset="1" stop-color="#ff0010"/></linearGradient><linearGradient id="i26" gradientUnits="userSpaceOnUse" x1="1143" x2="1454"><stop offset="0" stop-color="#00ff8b"/><stop offset="0.016" stop-color="#08ff8c"/><stop offset="0.125" stop-color="#79ff93"/><stop offset="0.219" stop-color="#f2ff9c"/><stop offset="0.232" stop-color="#fff99a"/><stop offset="0.286" stop-color="#ffba77"/><stop offset="0.363" stop-color="#ff8259"/><stop offset="0.479" stop-color="#ff503d"/><stop offset="0.659" stop-color="#ff2626"/><stop offset="0.968" stop-color="#ff0213"/><stop offset="1" stop-color="#ff0012"/></linearGradient><linearGradient id="i27" gradientUnits="userSpaceOnUse" x1="1144" x2="1452"><stop offset="0" stop-color="#00ff91"/><stop offset="0.032" stop-color="#1aff93"/><stop offset="0.14" stop-color="#8cff9c"/><stop offset="0.227" stop-color="#fffda4"/><stop offset="0.279" stop-color="#ffbf81"/><stop offset="0.354" stop-color="#ff8760"/><stop offset="0.464" stop-color="#ff5544"/><stop offset="0.636" stop-color="#ff292b"/><stop offset="0.929" stop-color="#ff0517"/><stop offset="1" stop-color="#ff0013"/></linearGradient><linearGradient id="i28" gradientUnits="userSpaceOnUse" x1="1144" x2="1450"><stop offset="0" stop-color="#00ff97"/><stop offset="0.02" stop-color="#0dff99"/><stop offset="0.131" stop-color="#80ffa3"/><stop offset="0.222" stop-color="#f8ffad"/><stop offset="0.235" stop-color="#fff3a6"/><stop offset="0.291" stop-color="#ffb581"/><stop offset="0.369" stop-color="#ff7e61"/><stop offset="0.487" stop-color="#ff4d44"/><stop offset="0.673" stop-color="#ff232b"/><stop offset="0.993" stop-color="#ff0016"/><stop offset="1" stop-color="#ff0015"/></linearGradient><linearGradient id="i29" gradientUnits="userSpaceOnUse" x1="1144" x2="1448"><stop offset="0" stop-color="#00ff9e"/><stop offset="0.016" stop-color="#09ff9f"/><stop offset="0.125" stop-color="#78ffa9"/><stop offset="0.217" stop-color="#f0ffb4"/><stop offset="0.23" stop-color="#fffbb3"/><stop offset="0.283" stop-color="#ffbd8d"/><stop offset="0.359" stop-color="#ff856a"/><stop offset="0.47" stop-color="#ff534b"/><stop offset="0.645" stop-color="#ff2830"/><stop offset="0.944" stop-color="#ff041a"/><stop offset="1" stop-color="#ff0017"/></linearGradient><linearGradient id="i30" gradientUnits="userSpaceOnUse" x1="1145" x2="1446"><stop offset="0" stop-color="#00ffa5"/><stop offset="0.033" stop-color="#1affa8"/><stop offset="0.14" stop-color="#8cffb3"/><stop offset="0.226" stop-color="#ffffbe"/><stop offset="0.279" stop-color="#ffbf95"/><stop offset="0.352" stop-color="#ff8871"/><stop offset="0.462" stop-color="#ff5551"/><stop offset="0.635" stop-color="#ff2a34"/><stop offset="0.927" stop-color="#ff051d"/><stop offset="1" stop-color="#ff0019"/></linearGradient><linearGradient id="i31" gradientUnits="userSpaceOnUse" x1="1145" x2="1444"><stop offset="0" stop-color="#00ffab"/><stop offset="0.02" stop-color="#0dffad"/><stop offset="0.13" stop-color="#80ffb9"/><stop offset="0.221" stop-color="#f6ffc6"/><stop offset="0.231" stop-color="#fff9c3"/><stop offset="0.284" stop-color="#ffbb99"/><stop offset="0.361" stop-color="#ff8373"/><stop offset="0.475" stop-color="#ff5152"/><stop offset="0.656" stop-color="#ff2635"/><stop offset="0.963" stop-color="#ff021d"/><stop offset="1" stop-color="#ff001b"/></linearGradient><linearGradient id="i32" gradientUnits="userSpaceOnUse" x1="1145" x2="1442"><stop offset="0" stop-color="#00ffb2"/><stop offset="0.013" stop-color="#06ffb3"/><stop offset="0.125" stop-color="#78ffc0"/><stop offset="0.215" stop-color="#edffce"/><stop offset="0.229" stop-color="#fffdcf"/><stop offset="0.283" stop-color="#ffbda2"/><stop offset="0.357" stop-color="#ff867b"/><stop offset="0.468" stop-color="#ff5458"/><stop offset="0.643" stop-color="#ff283a"/><stop offset="0.939" stop-color="#ff0420"/><stop offset="1" stop-color="#ff001d"/></linearGradient><linearGradient id="i33" gradientUnits="userSpaceOnUse" x1="1146" x2="1440"><stop offset="0" stop-color="#00ffb9"/><stop offset="0.034" stop-color="#1bffbd"/><stop offset="0.139" stop-color="#8cffcb"/><stop offset="0.228" stop-color="#fffcd7"/><stop offset="0.282" stop-color="#ffbca8"/><stop offset="0.357" stop-color="#ff8580"/><stop offset="0.469" stop-color="#ff535c"/><stop offset="0.646" stop-color="#ff283c"/><stop offset="0.949" stop-color="#ff0322"/><stop offset="1" stop-color="#ff001f"/></linearGradient><linearGradient id="i34" gradientUnits="userSpaceOnUse" x1="1146" x2="1438"><stop offset="0" stop-color="#00ffc0"/><stop offset="0.017" stop-color="#0affc2"/><stop offset="0.127" stop-color="#7bffd1"/><stop offset="0.219" stop-color="#f4ffe1"/><stop offset="0.229" stop-color="#fffbdf"/><stop offset="0.284" stop-color="#ffbbaf"/><stop offset="0.36" stop-color="#ff8485"/><stop offset="0.473" stop-color="#ff525f"/><stop offset="0.651" stop-color="#ff273f"/><stop offset="0.955" stop-color="#ff0324"/><stop offset="1" stop-color="#ff0021"/></linearGradient><linearGradient id="i35" gradientUnits="userSpaceOnUse" x1="1146" x2="1436"><stop offset="0" stop-color="#00ffc7"/><stop offset="0.014" stop-color="#06ffc9"/><stop offset="0.124" stop-color="#77ffd9"/><stop offset="0.217" stop-color="#f0ffe9"/><stop offset="0.228" stop-color="#ffffeb"/><stop offset="0.279" stop-color="#ffc1bb"/><stop offset="0.352" stop-color="#ff898f"/><stop offset="0.459" stop-color="#ff5768"/><stop offset="0.628" stop-color="#ff2b45"/><stop offset="0.914" stop-color="#ff0629"/><stop offset="1" stop-color="#ff0023"/></linearGradient><linearGradient id="i36" gradientUnits="userSpaceOnUse" x1="1147" x2="1434"><stop offset="0" stop-color="#00ffcf"/><stop offset="0.035" stop-color="#1cffd3"/><stop offset="0.143" stop-color="#90ffe4"/><stop offset="0.226" stop-color="#fffef4"/><stop offset="0.279" stop-color="#ffc0c1"/><stop offset="0.352" stop-color="#ff8894"/><stop offset="0.46" stop-color="#ff566c"/><stop offset="0.631" stop-color="#ff2b48"/><stop offset="0.92" stop-color="#ff062a"/><stop offset="1" stop-color="#ff0025"/></linearGradient><linearGradient id="i37" gradientUnits="userSpaceOnUse" x1="1147" x2="1433"><stop offset="0" stop-color="#00ffd6"/><stop offset="0.017" stop-color="#0bffd8"/><stop offset="0.126" stop-color="#7bffea"/><stop offset="0.217" stop-color="#f1fffc"/><stop offset="0.231" stop-color="#fff8f9"/><stop offset="0.283" stop-color="#ffbbc6"/><stop offset="0.36" stop-color="#ff8396"/><stop offset="0.472" stop-color="#ff526d"/><stop offset="0.65" stop-color="#ff2748"/><stop offset="0.955" stop-color="#ff032a"/><stop offset="1" stop-color="#ff0027"/></linearGradient><linearGradient id="i38" gradientUnits="userSpaceOnUse" x1="1147" x2="1431"><stop offset="0" stop-color="#00ffdd"/><stop offset="0.014" stop-color="#06ffdf"/><stop offset="0.123" stop-color="#77fff2"/><stop offset="0.208" stop-color="#dffbff"/><stop offset="0.236" stop-color="#fff2fd"/><stop offset="0.292" stop-color="#ffb4c7"/><stop offset="0.373" stop-color="#ff7c96"/><stop offset="0.493" stop-color="#ff4b6c"/><stop offset="0.683" stop-color="#ff2147"/><stop offset="0.996" stop-color="#ff0029"/><stop offset="1" stop-color="#ff0029"/></linearGradient><linearGradient id="i39" gradientUnits="userSpaceOnUse" x1="1148" x2="1429"><stop offset="0" stop-color="#00ffe5"/><stop offset="0.032" stop-color="#19ffea"/><stop offset="0.139" stop-color="#8bfffe"/><stop offset="0.242" stop-color="#ffe8fd"/><stop offset="0.299" stop-color="#ffadc8"/><stop offset="0.381" stop-color="#ff7798"/><stop offset="0.505" stop-color="#ff476c"/><stop offset="0.705" stop-color="#ff1e47"/><stop offset="1" stop-color="#ff002b"/></linearGradient><linearGradient id="i40" gradientUnits="userSpaceOnUse" x1="1148" x2="1427"><stop offset="0" stop-color="#00ffed"/><stop offset="0.018" stop-color="#0bfff0"/><stop offset="0.122" stop-color="#74fbff"/><stop offset="0.251" stop-color="#ffdefd"/><stop offset="0.312" stop-color="#ffa3c6"/><stop offset="0.401" stop-color="#ff6d94"/><stop offset="0.538" stop-color="#ff3f69"/><stop offset="0.76" stop-color="#ff1643"/><stop offset="1" stop-color="#ff002e"/></linearGradient><linearGradient id="i41" gradientUnits="userSpaceOnUse" x1="1148" x2="1425"><stop offset="0" stop-color="#00fff5"/><stop offset="0.014" stop-color="#07fff7"/><stop offset="0.087" stop-color="#4cfaff"/><stop offset="0.26" stop-color="#ffd4fd"/><stop offset="0.325" stop-color="#ff9ac5"/><stop offset="0.419" stop-color="#ff6693"/><stop offset="0.563" stop-color="#ff3867"/><stop offset="0.801" stop-color="#ff1142"/><stop offset="1" stop-color="#ff0030"/></linearGradient><linearGradient id="i42" gradientUnits="userSpaceOnUse" x1="1149" x2="1423"><stop offset="0" stop-color="#00fffd"/><stop offset="0.036" stop-color="#1dfaff"/><stop offset="0.245" stop-color="#e9d1ff"/><stop offset="0.266" stop-color="#ffcbfd"/><stop offset="0.336" stop-color="#ff91c4"/><stop offset="0.438" stop-color="#ff5e90"/><stop offset="0.595" stop-color="#ff3164"/><stop offset="0.858" stop-color="#ff0b3e"/><stop offset="1" stop-color="#ff0032"/></linearGradient><linearGradient id="i43" gradientUnits="userSpaceOnUse" x1="1149" x2="1421"><stop offset="0" stop-color="#00f9ff"/><stop offset="0.022" stop-color="#0ef5ff"/><stop offset="0.239" stop-color="#dbccff"/><stop offset="0.276" stop-color="#ffc3fe"/><stop offset="0.346" stop-color="#ff8cc5"/><stop offset="0.449" stop-color="#ff5a92"/><stop offset="0.61" stop-color="#ff2e65"/><stop offset="0.879" stop-color="#ff093f"/><stop offset="1" stop-color="#ff0035"/></linearGradient><linearGradient id="i44" gradientUnits="userSpaceOnUse" x1="1149" x2="1419"><stop offset="0" stop-color="#00f2ff"/><stop offset="0.015" stop-color="#07efff"/><stop offset="0.241" stop-color="#d4c5ff"/><stop offset="0.285" stop-color="#ffbbfe"/><stop offset="0.359" stop-color="#ff84c4"/><stop offset="0.467" stop-color="#ff5491"/><stop offset="0.633" stop-color="#ff2a64"/><stop offset="0.911" stop-color="#ff063f"/><stop offset="1" stop-color="#ff0037"/></linearGradient><linearGradient id="i45" gradientUnits="userSpaceOnUse" x1="1150" x2="1417"><stop offset="0" stop-color="#00eaff"/><stop offset="0.064" stop-color="#31dfff"/><stop offset="0.292" stop-color="#ffb3fe"/><stop offset="0.367" stop-color="#ff7fc5"/><stop offset="0.479" stop-color="#ff4f91"/><stop offset="0.652" stop-color="#ff2764"/><stop offset="0.94" stop-color="#ff043f"/><stop offset="1" stop-color="#ff0039"/></linearGradient><linearGradient id="i46" gradientUnits="userSpaceOnUse" x1="1150" x2="1415"><stop offset="0" stop-color="#00e3ff"/><stop offset="0.026" stop-color="#10dfff"/><stop offset="0.264" stop-color="#ddb3ff"/><stop offset="0.302" stop-color="#ffabfe"/><stop offset="0.381" stop-color="#ff77c3"/><stop offset="0.494" stop-color="#ff4b91"/><stop offset="0.672" stop-color="#ff2364"/><stop offset="0.966" stop-color="#ff023f"/><stop offset="1" stop-color="#ff003c"/></linearGradient><linearGradient id="i47" gradientUnits="userSpaceOnUse" x1="1150" x2="1413"><stop offset="0" stop-color="#00ddff"/><stop offset="0.019" stop-color="#09d9ff"/><stop offset="0.266" stop-color="#d7aeff"/><stop offset="0.312" stop-color="#ffa4fe"/><stop offset="0.392" stop-color="#ff73c5"/><stop offset="0.51" stop-color="#ff4691"/><stop offset="0.692" stop-color="#ff2065"/><stop offset="0.996" stop-color="#ff003f"/><stop offset="1" stop-color="#ff003e"/></linearGradient><linearGradient id="i48" gradientUnits="userSpaceOnUse" x1="1151" x2="1411"><stop offset="0" stop-color="#00d6ff"/><stop offset="0.131" stop-color="#62c0ff"/><stop offset="0.319" stop-color="#ff9dfe"/><stop offset="0.404" stop-color="#ff6cc3"/><stop offset="0.527" stop-color="#ff4190"/><stop offset="0.715" stop-color="#ff1c64"/><stop offset="1" stop-color="#ff0041"/></linearGradient><linearGradient id="i49" gradientUnits="userSpaceOnUse" x1="1151" x2="1409"><stop offset="0" stop-color="#00d0ff"/><stop offset="0.035" stop-color="#15caff"/><stop offset="0.295" stop-color="#e29dff"/><stop offset="0.333" stop-color="#ff94fb"/><stop offset="0.419" stop-color="#ff66c2"/><stop offset="0.547" stop-color="#ff3c8f"/><stop offset="0.744" stop-color="#ff1963"/><stop offset="1" stop-color="#ff0044"/></linearGradient><linearGradient id="i50" gradientUnits="userSpaceOnUse" x1="1151" x2="1407"><stop offset="0" stop-color="#00caff"/><stop offset="0.023" stop-color="#0bc6ff"/><stop offset="0.293" stop-color="#d999ff"/><stop offset="0.34" stop-color="#ff90fe"/><stop offset="0.426" stop-color="#ff63c5"/><stop offset="0.555" stop-color="#ff3b92"/><stop offset="0.754" stop-color="#ff1765"/><stop offset="1" stop-color="#ff0046"/></linearGradient><linearGradient id="i51" gradientUnits="userSpaceOnUse" x1="1152" x2="1405"><stop offset="0" stop-color="#00c4ff"/><stop offset="0.182" stop-color="#7fa7ff"/><stop offset="0.348" stop-color="#ff8afe"/><stop offset="0.439" stop-color="#ff5ec4"/><stop offset="0.573" stop-color="#ff3691"/><stop offset="0.779" stop-color="#ff1464"/><stop offset="1" stop-color="#ff0049"/></linearGradient><linearGradient id="i52" gradientUnits="userSpaceOnUse" x1="1152" x2="1403"><stop offset="0" stop-color="#00bfff"/><stop offset="0.052" stop-color="#1fb7ff"/><stop offset="0.335" stop-color="#ed89ff"/><stop offset="0.363" stop-color="#ff82fb"/><stop offset="0.458" stop-color="#ff57c1"/><stop offset="0.598" stop-color="#ff318e"/><stop offset="0.817" stop-color="#ff1062"/><stop offset="1" stop-color="#ff004c"/></linearGradient><linearGradient id="i53" gradientUnits="userSpaceOnUse" x1="1152" x2="1401"><stop offset="0" stop-color="#00b9ff"/><stop offset="0.028" stop-color="#0eb5ff"/><stop offset="0.321" stop-color="#db87ff"/><stop offset="0.373" stop-color="#ff7cfb"/><stop offset="0.47" stop-color="#ff53c2"/><stop offset="0.614" stop-color="#ff2e8f"/><stop offset="0.835" stop-color="#ff0e63"/><stop offset="1" stop-color="#ff004f"/></linearGradient><linearGradient id="i54" gradientUnits="userSpaceOnUse" x1="1152" x2="1399"><stop offset="0" stop-color="#00b5ff"/><stop offset="0.024" stop-color="#0ab1ff"/><stop offset="0.324" stop-color="#d683ff"/><stop offset="0.385" stop-color="#ff77fb"/><stop offset="0.486" stop-color="#ff4ec1"/><stop offset="0.632" stop-color="#ff2a8f"/><stop offset="0.858" stop-color="#ff0b63"/><stop offset="1" stop-color="#ff0051"/></linearGradient><linearGradient id="i55" gradientUnits="userSpaceOnUse" x1="1153" x2="1397"><stop offset="0" stop-color="#00afff"/><stop offset="0.09" stop-color="#35a2ff"/><stop offset="0.389" stop-color="#ff74fe"/><stop offset="0.492" stop-color="#ff4cc4"/><stop offset="0.639" stop-color="#ff2991"/><stop offset="0.869" stop-color="#ff0a65"/><stop offset="1" stop-color="#ff0054"/></linearGradient><linearGradient id="i56" gradientUnits="userSpaceOnUse" x1="1153" x2="1395"><stop offset="0" stop-color="#00abff"/><stop offset="0.033" stop-color="#0fa6ff"/><stop offset="0.351" stop-color="#dd77ff"/><stop offset="0.405" stop-color="#ff6dfb"/><stop offset="0.512" stop-color="#ff46c1"/><stop offset="0.669" stop-color="#ff248e"/><stop offset="0.913" stop-color="#ff0662"/><stop offset="1" stop-color="#ff0057"/></linearGradient><linearGradient id="i57" gradientUnits="userSpaceOnUse" x1="1153" x2="1393"><stop offset="0" stop-color="#00a6ff"/><stop offset="0.029" stop-color="#0ca2ff"/><stop offset="0.354" stop-color="#d873ff"/><stop offset="0.417" stop-color="#ff68fc"/><stop offset="0.525" stop-color="#ff42c2"/><stop offset="0.683" stop-color="#ff228f"/><stop offset="0.929" stop-color="#ff0563"/><stop offset="1" stop-color="#ff005a"/></linearGradient><linearGradient id="i58" gradientUnits="userSpaceOnUse" x1="1154" x2="1391"><stop offset="0" stop-color="#00a2ff"/><stop offset="0.186" stop-color="#6988ff"/><stop offset="0.426" stop-color="#ff63fc"/><stop offset="0.54" stop-color="#ff3ec1"/><stop offset="0.705" stop-color="#ff1e8e"/><stop offset="0.962" stop-color="#ff0262"/><stop offset="1" stop-color="#ff005e"/></linearGradient><linearGradient id="i59" gradientUnits="userSpaceOnUse" x1="1154" x2="1389"><stop offset="0" stop-color="#009dff"/><stop offset="0.047" stop-color="#1697ff"/><stop offset="0.391" stop-color="#e467ff"/><stop offset="0.438" stop-color="#ff5efc"/><stop offset="0.553" stop-color="#ff3bc2"/><stop offset="0.723" stop-color="#ff1c8f"/><stop offset="0.987" stop-color="#ff0062"/><stop offset="1" stop-color="#ff0061"/></linearGradient><linearGradient id="i60" gradientUnits="userSpaceOnUse" x1="1154" x2="1387"><stop offset="0" stop-color="#0099ff"/><stop offset="0.034" stop-color="#0e95ff"/><stop offset="0.386" stop-color="#da65ff"/><stop offset="0.451" stop-color="#ff5afc"/><stop offset="0.567" stop-color="#ff38c3"/><stop offset="0.738" stop-color="#ff1a90"/><stop offset="1" stop-color="#ff0064"/></linearGradient><linearGradient id="i61" gradientUnits="userSpaceOnUse" x1="1155" x2="1385"><stop offset="0" stop-color="#0095ff"/><stop offset="0.239" stop-color="#7f76ff"/><stop offset="0.461" stop-color="#ff56fc"/><stop offset="0.583" stop-color="#ff34c2"/><stop offset="0.761" stop-color="#ff168f"/><stop offset="1" stop-color="#ff0067"/></linearGradient><linearGradient id="i62" gradientUnits="userSpaceOnUse" x1="1155" x2="1384"><stop offset="0" stop-color="#0091ff"/><stop offset="0.07" stop-color="#2089ff"/><stop offset="0.437" stop-color="#ed58ff"/><stop offset="0.472" stop-color="#ff52fc"/><stop offset="0.594" stop-color="#ff31c3"/><stop offset="0.773" stop-color="#ff1590"/><stop offset="1" stop-color="#ff006a"/></linearGradient><linearGradient id="i63" gradientUnits="userSpaceOnUse" x1="1155" x2="1382"><stop offset="0" stop-color="#008eff"/><stop offset="0.044" stop-color="#1189ff"/><stop offset="0.423" stop-color="#de57ff"/><stop offset="0.485" stop-color="#ff4efc"/><stop offset="0.612" stop-color="#ff2ec2"/><stop offset="0.797" stop-color="#ff128f"/><stop offset="1" stop-color="#ff006d"/></linearGradient><linearGradient id="i64" gradientUnits="userSpaceOnUse" x1="1156" x2="1380"><stop offset="0" stop-color="#008aff"/><stop offset="0.272" stop-color="#8769ff"/><stop offset="0.496" stop-color="#ff4afc"/><stop offset="0.625" stop-color="#ff2bc3"/><stop offset="0.817" stop-color="#ff0f8f"/><stop offset="1" stop-color="#ff0071"/></linearGradient><linearGradient id="i65" gradientUnits="userSpaceOnUse" x1="1156" x2="1378"><stop offset="0" stop-color="#0087ff"/><stop offset="0.122" stop-color="#3778ff"/><stop offset="0.509" stop-color="#ff46fc"/><stop offset="0.644" stop-color="#ff28c2"/><stop offset="0.842" stop-color="#ff0d8f"/><stop offset="1" stop-color="#ff0074"/></linearGradient><linearGradient id="i66" gradientUnits="userSpaceOnUse" x1="1156" x2="1376"><stop offset="0" stop-color="#0083ff"/><stop offset="0.05" stop-color="#137eff"/><stop offset="0.459" stop-color="#df4cff"/><stop offset="0.523" stop-color="#ff43fc"/><stop offset="0.659" stop-color="#ff25c3"/><stop offset="0.859" stop-color="#ff0b90"/><stop offset="1" stop-color="#ff0078"/></linearGradient><linearGradient id="i67" gradientUnits="userSpaceOnUse" x1="1157" x2="1374"><stop offset="0" stop-color="#0080ff"/><stop offset="0.309" stop-color="#8e5cff"/><stop offset="0.535" stop-color="#ff3ffc"/><stop offset="0.677" stop-color="#ff22c2"/><stop offset="0.885" stop-color="#ff098f"/><stop offset="1" stop-color="#ff007c"/></linearGradient><linearGradient id="i68" gradientUnits="userSpaceOnUse" x1="1157" x2="1372"><stop offset="0" stop-color="#007dff"/><stop offset="0.247" stop-color="#6c61ff"/><stop offset="0.549" stop-color="#ff3cfc"/><stop offset="0.693" stop-color="#ff20c3"/><stop offset="0.907" stop-color="#ff078f"/><stop offset="1" stop-color="#ff007f"/></linearGradient><linearGradient id="i69" gradientUnits="userSpaceOnUse" x1="1157" x2="1370"><stop offset="0" stop-color="#007aff"/><stop offset="0.066" stop-color="#1873ff"/><stop offset="0.507" stop-color="#e540ff"/><stop offset="0.563" stop-color="#ff38fc"/><stop offset="0.709" stop-color="#ff1dc3"/><stop offset="0.925" stop-color="#ff0590"/><stop offset="1" stop-color="#ff0083"/></linearGradient><linearGradient id="i70" gradientUnits="userSpaceOnUse" x1="1158" x2="1368"><stop offset="0" stop-color="#0076ff"/><stop offset="0.348" stop-color="#9551ff"/><stop offset="0.576" stop-color="#ff35fc"/><stop offset="0.729" stop-color="#ff1ac3"/><stop offset="0.952" stop-color="#ff038f"/><stop offset="1" stop-color="#ff0087"/></linearGradient><linearGradient id="i71" gradientUnits="userSpaceOnUse" x1="1158" x2="1366"><stop offset="0" stop-color="#0074ff"/><stop offset="0.303" stop-color="#7d54ff"/><stop offset="0.591" stop-color="#ff32fd"/><stop offset="0.745" stop-color="#ff18c3"/><stop offset="0.971" stop-color="#ff0190"/><stop offset="1" stop-color="#ff008b"/></linearGradient><linearGradient id="i72" gradientUnits="userSpaceOnUse" x1="1158" x2="1364"><stop offset="0" stop-color="#0071ff"/><stop offset="0.092" stop-color="#2168ff"/><stop offset="0.568" stop-color="#ef34ff"/><stop offset="0.612" stop-color="#ff2efa"/><stop offset="0.772" stop-color="#ff15c1"/><stop offset="1" stop-color="#ff008f"/></linearGradient><linearGradient id="i73" gradientUnits="userSpaceOnUse" x1="1159" x2="1362"><stop offset="0" stop-color="#006eff"/><stop offset="0.384" stop-color="#9947ff"/><stop offset="0.621" stop-color="#ff2cfd"/><stop offset="0.783" stop-color="#ff13c3"/><stop offset="1" stop-color="#ff0094"/></linearGradient><linearGradient id="i74" gradientUnits="userSpaceOnUse" x1="1159" x2="1360"><stop offset="0" stop-color="#006bff"/><stop offset="0.348" stop-color="#8649ff"/><stop offset="0.637" stop-color="#ff29fd"/><stop offset="0.806" stop-color="#ff11c2"/><stop offset="1" stop-color="#ff0098"/></linearGradient><linearGradient id="i75" gradientUnits="userSpaceOnUse" x1="1159" x2="1358"><stop offset="0" stop-color="#0069ff"/><stop offset="0.166" stop-color="#3a59ff"/><stop offset="0.653" stop-color="#ff26fd"/><stop offset="0.824" stop-color="#ff0fc3"/><stop offset="1" stop-color="#ff009c"/></linearGradient><linearGradient id="i76" gradientUnits="userSpaceOnUse" x1="1160" x2="1356"><stop offset="0" stop-color="#0066ff"/><stop offset="0.429" stop-color="#9f3dff"/><stop offset="0.668" stop-color="#ff24fd"/><stop offset="0.847" stop-color="#ff0cc2"/><stop offset="1" stop-color="#ff00a1"/></linearGradient><linearGradient id="i77" gradientUnits="userSpaceOnUse" x1="1160" x2="1354"><stop offset="0" stop-color="#0063ff"/><stop offset="0.392" stop-color="#8c3fff"/><stop offset="0.686" stop-color="#ff21fd"/><stop offset="0.866" stop-color="#ff0ac3"/><stop offset="1" stop-color="#ff00a6"/></linearGradient><linearGradient id="i78" gradientUnits="userSpaceOnUse" x1="1160" x2="1352"><stop offset="0" stop-color="#0061ff"/><stop offset="0.323" stop-color="#6f44ff"/><stop offset="0.703" stop-color="#ff1efd"/><stop offset="0.885" stop-color="#ff09c4"/><stop offset="1" stop-color="#ff00aa"/></linearGradient><linearGradient id="i79" gradientUnits="userSpaceOnUse" x1="1161" x2="1350"><stop offset="0" stop-color="#005eff"/><stop offset="0.471" stop-color="#a234ff"/><stop offset="0.72" stop-color="#ff1cfd"/><stop offset="0.91" stop-color="#ff06c3"/><stop offset="1" stop-color="#ff00af"/></linearGradient><linearGradient id="i80" gradientUnits="userSpaceOnUse" x1="1161" x2="1348"><stop offset="0" stop-color="#005cff"/><stop offset="0.439" stop-color="#9236ff"/><stop offset="0.738" stop-color="#ff19fd"/><stop offset="0.93" stop-color="#ff05c4"/><stop offset="1" stop-color="#ff00b4"/></linearGradient><linearGradient id="i81" gradientUnits="userSpaceOnUse" x1="1161" x2="1346"><stop offset="0" stop-color="#005aff"/><stop offset="0.389" stop-color="#7d39ff"/><stop offset="0.757" stop-color="#ff17fd"/><stop offset="0.957" stop-color="#ff02c3"/><stop offset="1" stop-color="#ff00b9"/></linearGradient><linearGradient id="i82" gradientUnits="userSpaceOnUse" x1="1162" x2="1344"><stop offset="0" stop-color="#0058ff"/><stop offset="0.516" stop-color="#a62cff"/><stop offset="0.775" stop-color="#ff14fd"/><stop offset="0.978" stop-color="#ff01c3"/><stop offset="1" stop-color="#ff00bf"/></linearGradient><linearGradient id="i83" gradientUnits="userSpaceOnUse" x1="1162" x2="1342"><stop offset="0" stop-color="#0056ff"/><stop offset="0.489" stop-color="#982eff"/><stop offset="0.794" stop-color="#ff12fd"/><stop offset="1" stop-color="#ff00c4"/></linearGradient><linearGradient id="i84" gradientUnits="userSpaceOnUse" x1="1162" x2="1340"><stop offset="0" stop-color="#0054ff"/><stop offset="0.444" stop-color="#8530ff"/><stop offset="0.815" stop-color="#ff10fd"/><stop offset="1" stop-color="#ff00ca"/></linearGradient><linearGradient id="i85" gradientUnits="userSpaceOnUse" x1="1163" x2="1338"><stop offset="0" stop-color="#0051ff"/><stop offset="0.566" stop-color="#a925ff"/><stop offset="0.84" stop-color="#ff0dfb"/><stop offset="1" stop-color="#ff00cf"/></linearGradient><linearGradient id="i86" gradientUnits="userSpaceOnUse" x1="1163" x2="1336"><stop offset="0" stop-color="#004fff"/><stop offset="0.538" stop-color="#9b26ff"/><stop offset="0.861" stop-color="#ff0bfb"/><stop offset="1" stop-color="#ff00d5"/></linearGradient><linearGradient id="i87" gradientUnits="userSpaceOnUse" x1="1163" x2="1334"><stop offset="0" stop-color="#004eff"/><stop offset="0.497" stop-color="#8b28ff"/><stop offset="0.883" stop-color="#ff09fb"/><stop offset="1" stop-color="#ff00db"/></linearGradient><linearGradient id="i88" gradientUnits="userSpaceOnUse" x1="1164" x2="1333"><stop offset="0" stop-color="#004bff"/><stop offset="0.609" stop-color="#aa1eff"/><stop offset="0.899" stop-color="#ff07fc"/><stop offset="1" stop-color="#ff00e0"/></linearGradient><linearGradient id="i89" gradientUnits="userSpaceOnUse" x1="1164" x2="1331"><stop offset="0" stop-color="#004aff"/><stop offset="0.587" stop-color="#9e1fff"/><stop offset="0.922" stop-color="#ff05fc"/><stop offset="1" stop-color="#ff00e6"/></linearGradient><linearGradient id="i90" gradientUnits="userSpaceOnUse" x1="1164" x2="1329"><stop offset="0" stop-color="#0048ff"/><stop offset="0.552" stop-color="#9021ff"/><stop offset="0.945" stop-color="#ff03fc"/><stop offset="1" stop-color="#ff00ed"/></linearGradient><linearGradient id="i91" gradientUnits="userSpaceOnUse" x1="1164" x2="1327"><stop offset="0" stop-color="#0046ff"/><stop offset="0.491" stop-color="#7c25ff"/><stop offset="0.969" stop-color="#ff01fc"/><stop offset="1" stop-color="#ff00f3"/></linearGradient><linearGradient id="i92" gradientUnits="userSpaceOnUse" x1="1165" x2="1325"><stop offset="0" stop-color="#0044ff"/><stop offset="0.644" stop-color="#a119ff"/><stop offset="0.994" stop-color="#ff00fc"/><stop offset="1" stop-color="#ff00fa"/></linearGradient><linearGradient id="i93" gradientUnits="userSpaceOnUse" x1="1165" x2="1323"><stop offset="0" stop-color="#0043ff"/><stop offset="0.614" stop-color="#951aff"/><stop offset="1" stop-color="#fd00ff"/></linearGradient><linearGradient id="i94" gradientUnits="userSpaceOnUse" x1="1165" x2="1321"><stop offset="0" stop-color="#0041ff"/><stop offset="0.564" stop-color="#841dff"/><stop offset="1" stop-color="#f600ff"/></linearGradient><linearGradient id="i95" gradientUnits="userSpaceOnUse" x1="1166" x2="1319"><stop offset="0" stop-color="#003fff"/><stop offset="0.706" stop-color="#a413ff"/><stop offset="1" stop-color="#ef00ff"/></linearGradient><linearGradient id="i96" gradientUnits="userSpaceOnUse" x1="1166" x2="1317"><stop offset="0" stop-color="#003eff"/><stop offset="0.675" stop-color="#9814ff"/><stop offset="1" stop-color="#e900ff"/></linearGradient><linearGradient id="i97" gradientUnits="userSpaceOnUse" x1="1166" x2="1315"><stop offset="0" stop-color="#003cff"/><stop offset="0.631" stop-color="#8a17ff"/><stop offset="1" stop-color="#e200ff"/></linearGradient><linearGradient id="i98" gradientUnits="userSpaceOnUse" x1="1167" x2="1313"><stop offset="0" stop-color="#003bff"/><stop offset="0.774" stop-color="#a70dff"/><stop offset="1" stop-color="#dc00ff"/></linearGradient><linearGradient id="i99" gradientUnits="userSpaceOnUse" x1="1167" x2="1311"><stop offset="0" stop-color="#0039ff"/><stop offset="0.75" stop-color="#9d0eff"/><stop offset="1" stop-color="#d600ff"/></linearGradient><linearGradient id="i100" gradientUnits="userSpaceOnUse" x1="1167" x2="1309"><stop offset="0" stop-color="#0038ff"/><stop offset="0.704" stop-color="#8e11ff"/><stop offset="1" stop-color="#d000ff"/></linearGradient><linearGradient id="i101" gradientUnits="userSpaceOnUse" x1="1168" x2="1307"><stop offset="0" stop-color="#0036ff"/><stop offset="0.849" stop-color="#a908ff"/><stop offset="1" stop-color="#ca00ff"/></linearGradient><linearGradient id="i102" gradientUnits="userSpaceOnUse" x1="1168" x2="1305"><stop offset="0" stop-color="#0035ff"/><stop offset="0.825" stop-color="#a009ff"/><stop offset="1" stop-color="#c400ff"/></linearGradient><linearGradient id="i103" gradientUnits="userSpaceOnUse" x1="1168" x2="1303"><stop offset="0" stop-color="#0034ff"/><stop offset="0.785" stop-color="#930bff"/><stop offset="1" stop-color="#bf00ff"/></linearGradient><linearGradient id="i104" gradientUnits="userSpaceOnUse" x1="1169" x2="1301"><stop offset="0" stop-color="#0032ff"/><stop offset="0.932" stop-color="#ac03ff"/><stop offset="1" stop-color="#b900ff"/></linearGradient><linearGradient id="i105" gradientUnits="userSpaceOnUse" x1="1169" x2="1299"><stop offset="0" stop-color="#0031ff"/><stop offset="0.908" stop-color="#a204ff"/><stop offset="1" stop-color="#b400ff"/></linearGradient><linearGradient id="i106" gradientUnits="userSpaceOnUse" x1="1169" x2="1297"><stop offset="0" stop-color="#002fff"/><stop offset="0.867" stop-color="#9606ff"/><stop offset="1" stop-color="#af00ff"/></linearGradient><linearGradient id="i107" gradientUnits="userSpaceOnUse" x1="1170" x2="1295"><stop offset="0" stop-color="#002eff"/><stop offset="1" stop-color="#aa00ff"/></linearGradient><linearGradient id="i108" gradientUnits="userSpaceOnUse" x1="1170" x2="1293"><stop offset="0" stop-color="#002dff"/><stop offset="1" stop-color="#a500ff"/></linearGradient><linearGradient id="i109" gradientUnits="userSpaceOnUse" x1="1170" x2="1291"><stop offset="0" stop-color="#002cff"/><stop offset="0.967" stop-color="#9a01ff"/><stop offset="1" stop-color="#a000ff"/></linearGradient><linearGradient id="i110" gradientUnits="userSpaceOnUse" x1="1171" x2="1289"><stop offset="0" stop-color="#002aff"/><stop offset="1" stop-color="#9b00ff"/></linearGradient><linearGradient id="i111" gradientUnits="userSpaceOnUse" x1="1171" x2="1287"><stop offset="0" stop-color="#0029ff"/><stop offset="1" stop-color="#9600ff"/></linearGradient><linearGradient id="i112" gradientUnits="userSpaceOnUse" x1="1171" x2="1285"><stop offset="0" stop-color="#0028ff"/><stop offset="1" stop-color="#9200ff"/></linearGradient><linearGradient id="i113" gradientUnits="userSpaceOnUse" x1="1172" x2="1284"><stop offset="0" stop-color="#0027ff"/><stop offset="1" stop-color="#8f00ff"/></linearGradient><linearGradient id="i114" gradientUnits="userSpaceOnUse" x1="1172" x2="1282"><stop offset="0" stop-color="#0026ff"/><stop offset="1" stop-color="#8a00ff"/></linearGradient><linearGradient id="i115" gradientUnits="userSpaceOnUse" x1="1172" x2="1280"><stop offset="0" stop-color="#0025ff"/><stop offset="1" stop-color="#8600ff"/></linearGradient><linearGradient id="i116" gradientUnits="userSpaceOnUse" x1="1173" x2="1278"><stop offset="0" stop-color="#0023ff"/><stop offset="1" stop-color="#8200ff"/></linearGradient><linearGradient id="i117" gradientUnits="userSpaceOnUse" x1="1173" x2="1276"><stop offset="0" stop-color="#0022ff"/><stop offset="1" stop-color="#7d00ff"/></linearGradient><linearGradient id="i118" gradientUnits="userSpaceOnUse" x1="1173" x2="1274"><stop offset="0" stop-color="#0021ff"/><stop offset="1" stop-color="#7900ff"/></linearGradient><linearGradient id="i119" gradientUnits="userSpaceOnUse" x1="1174" x2="1272"><stop offset="0" stop-color="#0020ff"/><stop offset="1" stop-color="#7500ff"/></linearGradient><linearGradient id="i120" gradientUnits="userSpaceOnUse" x1="1174" x2="1270"><stop offset="0" stop-color="#001fff"/><stop offset="1" stop-color="#7100ff"/></linearGradient><linearGradient id="i121" gradientUnits="userSpaceOnUse" x1="1174" x2="1268"><stop offset="0" stop-color="#001eff"/><stop offset="1" stop-color="#6e00ff"/></linearGradient><linearGradient id="i122" gradientUnits="userSpaceOnUse" x1="1175" x2="1266"><stop offset="0" stop-color="#001dff"/><stop offset="1" stop-color="#6a00ff"/></linearGradient><linearGradient id="i123" gradientUnits="userSpaceOnUse" x1="1175" x2="1264"><stop offset="0" stop-color="#001cff"/><stop offset="1" stop-color="#6600ff"/></linearGradient><linearGradient id="i124" gradientUnits="userSpaceOnUse" x1="1175" x2="1262"><stop offset="0" stop-color="#001bff"/><stop offset="1" stop-color="#6200ff"/></linearGradient><linearGradient id="i125" gradientUnits="userSpaceOnUse" x1="1175" x2="1260"><stop offset="0" stop-color="#001aff"/><stop offset="1" stop-color="#5f00ff"/></linearGradient><linearGradient id="i126" gradientUnits="userSpaceOnUse" x1="1176" x2="1258"><stop offset="0" stop-color="#0019ff"/><stop offset="1" stop-color="#5b00ff"/></linearGradient><linearGradient id="i127" gradientUnits="userSpaceOnUse" x1="1176" x2="1256"><stop offset="0" stop-color="#0018ff"/><stop offset="1" stop-color="#5800ff"/></linearGradient><linearGradient id="i128" gradientUnits="userSpaceOnUse" x1="1176" x2="1254"><stop offset="0" stop-color="#0018ff"/><stop offset="1" stop-color="#5500ff"/></linearGradient><linearGradient id="i129" gradientUnits="userSpaceOnUse" x1="1177" x2="1252"><stop offset="0" stop-color="#0017ff"/><stop offset="1" stop-color="#5100ff"/></linearGradient><linearGradient id="i130" gradientUnits="userSpaceOnUse" x1="1177" x2="1250"><stop offset="0" stop-color="#0016ff"/><stop offset="1" stop-color="#4e00ff"/></linearGradient><linearGradient id="i131" gradientUnits="userSpaceOnUse" x1="1177" x2="1248"><stop offset="0" stop-color="#0015ff"/><stop offset="1" stop-color="#4b00ff"/></linearGradient><linearGradient id="i132" gradientUnits="userSpaceOnUse" x1="1178" x2="1246"><stop offset="0" stop-color="#0014ff"/><stop offset="1" stop-color="#4800ff"/></linearGradient><linearGradient id="i133" gradientUnits="userSpaceOnUse" x1="1178" x2="1244"><stop offset="0" stop-color="#0013ff"/><stop offset="1" stop-color="#4500ff"/></linearGradient><linearGradient id="i134" gradientUnits="userSpaceOnUse" x1="1178" x2="1242"><stop offset="0" stop-color="#0012ff"/><stop offset="1" stop-color="#4200ff"/></linearGradient><linearGradient id="i135" gradientUnits="userSpaceOnUse" x1="1179" x2="1240"><stop offset="0" stop-color="#0011ff"/><stop offset="1" stop-color="#3f00ff"/></linearGradient><linearGradient id="i136" gradientUnits="userSpaceOnUse" x1="1179" x2="1238"><stop offset="0" stop-color="#0011ff"/><stop offset="1" stop-color="#3c00ff"/></linearGradient><linearGradient id="i137" gradientUnits="userSpaceOnUse" x1="1179" x2="1236"><stop offset="0" stop-color="#0010ff"/><stop offset="1" stop-color="#3900ff"/></linearGradient><linearGradient id="i138" gradientUnits="userSpaceOnUse" x1="1180" x2="1234"><stop offset="0" stop-color="#000fff"/><stop offset="1" stop-color="#3600ff"/></linearGradient><linearGradient id="i139" gradientUnits="userSpaceOnUse" x1="1180" x2="1233"><stop offset="0" stop-color="#000eff"/><stop offset="1" stop-color="#3400ff"/></linearGradient><linearGradient id="i140" gradientUnits="userSpaceOnUse" x1="1180" x2="1231"><stop offset="0" stop-color="#000eff"/><stop offset="1" stop-color="#3100ff"/></linearGradient><linearGradient id="i141" gradientUnits="userSpaceOnUse" x1="1181" x2="1229"><stop offset="0" stop-color="#000dff"/><stop offset="1" stop-color="#2f00ff"/></linearGradient><linearGradient id="i142" gradientUnits="userSpaceOnUse" x1="1181" x2="1227"><stop offset="0" stop-color="#000cff"/><stop offset="1" stop-color="#2c00ff"/></linearGradient><linearGradient id="i143" gradientUnits="userSpaceOnUse" x1="1181" x2="1225"><stop offset="0" stop-color="#000cff"/><stop offset="1" stop-color="#2900ff"/></linearGradient><linearGradient id="i144" gradientUnits="userSpaceOnUse" x1="1182" x2="1223"><stop offset="0" stop-color="#000bff"/><stop offset="1" stop-color="#2700ff"/></linearGradient><linearGradient id="i145" gradientUnits="userSpaceOnUse" x1="1182" x2="1221"><stop offset="0" stop-color="#000aff"/><stop offset="1" stop-color="#2400ff"/></linearGradient><linearGradient id="i146" gradientUnits="userSpaceOnUse" x1="1182" x2="1219"><stop offset="0" stop-color="#0009ff"/><stop offset="1" stop-color="#2200ff"/></linearGradient><linearGradient id="i147" gradientUnits="userSpaceOnUse" x1="1183" x2="1217"><stop offset="0" stop-color="#0009ff"/><stop offset="1" stop-color="#1f00ff"/></linearGradient><linearGradient id="i148" gradientUnits="userSpaceOnUse" x1="1183" x2="1215"><stop offset="0" stop-color="#0008ff"/><stop offset="1" stop-color="#1d00ff"/></linearGradient><linearGradient id="i149" gradientUnits="userSpaceOnUse" x1="1183" x2="1213"><stop offset="0" stop-color="#0007ff"/><stop offset="1" stop-color="#1a00ff"/></linearGradient><linearGradient id="i150" gradientUnits="userSpaceOnUse" x1="1184" x2="1211"><stop offset="0" stop-color="#0007ff"/><stop offset="1" stop-color="#1800ff"/></linearGradient><linearGradient id="i151" gradientUnits="userSpaceOnUse" x1="1184" x2="1209"><stop offset="0" stop-color="#0006ff"/><stop offset="1" stop-color="#1600ff"/></linearGradient><linearGradient id="i152" gradientUnits="userSpaceOnUse" x1="1184" x2="1207"><stop offset="0" stop-color="#0005ff"/><stop offset="1" stop-color="#1300ff"/></linearGradient><linearGradient id="i153" gradientUnits="userSpaceOnUse" x1="1185" x2="1205"><stop offset="0" stop-color="#0005ff"/><stop offset="1" stop-color="#1100ff"/></linearGradient><linearGradient id="i154" gradientUnits="userSpaceOnUse" x1="1185" x2="1203"><stop offset="0" stop-color="#0004ff"/><stop offset="1" stop-color="#0f00ff"/></linearGradient><linearGradient id="i155" gradientUnits="userSpaceOnUse" x1="1185" x2="1201"><stop offset="0" stop-color="#0004ff"/><stop offset="1" stop-color="#0d00ff"/></linearGradient><linearGradient id="i156" gradientUnits="userSpaceOnUse" x1="1186" x2="1199"><stop offset="0" stop-color="#0003ff"/><stop offset="1" stop-color="#0b00ff"/></linearGradient><linearGradient id="i157" gradientUnits="userSpaceOnUse" x1="1186" x2="1197"><stop offset="0" stop-color="#0002ff"/><stop offset="1" stop-color="#0800ff"/></linearGradient><linearGradient id="i158" gradientUnits="userSpaceOnUse" x1="1186" x2="1195"><stop offset="0" stop-color="#0002ff"/><stop offset="1" stop-color="#0600ff"/></linearGradient><linearGradient id="i159" gradientUnits="userSpaceOnUse" x1="1186" x2="1193"><stop offset="0" stop-color="#0001ff"/><stop offset="1" stop-color="#0400ff"/></linearGradient><linearGradient id="i160" gradientUnits="userSpaceOnUse" x1="1187" x2="1191"><stop offset="0" stop-color="#0000ff"/><stop offset="1" stop-color="#0200ff"/></linearGradient><clipPath id="cl"><polygon points="1272.5,544.5 1272.4,544.5 1272.4,544.5 1272.3,544.5 1272.2,544.6 1272.1,544.7 1271.9,544.6 1271.7,544.6 1271.6,544.7 1271.5,544.9 1271.4,545.0 1271.2,545.0 1271.0,545.0 1270.7,545.0 1270.4,545.0 1270.1,545.0 1269.8,545.0 1269.4,544.9 1269.0,544.8 1268.5,544.6 1267.7,544.2 1266.8,543.6 1265.7,542.9 1264.4,542.0 1263.0,540.9 1261.4,539.7 1259.5,538.2 1257.4,536.5 1255.1,534.5 1252.5,532.3 1249.7,529.9 1246.6,527.3 1243.2,524.5 1239.4,521.3 1235.2,517.8 1230.5,514.0 1225.5,509.9 1220.1,505.4 1214.3,500.4 1208.0,494.8 1201.2,488.5 1194.0,481.5 1186.2,473.5 1177.4,463.7 1167.3,451.8 1156.3,437.8 1144.6,422.2 1132.3,404.8 1119.5,385.6 1106.3,364.7 1093.1,342.8 1080.0,320.2 1067.4,297.2 1055.8,274.4 1045.7,252.2 1036.7,231.1 1029.0,211.3 1022.6,193.2 1017.6,177.1 1013.9,163.0 1011.3,150.6 1009.7,140.0 1009.1,130.8 1009.4,123.0 1010.5,116.2 1012.5,110.4 1015.2,105.5 1018.5,101.6 1022.4,98.5 1026.8,96.3 1031.5,94.6 1036.6,93.6 1042.0,92.9 1047.7,92.5 1053.5,92.3 1059.3,92.2 1065.2,92.2 1071.0,92.3 1077.0,92.4 1083.1,92.6 1089.4,92.8 1095.8,93.1 1102.5,93.5 1109.4,93.9 1116.5,94.3 1123.9,94.9 1131.6,95.4 1139.6,96.0 1147.9,96.7 1156.5,97.5 1165.6,98.4 1175.0,99.3 1184.7,100.4 1194.9,101.5 1205.5,102.7 1216.6,104.0 1228.0,105.3 1239.9,106.7 1252.2,108.1 1265.0,109.5 1278.2,111.1 1291.7,112.6 1305.7,114.2 1320.0,115.9 1334.6,117.5 1349.5,119.2 1364.5,121.0 1379.7,122.8 1394.6,124.6 1409.2,126.3 1423.7,128.0 1438.2,129.7 1452.4,131.4 1466.0,133.0 1479.0,134.5 1491.4,136.0 1503.2,137.4 1514.4,138.7 1525.0,139.9 1534.8,141.1 1544.0,142.2 1552.6,143.2 1560.6,144.1 1568.0,145.0 1574.9,145.8 1581.4,146.6 1587.6,147.3 1593.5,148.0 1599.0,148.6 1604.1,149.2 1608.8,149.8 1613.2,150.3 1617.2,150.8 1620.8,151.2 1624.0,151.6 1626.8,151.9 1629.4,152.2 1631.8,152.5 1633.9,152.7 1635.8,153.0 1637.4,153.2 1638.8,153.3 1639.9,153.4 1641.0,153.6 1642.0,153.7 1642.9,153.8 1643.8,153.9 1644.6,154.0 1645.3,154.1 1646.1,154.2 1646.9,154.2 1647.6,154.3 1648.3,154.4 1648.9,154.5 1649.3,154.5 1649.6,154.6 1649.8,154.6 1650.0,154.6 1650.2,154.6 1650.3,154.6 1650.4,154.6"/></clipPath><clipPath id="ct"><polygon points="1472.4,142.8 1136.6,111.4 1188.5,432.4"/></clipPath><clipPath id="cp"><rect x="1008" y="81.5" width="618.5" height="476"/></clipPath></defs><g clip-path="url(#cp)"><g clip-path="url(#cl)" shape-rendering="crispEdges"><rect x="1033" y="92" width="80" height="2" fill="url(#o0)"/><rect x="1026" y="94" width="114" height="2" fill="url(#o1)"/><rect x="1022" y="96" width="141" height="2" fill="url(#o2)"/><rect x="1019" y="98" width="164" height="2" fill="url(#o3)"/><rect x="1017" y="100" width="184" height="2" fill="url(#o4)"/><rect x="1015" y="102" width="203" height="2" fill="url(#o5)"/><rect x="1013" y="104" width="223" height="2" fill="url(#o6)"/><rect x="1012" y="106" width="241" height="2" fill="url(#o7)"/><rect x="1011" y="108" width="259" height="2" fill="url(#o8)"/><rect x="1010" y="110" width="278" height="2" fill="url(#o9)"/><rect x="1010" y="112" width="295" height="2" fill="url(#o10)"/><rect x="1009" y="114" width="314" height="2" fill="url(#o11)"/><rect x="1009" y="116" width="331" height="2" fill="url(#o12)"/><rect x="1008" y="118" width="349" height="2" fill="url(#o13)"/><rect x="1008" y="120" width="366" height="2" fill="url(#o14)"/><rect x="1008" y="122" width="383" height="2" fill="url(#o15)"/><rect x="1008" y="124" width="400" height="2" fill="url(#o16)"/><rect x="1008" y="126" width="417" height="2" fill="url(#o17)"/><rect x="1008" y="128" width="434" height="2" fill="url(#o18)"/><rect x="1008" y="130" width="451" height="2" fill="url(#o19)"/><rect x="1008" y="132" width="468" height="2" fill="url(#o20)"/><rect x="1008" y="134" width="485" height="2" fill="url(#o21)"/><rect x="1008" y="136" width="502" height="2" fill="url(#o22)"/><rect x="1008" y="138" width="519" height="2" fill="url(#o23)"/><rect x="1008" y="140" width="536" height="2" fill="url(#o24)"/><rect x="1008" y="142" width="553" height="2" fill="url(#o25)"/><rect x="1009" y="144" width="569" height="2" fill="url(#o26)"/><rect x="1009" y="146" width="586" height="2" fill="url(#o27)"/><rect x="1009" y="148" width="603" height="2" fill="url(#o28)"/><rect x="1010" y="150" width="618" height="2" fill="url(#o29)"/><rect x="1010" y="152" width="618" height="2" fill="url(#o30)"/><rect x="1010" y="154" width="618" height="2" fill="url(#o31)"/><rect x="1011" y="156" width="617" height="2" fill="url(#o32)"/><rect x="1011" y="158" width="617" height="2" fill="url(#o33)"/><rect x="1012" y="160" width="616" height="2" fill="url(#o34)"/><rect x="1012" y="162" width="616" height="2" fill="url(#o35)"/><rect x="1013" y="164" width="615" height="2" fill="url(#o36)"/><rect x="1013" y="166" width="615" height="2" fill="url(#o37)"/><rect x="1014" y="168" width="614" height="2" fill="url(#o38)"/><rect x="1014" y="170" width="614" height="2" fill="url(#o39)"/><rect x="1015" y="172" width="613" height="2" fill="url(#o40)"/><rect x="1015" y="174" width="613" height="2" fill="url(#o41)"/><rect x="1016" y="176" width="612" height="2" fill="url(#o42)"/><rect x="1016" y="178" width="612" height="2" fill="url(#o43)"/><rect x="1017" y="180" width="610" height="2" fill="url(#o44)"/><rect x="1018" y="182" width="607" height="2" fill="url(#o45)"/><rect x="1018" y="184" width="605" height="2" fill="url(#o46)"/><rect x="1019" y="186" width="602" height="2" fill="url(#o47)"/><rect x="1019" y="188" width="601" height="2" fill="url(#o48)"/><rect x="1020" y="190" width="598" height="2" fill="url(#o49)"/><rect x="1021" y="192" width="595" height="2" fill="url(#o50)"/><rect x="1021" y="194" width="593" height="2" fill="url(#o51)"/><rect x="1022" y="196" width="590" height="2" fill="url(#o52)"/><rect x="1023" y="198" width="587" height="2" fill="url(#o53)"/><rect x="1023" y="200" width="585" height="2" fill="url(#o54)"/><rect x="1024" y="202" width="582" height="2" fill="url(#o55)"/><rect x="1025" y="204" width="579" height="2" fill="url(#o56)"/><rect x="1026" y="206" width="576" height="2" fill="url(#o57)"/><rect x="1026" y="208" width="574" height="2" fill="url(#o58)"/><rect x="1027" y="210" width="571" height="2" fill="url(#o59)"/><rect x="1028" y="212" width="568" height="2" fill="url(#o60)"/><rect x="1029" y="214" width="565" height="2" fill="url(#o61)"/><rect x="1029" y="216" width="563" height="2" fill="url(#o62)"/><rect x="1030" y="218" width="560" height="2" fill="url(#o63)"/><rect x="1031" y="220" width="558" height="2" fill="url(#o64)"/><rect x="1032" y="222" width="555" height="2" fill="url(#o65)"/><rect x="1032" y="224" width="553" height="2" fill="url(#o66)"/><rect x="1033" y="226" width="550" height="2" fill="url(#o67)"/><rect x="1034" y="228" width="547" height="2" fill="url(#o68)"/><rect x="1035" y="230" width="544" height="2" fill="url(#o69)"/><rect x="1036" y="232" width="541" height="2" fill="url(#o70)"/><rect x="1036" y="234" width="539" height="2" fill="url(#o71)"/><rect x="1037" y="236" width="536" height="2" fill="url(#o72)"/><rect x="1038" y="238" width="533" height="2" fill="url(#o73)"/><rect x="1039" y="240" width="530" height="2" fill="url(#o74)"/><rect x="1040" y="242" width="527" height="2" fill="url(#o75)"/><rect x="1041" y="244" width="524" height="2" fill="url(#o76)"/><rect x="1041" y="246" width="522" height="2" fill="url(#o77)"/><rect x="1042" y="248" width="519" height="2" fill="url(#o78)"/><rect x="1043" y="250" width="516" height="2" fill="url(#o79)"/><rect x="1044" y="252" width="514" height="2" fill="url(#o80)"/><rect x="1045" y="254" width="511" height="2" fill="url(#o81)"/><rect x="1046" y="256" width="508" height="2" fill="url(#o82)"/><rect x="1047" y="258" width="505" height="2" fill="url(#o83)"/><rect x="1048" y="260" width="502" height="2" fill="url(#o84)"/><rect x="1049" y="262" width="499" height="2" fill="url(#o85)"/><rect x="1049" y="264" width="497" height="2" fill="url(#o86)"/><rect x="1050" y="266" width="494" height="2" fill="url(#o87)"/><rect x="1051" y="268" width="491" height="2" fill="url(#o88)"/><rect x="1052" y="270" width="488" height="2" fill="url(#o89)"/><rect x="1053" y="272" width="485" height="2" fill="url(#o90)"/><rect x="1054" y="274" width="482" height="2" fill="url(#o91)"/><rect x="1055" y="276" width="479" height="2" fill="url(#o92)"/><rect x="1056" y="278" width="476" height="2" fill="url(#o93)"/><rect x="1057" y="280" width="473" height="2" fill="url(#o94)"/><rect x="1058" y="282" width="470" height="2" fill="url(#o95)"/><rect x="1059" y="284" width="468" height="2" fill="url(#o96)"/><rect x="1060" y="286" width="465" height="2" fill="url(#o97)"/><rect x="1061" y="288" width="462" height="2" fill="url(#o98)"/><rect x="1062" y="290" width="459" height="2" fill="url(#o99)"/><rect x="1063" y="292" width="456" height="2" fill="url(#o100)"/><rect x="1064" y="294" width="453" height="2" fill="url(#o101)"/><rect x="1065" y="296" width="450" height="2" fill="url(#o102)"/><rect x="1066" y="298" width="447" height="2" fill="url(#o103)"/><rect x="1067" y="300" width="444" height="2" fill="url(#o104)"/><rect x="1068" y="302" width="441" height="2" fill="url(#o105)"/><rect x="1070" y="304" width="437" height="2" fill="url(#o106)"/><rect x="1071" y="306" width="434" height="2" fill="url(#o107)"/><rect x="1072" y="308" width="431" height="2" fill="url(#o108)"/><rect x="1073" y="310" width="428" height="2" fill="url(#o109)"/><rect x="1074" y="312" width="425" height="2" fill="url(#o110)"/><rect x="1075" y="314" width="422" height="2" fill="url(#o111)"/><rect x="1076" y="316" width="420" height="2" fill="url(#o112)"/><rect x="1077" y="318" width="417" height="2" fill="url(#o113)"/><rect x="1078" y="320" width="414" height="2" fill="url(#o114)"/><rect x="1080" y="322" width="410" height="2" fill="url(#o115)"/><rect x="1081" y="324" width="407" height="2" fill="url(#o116)"/><rect x="1082" y="326" width="404" height="2" fill="url(#o117)"/><rect x="1083" y="328" width="401" height="2" fill="url(#o118)"/><rect x="1084" y="330" width="398" height="2" fill="url(#o119)"/><rect x="1085" y="332" width="395" height="2" fill="url(#o120)"/><rect x="1086" y="334" width="392" height="2" fill="url(#o121)"/><rect x="1088" y="336" width="388" height="2" fill="url(#o122)"/><rect x="1089" y="338" width="385" height="2" fill="url(#o123)"/><rect x="1090" y="340" width="382" height="2" fill="url(#o124)"/><rect x="1091" y="342" width="379" height="2" fill="url(#o125)"/><rect x="1092" y="344" width="376" height="2" fill="url(#o126)"/><rect x="1094" y="346" width="372" height="2" fill="url(#o127)"/><rect x="1095" y="348" width="369" height="2" fill="url(#o128)"/><rect x="1096" y="350" width="367" height="2" fill="url(#o129)"/><rect x="1097" y="352" width="364" height="2" fill="url(#o130)"/><rect x="1098" y="354" width="361" height="2" fill="url(#o131)"/><rect x="1099" y="356" width="358" height="2" fill="url(#o132)"/><rect x="1101" y="358" width="354" height="2" fill="url(#o133)"/><rect x="1102" y="360" width="351" height="2" fill="url(#o134)"/><rect x="1103" y="362" width="348" height="2" fill="url(#o135)"/><rect x="1104" y="364" width="345" height="2" fill="url(#o136)"/><rect x="1106" y="366" width="341" height="2" fill="url(#o137)"/><rect x="1107" y="368" width="338" height="2" fill="url(#o138)"/><rect x="1108" y="370" width="335" height="2" fill="url(#o139)"/><rect x="1109" y="372" width="332" height="2" fill="url(#o140)"/><rect x="1111" y="374" width="328" height="2" fill="url(#o141)"/><rect x="1112" y="376" width="325" height="2" fill="url(#o142)"/><rect x="1113" y="378" width="322" height="2" fill="url(#o143)"/><rect x="1114" y="380" width="319" height="2" fill="url(#o144)"/><rect x="1116" y="382" width="316" height="2" fill="url(#o145)"/><rect x="1117" y="384" width="313" height="2" fill="url(#o146)"/><rect x="1118" y="386" width="310" height="2" fill="url(#o147)"/><rect x="1120" y="388" width="306" height="2" fill="url(#o148)"/><rect x="1121" y="390" width="303" height="2" fill="url(#o149)"/><rect x="1122" y="392" width="300" height="2" fill="url(#o150)"/><rect x="1123" y="394" width="297" height="2" fill="url(#o151)"/><rect x="1125" y="396" width="293" height="2" fill="url(#o152)"/><rect x="1126" y="398" width="290" height="2" fill="url(#o153)"/><rect x="1128" y="400" width="286" height="2" fill="url(#o154)"/><rect x="1129" y="402" width="283" height="2" fill="url(#o155)"/><rect x="1130" y="404" width="280" height="2" fill="url(#o156)"/><rect x="1132" y="406" width="276" height="2" fill="url(#o157)"/><rect x="1133" y="408" width="273" height="2" fill="url(#o158)"/><rect x="1134" y="410" width="270" height="2" fill="url(#o159)"/><rect x="1136" y="412" width="266" height="2" fill="url(#o160)"/><rect x="1137" y="414" width="264" height="2" fill="url(#o161)"/><rect x="1139" y="416" width="260" height="2" fill="url(#o162)"/><rect x="1140" y="418" width="257" height="2" fill="url(#o163)"/><rect x="1141" y="420" width="254" height="2" fill="url(#o164)"/><rect x="1143" y="422" width="250" height="2" fill="url(#o165)"/><rect x="1144" y="424" width="247" height="2" fill="url(#o166)"/><rect x="1146" y="426" width="243" height="2" fill="url(#o167)"/><rect x="1147" y="428" width="240" height="2" fill="url(#o168)"/><rect x="1149" y="430" width="236" height="2" fill="url(#o169)"/><rect x="1150" y="432" width="233" height="2" fill="url(#o170)"/><rect x="1152" y="434" width="229" height="2" fill="url(#o171)"/><rect x="1153" y="436" width="226" height="2" fill="url(#o172)"/><rect x="1155" y="438" width="222" height="2" fill="url(#o173)"/><rect x="1156" y="440" width="219" height="2" fill="url(#o174)"/><rect x="1158" y="442" width="215" height="2" fill="url(#o175)"/><rect x="1160" y="444" width="211" height="2" fill="url(#o176)"/><rect x="1161" y="446" width="209" height="2" fill="url(#o177)"/><rect x="1163" y="448" width="205" height="2" fill="url(#o178)"/><rect x="1164" y="450" width="202" height="2" fill="url(#o179)"/><rect x="1166" y="452" width="198" height="2" fill="url(#o180)"/><rect x="1168" y="454" width="194" height="2" fill="url(#o181)"/><rect x="1169" y="456" width="191" height="2" fill="url(#o182)"/><rect x="1171" y="458" width="187" height="2" fill="url(#o183)"/><rect x="1173" y="460" width="183" height="2" fill="url(#o184)"/><rect x="1174" y="462" width="180" height="2" fill="url(#o185)"/><rect x="1176" y="464" width="176" height="2" fill="url(#o186)"/><rect x="1178" y="466" width="172" height="2" fill="url(#o187)"/><rect x="1180" y="468" width="168" height="2" fill="url(#o188)"/><rect x="1181" y="470" width="165" height="2" fill="url(#o189)"/><rect x="1183" y="472" width="161" height="2" fill="url(#o190)"/><rect x="1185" y="474" width="157" height="2" fill="url(#o191)"/><rect x="1187" y="476" width="153" height="2" fill="url(#o192)"/><rect x="1189" y="478" width="149" height="2" fill="url(#o193)"/><rect x="1191" y="480" width="146" height="2" fill="url(#o194)"/><rect x="1193" y="482" width="142" height="2" fill="url(#o195)"/><rect x="1195" y="484" width="138" height="2" fill="url(#o196)"/><rect x="1197" y="486" width="134" height="2" fill="url(#o197)"/><rect x="1199" y="488" width="130" height="2" fill="url(#o198)"/><rect x="1201" y="490" width="126" height="2" fill="url(#o199)"/><rect x="1203" y="492" width="122" height="2" fill="url(#o200)"/><rect x="1206" y="494" width="117" height="2" fill="url(#o201)"/><rect x="1208" y="496" width="113" height="2" fill="url(#o202)"/><rect x="1210" y="498" width="109" height="2" fill="url(#o203)"/><rect x="1212" y="500" width="105" height="2" fill="url(#o204)"/><rect x="1215" y="502" width="100" height="2" fill="url(#o205)"/><rect x="1217" y="504" width="96" height="2" fill="url(#o206)"/><rect x="1219" y="506" width="92" height="2" fill="url(#o207)"/><rect x="1222" y="508" width="87" height="2" fill="url(#o208)"/><rect x="1224" y="510" width="83" height="2" fill="url(#o209)"/><rect x="1227" y="512" width="79" height="2" fill="url(#o210)"/><rect x="1229" y="514" width="75" height="2" fill="url(#o211)"/><rect x="1231" y="516" width="71" height="2" fill="url(#o212)"/><rect x="1234" y="518" width="66" height="2" fill="url(#o213)"/><rect x="1236" y="520" width="62" height="2" fill="url(#o214)"/><rect x="1239" y="522" width="57" height="2" fill="url(#o215)"/><rect x="1241" y="524" width="53" height="2" fill="url(#o216)"/><rect x="1244" y="526" width="48" height="2" fill="url(#o217)"/><rect x="1246" y="528" width="44" height="2" fill="url(#o218)"/><rect x="1248" y="530" width="40" height="2" fill="url(#o219)"/><rect x="1251" y="532" width="35" height="2" fill="url(#o220)"/><rect x="1253" y="534" width="31" height="2" fill="url(#o221)"/><rect x="1255" y="536" width="27" height="2" fill="url(#o222)"/><rect x="1258" y="538" width="22" height="2" fill="url(#o223)"/><rect x="1260" y="540" width="18" height="2" fill="url(#o224)"/><rect x="1263" y="542" width="13" height="2" fill="url(#o225)"/><rect x="1266" y="544" width="9" height="2" fill="url(#o226)"/><g clip-path="url(#ct)"><rect x="1135" y="111" width="20" height="2" fill="url(#i0)"/><rect x="1135" y="113" width="41" height="2" fill="url(#i1)"/><rect x="1136" y="115" width="62" height="2" fill="url(#i2)"/><rect x="1136" y="117" width="83" height="2" fill="url(#i3)"/><rect x="1136" y="119" width="104" height="2" fill="url(#i4)"/><rect x="1137" y="121" width="125" height="2" fill="url(#i5)"/><rect x="1137" y="123" width="146" height="2" fill="url(#i6)"/><rect x="1137" y="125" width="167" height="2" fill="url(#i7)"/><rect x="1138" y="127" width="188" height="2" fill="url(#i8)"/><rect x="1138" y="129" width="209" height="2" fill="url(#i9)"/><rect x="1138" y="131" width="231" height="2" fill="url(#i10)"/><rect x="1139" y="133" width="251" height="2" fill="url(#i11)"/><rect x="1139" y="135" width="272" height="2" fill="url(#i12)"/><rect x="1139" y="137" width="294" height="2" fill="url(#i13)"/><rect x="1140" y="139" width="314" height="2" fill="url(#i14)"/><rect x="1140" y="141" width="334" height="2" fill="url(#i15)"/><rect x="1140" y="143" width="334" height="2" fill="url(#i16)"/><rect x="1141" y="145" width="331" height="2" fill="url(#i17)"/><rect x="1141" y="147" width="329" height="2" fill="url(#i18)"/><rect x="1141" y="149" width="327" height="2" fill="url(#i19)"/><rect x="1141" y="151" width="325" height="2" fill="url(#i20)"/><rect x="1142" y="153" width="322" height="2" fill="url(#i21)"/><rect x="1142" y="155" width="320" height="2" fill="url(#i22)"/><rect x="1142" y="157" width="318" height="2" fill="url(#i23)"/><rect x="1143" y="159" width="315" height="2" fill="url(#i24)"/><rect x="1143" y="161" width="313" height="2" fill="url(#i25)"/><rect x="1143" y="163" width="311" height="2" fill="url(#i26)"/><rect x="1144" y="165" width="308" height="2" fill="url(#i27)"/><rect x="1144" y="167" width="306" height="2" fill="url(#i28)"/><rect x="1144" y="169" width="304" height="2" fill="url(#i29)"/><rect x="1145" y="171" width="301" height="2" fill="url(#i30)"/><rect x="1145" y="173" width="299" height="2" fill="url(#i31)"/><rect x="1145" y="175" width="297" height="2" fill="url(#i32)"/><rect x="1146" y="177" width="294" height="2" fill="url(#i33)"/><rect x="1146" y="179" width="292" height="2" fill="url(#i34)"/><rect x="1146" y="181" width="290" height="2" fill="url(#i35)"/><rect x="1147" y="183" width="287" height="2" fill="url(#i36)"/><rect x="1147" y="185" width="286" height="2" fill="url(#i37)"/><rect x="1147" y="187" width="284" height="2" fill="url(#i38)"/><rect x="1148" y="189" width="281" height="2" fill="url(#i39)"/><rect x="1148" y="191" width="279" height="2" fill="url(#i40)"/><rect x="1148" y="193" width="277" height="2" fill="url(#i41)"/><rect x="1149" y="195" width="274" height="2" fill="url(#i42)"/><rect x="1149" y="197" width="272" height="2" fill="url(#i43)"/><rect x="1149" y="199" width="270" height="2" fill="url(#i44)"/><rect x="1150" y="201" width="267" height="2" fill="url(#i45)"/><rect x="1150" y="203" width="265" height="2" fill="url(#i46)"/><rect x="1150" y="205" width="263" height="2" fill="url(#i47)"/><rect x="1151" y="207" width="260" height="2" fill="url(#i48)"/><rect x="1151" y="209" width="258" height="2" fill="url(#i49)"/><rect x="1151" y="211" width="256" height="2" fill="url(#i50)"/><rect x="1152" y="213" width="253" height="2" fill="url(#i51)"/><rect x="1152" y="215" width="251" height="2" fill="url(#i52)"/><rect x="1152" y="217" width="249" height="2" fill="url(#i53)"/><rect x="1152" y="219" width="247" height="2" fill="url(#i54)"/><rect x="1153" y="221" width="244" height="2" fill="url(#i55)"/><rect x="1153" y="223" width="242" height="2" fill="url(#i56)"/><rect x="1153" y="225" width="240" height="2" fill="url(#i57)"/><rect x="1154" y="227" width="237" height="2" fill="url(#i58)"/><rect x="1154" y="229" width="235" height="2" fill="url(#i59)"/><rect x="1154" y="231" width="233" height="2" fill="url(#i60)"/><rect x="1155" y="233" width="230" height="2" fill="url(#i61)"/><rect x="1155" y="235" width="229" height="2" fill="url(#i62)"/><rect x="1155" y="237" width="227" height="2" fill="url(#i63)"/><rect x="1156" y="239" width="224" height="2" fill="url(#i64)"/><rect x="1156" y="241" width="222" height="2" fill="url(#i65)"/><rect x="1156" y="243" width="220" height="2" fill="url(#i66)"/><rect x="1157" y="245" width="217" height="2" fill="url(#i67)"/><rect x="1157" y="247" width="215" height="2" fill="url(#i68)"/><rect x="1157" y="249" width="213" height="2" fill="url(#i69)"/><rect x="1158" y="251" width="210" height="2" fill="url(#i70)"/><rect x="1158" y="253" width="208" height="2" fill="url(#i71)"/><rect x="1158" y="255" width="206" height="2" fill="url(#i72)"/><rect x="1159" y="257" width="203" height="2" fill="url(#i73)"/><rect x="1159" y="259" width="201" height="2" fill="url(#i74)"/><rect x="1159" y="261" width="199" height="2" fill="url(#i75)"/><rect x="1160" y="263" width="196" height="2" fill="url(#i76)"/><rect x="1160" y="265" width="194" height="2" fill="url(#i77)"/><rect x="1160" y="267" width="192" height="2" fill="url(#i78)"/><rect x="1161" y="269" width="189" height="2" fill="url(#i79)"/><rect x="1161" y="271" width="187" height="2" fill="url(#i80)"/><rect x="1161" y="273" width="185" height="2" fill="url(#i81)"/><rect x="1162" y="275" width="182" height="2" fill="url(#i82)"/><rect x="1162" y="277" width="180" height="2" fill="url(#i83)"/><rect x="1162" y="279" width="178" height="2" fill="url(#i84)"/><rect x="1163" y="281" width="175" height="2" fill="url(#i85)"/><rect x="1163" y="283" width="173" height="2" fill="url(#i86)"/><rect x="1163" y="285" width="171" height="2" fill="url(#i87)"/><rect x="1164" y="287" width="169" height="2" fill="url(#i88)"/><rect x="1164" y="289" width="167" height="2" fill="url(#i89)"/><rect x="1164" y="291" width="165" height="2" fill="url(#i90)"/><rect x="1164" y="293" width="163" height="2" fill="url(#i91)"/><rect x="1165" y="295" width="160" height="2" fill="url(#i92)"/><rect x="1165" y="297" width="158" height="2" fill="url(#i93)"/><rect x="1165" y="299" width="156" height="2" fill="url(#i94)"/><rect x="1166" y="301" width="153" height="2" fill="url(#i95)"/><rect x="1166" y="303" width="151" height="2" fill="url(#i96)"/><rect x="1166" y="305" width="149" height="2" fill="url(#i97)"/><rect x="1167" y="307" width="146" height="2" fill="url(#i98)"/><rect x="1167" y="309" width="144" height="2" fill="url(#i99)"/><rect x="1167" y="311" width="142" height="2" fill="url(#i100)"/><rect x="1168" y="313" width="139" height="2" fill="url(#i101)"/><rect x="1168" y="315" width="137" height="2" fill="url(#i102)"/><rect x="1168" y="317" width="135" height="2" fill="url(#i103)"/><rect x="1169" y="319" width="132" height="2" fill="url(#i104)"/><rect x="1169" y="321" width="130" height="2" fill="url(#i105)"/><rect x="1169" y="323" width="128" height="2" fill="url(#i106)"/><rect x="1170" y="325" width="125" height="2" fill="url(#i107)"/><rect x="1170" y="327" width="123" height="2" fill="url(#i108)"/><rect x="1170" y="329" width="121" height="2" fill="url(#i109)"/><rect x="1171" y="331" width="118" height="2" fill="url(#i110)"/><rect x="1171" y="333" width="116" height="2" fill="url(#i111)"/><rect x="1171" y="335" width="114" height="2" fill="url(#i112)"/><rect x="1172" y="337" width="112" height="2" fill="url(#i113)"/><rect x="1172" y="339" width="110" height="2" fill="url(#i114)"/><rect x="1172" y="341" width="108" height="2" fill="url(#i115)"/><rect x="1173" y="343" width="105" height="2" fill="url(#i116)"/><rect x="1173" y="345" width="103" height="2" fill="url(#i117)"/><rect x="1173" y="347" width="101" height="2" fill="url(#i118)"/><rect x="1174" y="349" width="98" height="2" fill="url(#i119)"/><rect x="1174" y="351" width="96" height="2" fill="url(#i120)"/><rect x="1174" y="353" width="94" height="2" fill="url(#i121)"/><rect x="1175" y="355" width="91" height="2" fill="url(#i122)"/><rect x="1175" y="357" width="89" height="2" fill="url(#i123)"/><rect x="1175" y="359" width="87" height="2" fill="url(#i124)"/><rect x="1175" y="361" width="85" height="2" fill="url(#i125)"/><rect x="1176" y="363" width="82" height="2" fill="url(#i126)"/><rect x="1176" y="365" width="80" height="2" fill="url(#i127)"/><rect x="1176" y="367" width="78" height="2" fill="url(#i128)"/><rect x="1177" y="369" width="75" height="2" fill="url(#i129)"/><rect x="1177" y="371" width="73" height="2" fill="url(#i130)"/><rect x="1177" y="373" width="71" height="2" fill="url(#i131)"/><rect x="1178" y="375" width="68" height="2" fill="url(#i132)"/><rect x="1178" y="377" width="66" height="2" fill="url(#i133)"/><rect x="1178" y="379" width="64" height="2" fill="url(#i134)"/><rect x="1179" y="381" width="61" height="2" fill="url(#i135)"/><rect x="1179" y="383" width="59" height="2" fill="url(#i136)"/><rect x="1179" y="385" width="57" height="2" fill="url(#i137)"/><rect x="1180" y="387" width="54" height="2" fill="url(#i138)"/><rect x="1180" y="389" width="53" height="2" fill="url(#i139)"/><rect x="1180" y="391" width="51" height="2" fill="url(#i140)"/><rect x="1181" y="393" width="48" height="2" fill="url(#i141)"/><rect x="1181" y="395" width="46" height="2" fill="url(#i142)"/><rect x="1181" y="397" width="44" height="2" fill="url(#i143)"/><rect x="1182" y="399" width="41" height="2" fill="url(#i144)"/><rect x="1182" y="401" width="39" height="2" fill="url(#i145)"/><rect x="1182" y="403" width="37" height="2" fill="url(#i146)"/><rect x="1183" y="405" width="34" height="2" fill="url(#i147)"/><rect x="1183" y="407" width="32" height="2" fill="url(#i148)"/><rect x="1183" y="409" width="30" height="2" fill="url(#i149)"/><rect x="1184" y="411" width="27" height="2" fill="url(#i150)"/><rect x="1184" y="413" width="25" height="2" fill="url(#i151)"/><rect x="1184" y="415" width="23" height="2" fill="url(#i152)"/><rect x="1185" y="417" width="20" height="2" fill="url(#i153)"/><rect x="1185" y="419" width="18" height="2" fill="url(#i154)"/><rect x="1185" y="421" width="16" height="2" fill="url(#i155)"/><rect x="1186" y="423" width="13" height="2" fill="url(#i156)"/><rect x="1186" y="425" width="11" height="2" fill="url(#i157)"/><rect x="1186" y="427" width="9" height="2" fill="url(#i158)"/><rect x="1186" y="429" width="7" height="2" fill="url(#i159)"/><rect x="1187" y="431" width="4" height="2" fill="url(#i160)"/></g></g></g><line x1="1007.7" y1="80.5" x2="1626.8" y2="80.5" stroke="#b4b4b4" stroke-width="1.2"/><line x1="1626.5" y1="80.5" x2="1626.5" y2="557.2" stroke="#b4b4b4" stroke-width="1.2"/><line x1="1007.5" y1="80.0" x2="1007.5" y2="563.0" stroke="#b4b4b4" stroke-width="1.3"/><line x1="1002.0" y1="557.5" x2="1626.8" y2="557.5" stroke="#b4b4b4" stroke-width="1.3"/><line x1="1007.7" y1="557.2" x2="1007.7" y2="563.0" stroke="#d4d4d4" stroke-width="1.5"/><text x="1007.7" y="577.9" font-size="13.5" fill="#d8d8d8" text-anchor="middle">0</text><line x1="1001.8" y1="557.6" x2="1007.7" y2="557.6" stroke="#e4e4e4" stroke-width="1.6"/><text x="1001.3" y="562.8" font-size="13.5" fill="#d8d8d8" text-anchor="end">0</text><line x1="1059.2" y1="557.2" x2="1059.2" y2="563.0" stroke="#d4d4d4" stroke-width="1.5"/><text x="1059.4" y="577.9" font-size="13.5" fill="#d8d8d8" text-anchor="middle" letter-spacing="0.26">0,05</text><line x1="1001.8" y1="517.9" x2="1007.7" y2="517.9" stroke="#e4e4e4" stroke-width="1.6"/><text x="1001.6" y="523.1" font-size="13.5" fill="#d8d8d8" text-anchor="end" letter-spacing="0.26">0,05</text><line x1="1110.8" y1="557.2" x2="1110.8" y2="563.0" stroke="#d4d4d4" stroke-width="1.5"/><text x="1110.9" y="577.9" font-size="13.5" fill="#d8d8d8" text-anchor="middle" letter-spacing="0.28">0,1</text><line x1="1001.8" y1="478.3" x2="1007.7" y2="478.3" stroke="#e4e4e4" stroke-width="1.6"/><text x="1001.6" y="483.5" font-size="13.5" fill="#d8d8d8" text-anchor="end" letter-spacing="0.28">0,1</text><line x1="1162.4" y1="557.2" x2="1162.4" y2="563.0" stroke="#d4d4d4" stroke-width="1.5"/><text x="1162.5" y="577.9" font-size="13.5" fill="#d8d8d8" text-anchor="middle" letter-spacing="0.26">0,15</text><line x1="1001.8" y1="438.6" x2="1007.7" y2="438.6" stroke="#e4e4e4" stroke-width="1.6"/><text x="1001.6" y="443.8" font-size="13.5" fill="#d8d8d8" text-anchor="end" letter-spacing="0.26">0,15</text><line x1="1213.9" y1="557.2" x2="1213.9" y2="563.0" stroke="#d4d4d4" stroke-width="1.5"/><text x="1214.0" y="577.9" font-size="13.5" fill="#d8d8d8" text-anchor="middle" letter-spacing="0.28">0,2</text><line x1="1001.8" y1="399.0" x2="1007.7" y2="399.0" stroke="#e4e4e4" stroke-width="1.6"/><text x="1001.6" y="404.2" font-size="13.5" fill="#d8d8d8" text-anchor="end" letter-spacing="0.28">0,2</text><line x1="1265.5" y1="557.2" x2="1265.5" y2="563.0" stroke="#d4d4d4" stroke-width="1.5"/><text x="1265.6" y="577.9" font-size="13.5" fill="#d8d8d8" text-anchor="middle" letter-spacing="0.26">0,25</text><line x1="1001.8" y1="359.3" x2="1007.7" y2="359.3" stroke="#e4e4e4" stroke-width="1.6"/><text x="1001.6" y="364.5" font-size="13.5" fill="#d8d8d8" text-anchor="end" letter-spacing="0.26">0,25</text><line x1="1317.0" y1="557.2" x2="1317.0" y2="563.0" stroke="#d4d4d4" stroke-width="1.5"/><text x="1317.1" y="577.9" font-size="13.5" fill="#d8d8d8" text-anchor="middle" letter-spacing="0.28">0,3</text><line x1="1001.8" y1="319.6" x2="1007.7" y2="319.6" stroke="#e4e4e4" stroke-width="1.6"/><text x="1001.6" y="324.8" font-size="13.5" fill="#d8d8d8" text-anchor="end" letter-spacing="0.28">0,3</text><line x1="1368.6" y1="557.2" x2="1368.6" y2="563.0" stroke="#d4d4d4" stroke-width="1.5"/><text x="1368.7" y="577.9" font-size="13.5" fill="#d8d8d8" text-anchor="middle" letter-spacing="0.26">0,35</text><line x1="1001.8" y1="280.0" x2="1007.7" y2="280.0" stroke="#e4e4e4" stroke-width="1.6"/><text x="1001.6" y="285.2" font-size="13.5" fill="#d8d8d8" text-anchor="end" letter-spacing="0.26">0,35</text><line x1="1420.1" y1="557.2" x2="1420.1" y2="563.0" stroke="#d4d4d4" stroke-width="1.5"/><text x="1420.2" y="577.9" font-size="13.5" fill="#d8d8d8" text-anchor="middle" letter-spacing="0.28">0,4</text><line x1="1001.8" y1="240.3" x2="1007.7" y2="240.3" stroke="#e4e4e4" stroke-width="1.6"/><text x="1001.6" y="245.5" font-size="13.5" fill="#d8d8d8" text-anchor="end" letter-spacing="0.28">0,4</text><line x1="1471.7" y1="557.2" x2="1471.7" y2="563.0" stroke="#d4d4d4" stroke-width="1.5"/><text x="1471.8" y="577.9" font-size="13.5" fill="#d8d8d8" text-anchor="middle" letter-spacing="0.26">0,45</text><line x1="1001.8" y1="200.7" x2="1007.7" y2="200.7" stroke="#e4e4e4" stroke-width="1.6"/><text x="1001.6" y="205.9" font-size="13.5" fill="#d8d8d8" text-anchor="end" letter-spacing="0.26">0,45</text><line x1="1523.2" y1="557.2" x2="1523.2" y2="563.0" stroke="#d4d4d4" stroke-width="1.5"/><text x="1523.3" y="577.9" font-size="13.5" fill="#d8d8d8" text-anchor="middle" letter-spacing="0.28">0,5</text><line x1="1001.8" y1="161.0" x2="1007.7" y2="161.0" stroke="#e4e4e4" stroke-width="1.6"/><text x="1001.6" y="166.2" font-size="13.5" fill="#d8d8d8" text-anchor="end" letter-spacing="0.28">0,5</text><line x1="1574.8" y1="557.2" x2="1574.8" y2="563.0" stroke="#d4d4d4" stroke-width="1.5"/><text x="1574.9" y="577.9" font-size="13.5" fill="#d8d8d8" text-anchor="middle" letter-spacing="0.26">0,55</text><line x1="1001.8" y1="121.3" x2="1007.7" y2="121.3" stroke="#e4e4e4" stroke-width="1.6"/><text x="1001.6" y="126.5" font-size="13.5" fill="#d8d8d8" text-anchor="end" letter-spacing="0.26">0,55</text><text x="1300.6" y="76.0" font-size="13.5" fill="#d8d8d8" text-anchor="middle" letter-spacing="0.30">CIE 1976 u'v'</text><g fill="none" stroke="#fff" stroke-width="1.3" stroke-opacity="0.92"><rect x="1129.6" y="103.6" width="12.6" height="12.6"/><rect x="1141.2" y="115.2" width="12.6" height="12.6"/><rect x="1153.2" y="127.2" width="12.6" height="12.6"/><rect x="1167.5" y="141.8" width="12.6" height="12.6"/><rect x="1184.8" y="157.7" width="12.6" height="12.6"/><rect x="1211.4" y="110.9" width="12.6" height="12.6"/><rect x="1209.7" y="122.2" width="12.6" height="12.6"/><rect x="1209.1" y="134.9" width="12.6" height="12.6"/><rect x="1208.3" y="146.8" width="12.6" height="12.6"/><rect x="1207.4" y="161.5" width="12.6" height="12.6"/><rect x="1144.0" y="189.4" width="12.6" height="12.6"/><rect x="1156.2" y="186.7" width="12.6" height="12.6"/><rect x="1167.5" y="185.4" width="12.6" height="12.6"/><rect x="1180.2" y="182.7" width="12.6" height="12.6"/><rect x="1192.7" y="181.4" width="12.6" height="12.6"/><rect x="1465.4" y="135.2" width="12.6" height="12.6"/><rect x="1403.3" y="145.8" width="12.6" height="12.6"/><rect x="1350.9" y="154.8" width="12.6" height="12.6"/><rect x="1303.4" y="161.2" width="12.6" height="12.6"/><rect x="1251.7" y="170.7" width="12.6" height="12.6"/><rect x="1315.2" y="287.8" width="12.6" height="12.6"/><rect x="1283.7" y="257.7" width="12.6" height="12.6"/><rect x="1258.7" y="232.6" width="12.6" height="12.6"/><rect x="1240.2" y="212.7" width="12.6" height="12.6"/><rect x="1221.9" y="194.1" width="12.6" height="12.6"/><rect x="1182.2" y="424.7" width="12.6" height="12.6"/><rect x="1190.2" y="341.6" width="12.6" height="12.6"/><rect x="1195.3" y="286.7" width="12.6" height="12.6"/><rect x="1199.3" y="243.1" width="12.6" height="12.6"/><rect x="1201.8" y="207.6" width="12.6" height="12.6"/></g><rect x="1204.8" y="178.8" width="12.4" height="12.4" fill="none" stroke="#000" stroke-width="1.6"/><g stroke="#000" stroke-width="1.15"><circle cx="1135.5" cy="107.5" r="4.05" fill="#00be00"/><circle cx="1145.0" cy="117.4" r="4.05" fill="#42be42"/><circle cx="1156.5" cy="132.5" r="4.05" fill="#68be68"/><circle cx="1170.0" cy="146.5" r="4.05" fill="#88be88"/><circle cx="1185.4" cy="166.4" r="4.05" fill="#a4bea4"/><circle cx="1212.4" cy="113.5" r="4.05" fill="#bebe00"/><circle cx="1210.5" cy="125.5" r="4.05" fill="#bebe42"/><circle cx="1209.4" cy="138.5" r="4.05" fill="#bebe68"/><circle cx="1208.5" cy="153.4" r="4.05" fill="#bebe88"/><circle cx="1205.5" cy="170.4" r="4.05" fill="#bebea4"/><circle cx="1150.3" cy="197.9" r="4.05" fill="#00bebe"/><circle cx="1159.5" cy="196.3" r="4.05" fill="#42bebe"/><circle cx="1170.0" cy="193.9" r="4.05" fill="#68bebe"/><circle cx="1181.4" cy="191.7" r="4.05" fill="#88bebe"/><circle cx="1193.5" cy="190.3" r="4.05" fill="#a4bebe"/><circle cx="1460.8" cy="136.5" r="4.05" fill="#be0000"/><circle cx="1407.0" cy="146.5" r="4.05" fill="#be4242"/><circle cx="1350.5" cy="158.5" r="4.05" fill="#be6868"/><circle cx="1297.4" cy="167.4" r="4.05" fill="#be8888"/><circle cx="1247.6" cy="179.4" r="4.05" fill="#bea4a4"/><circle cx="1300.5" cy="299.4" r="4.05" fill="#be00be"/><circle cx="1275.6" cy="270.4" r="4.05" fill="#be42be"/><circle cx="1251.7" cy="242.5" r="4.05" fill="#be68be"/><circle cx="1235.5" cy="222.8" r="4.05" fill="#be88be"/><circle cx="1218.4" cy="203.3" r="4.05" fill="#bea4be"/><circle cx="1183.2" cy="415.2" r="4.05" fill="#0000be"/><circle cx="1188.4" cy="351.9" r="4.05" fill="#4242be"/><circle cx="1193.5" cy="296.3" r="4.05" fill="#6868be"/><circle cx="1197.4" cy="254.5" r="4.05" fill="#8888be"/><circle cx="1201.4" cy="217.5" r="4.05" fill="#a4a4be"/><circle cx="1205.5" cy="186.6" r="4.05" fill="#fff"/></g><rect x="1415" y="410" width="206" height="138.5" fill="url(#ins)"/><polygon points="1415,410 1621,410 1621,533.8 1415,424.8" fill="#000" fill-opacity="0.385"/><g clip-path="url(#cins)" stroke="#000" stroke-width="1.1"><circle cx="1512" cy="429" r="4.6" fill="#c6c214"/><circle cx="1416.3" cy="539.7" r="4.6" fill="#b9b96a"/></g><rect x="1510.8" y="472.8" width="13.6" height="12.6" fill="none" stroke="#fff" stroke-width="1.4"/><rect x="1415" y="409.9" width="206" height="138.8" fill="none" stroke="#9c9c9c" stroke-width="1.2"/></svg><div class="a" style="left:386px;top:420.2px;width:572px;height:157.7px;background:#000"></div><div class="a" style="left:405.6px;top:427px;width:96.4px;height:129px;border:1.2px solid #fff;background:linear-gradient(#b8c2a8 0,#b8c2a8 49.6%,#c1c2a2 50.4%,#c1c2a2 100%)"></div><div class="t" style="left:442.6px;top:559.4px;font-size:11.5px;color:#fff;letter-spacing:-0.23px;font-weight:bold;">20%</div><div class="a" style="left:517.5px;top:427px;width:96.4px;height:129px;border:1.2px solid #fff;background:linear-gradient(#b9c18b 0,#b9c18b 49.6%,#c3c087 50.4%,#c3c087 100%)"></div><div class="t" style="left:554.5px;top:559.4px;font-size:11.5px;color:#fff;letter-spacing:-0.23px;font-weight:bold;">40%</div><div class="a" style="left:629.3px;top:427px;width:96.4px;height:129px;border:1.2px solid #fff;background:linear-gradient(#b8c068 0,#b8c068 49.6%,#c3bf6c 50.4%,#c3bf6c 100%)"></div><div class="t" style="left:666.3px;top:559.4px;font-size:11.5px;color:#fff;letter-spacing:-0.23px;font-weight:bold;">60%</div><div class="a" style="left:741.1px;top:427px;width:96.4px;height:129px;border:1.2px solid #fff;background:linear-gradient(#b8be46 0,#b8be46 49.6%,#c3bf4e 50.4%,#c3bf4e 100%)"></div><div class="t" style="left:778.2px;top:559.4px;font-size:11.5px;color:#fff;letter-spacing:-0.23px;font-weight:bold;">80%</div><div class="a" style="left:853.0px;top:427px;width:96.4px;height:129px;border:1.2px solid #fff;background:linear-gradient(#bcc002 0,#bcc002 49.6%,#c4bf2c 50.4%,#c4bf2c 100%)"></div><div class="t" style="left:886.9px;top:559.4px;font-size:11.5px;color:#fff;letter-spacing:-0.20px;font-weight:bold;">100%</div><div class="t" style="left:394.5px;top:455.5px;font-size:11.5px;font-weight:bold;color:#fff;transform:translate(-50%,-50%) rotate(-90deg)">Actual</div><div class="t" style="left:394.5px;top:527px;font-size:11.5px;font-weight:bold;color:#fff;transform:translate(-50%,-50%) rotate(-90deg)">Target</div><div class="t" style="left:72.3px;top:597.5px;font-size:26.5px;color:#f2f2f2;letter-spacing:0.92px;-webkit-text-stroke:0.35px #f2f2f2;">Avg dE2000: 2,62</div><div class="t" style="left:68.6px;top:636.8px;font-size:26.5px;color:#f2f2f2;letter-spacing:1.19px;-webkit-text-stroke:0.35px #f2f2f2;">Max dE2000: 5,09</div><div class="t" style="left:37.2px;top:682.5px;font-size:26.5px;color:#f2f2f2;letter-spacing:1.18px;-webkit-text-stroke:0.35px #f2f2f2;">Current Reading</div><div class="t" style="left:37.2px;top:720.2px;font-size:22.5px;color:#f2f2f2;letter-spacing:0.71px;-webkit-text-stroke:0.35px #f2f2f2;">x: 0,418</div><div class="t" style="left:188.1px;top:720.2px;font-size:22.5px;color:#f2f2f2;letter-spacing:0.85px;-webkit-text-stroke:0.35px #f2f2f2;">y: 0,5232</div><div class="t" style="left:37.2px;top:760.6px;font-size:22.5px;color:#f2f2f2;letter-spacing:0.68px;-webkit-text-stroke:0.35px #f2f2f2;">fL: 73,33</div><div class="t" style="left:37.2px;top:793.8px;font-size:22.5px;color:#f2f2f2;letter-spacing:1.34px;-webkit-text-stroke:0.35px #f2f2f2;">cd/m²: 251,24</div><div class="a" style="left:630.7px;top:599.7px;width:698.5px;height:29.1px;background:linear-gradient(#2e2e2e 0,#2b2b2b 47%,#161616 53%,#0e0e0e 100%)"></div><div class="a" style="left:630.7px;top:599.7px;width:19px;height:29.1px;background:#000"></div><div class="t" style="left:811.1px;top:606.6px;font-size:14.5px;color:#f4f4f4;transform:scaleX(1.34);transform-origin:0 50%">20%</div><div class="t" style="left:916.0px;top:606.6px;font-size:14.5px;color:#f4f4f4;transform:scaleX(1.34);transform-origin:0 50%">40%</div><div class="t" style="left:1020.6px;top:606.6px;font-size:14.5px;color:#f4f4f4;transform:scaleX(1.34);transform-origin:0 50%">60%</div><div class="t" style="left:1125.3px;top:606.6px;font-size:14.5px;color:#f4f4f4;transform:scaleX(1.34);transform-origin:0 50%">80%</div><div class="t" style="left:1230.3px;top:606.6px;font-size:14.5px;color:#f4f4f4;transform:scaleX(1.34);transform-origin:0 50%">100%</div><div class="a" style="left:630.7px;top:628.8px;width:698.5px;height:27.8px;background:#414141"></div><div class="a" style="left:630.7px;top:628.8px;width:19px;height:27.8px;background:linear-gradient(90deg,#262626,#1e1e1e)"></div><div class="t" style="left:656.2px;top:635.6px;font-size:16px;color:#f0f0f0;transform:scaleX(1.25);transform-origin:0 50%">x: CIE31</div><div class="t" style="left:811.1px;top:635.6px;font-size:16px;color:#f0f0f0;transform:scaleX(1.35);transform-origin:0 50%">0,3230</div><div class="t" style="left:916.0px;top:635.6px;font-size:16px;color:#f0f0f0;transform:scaleX(1.35);transform-origin:0 50%">0,3471</div><div class="t" style="left:1020.6px;top:635.6px;font-size:16px;color:#f0f0f0;transform:scaleX(1.35);transform-origin:0 50%">0,3715</div><div class="t" style="left:1125.3px;top:635.6px;font-size:16px;color:#f0f0f0;transform:scaleX(1.35);transform-origin:0 50%">0,3943</div><div class="t" style="left:1230.3px;top:635.6px;font-size:16px;color:#f0f0f0;transform:scaleX(1.35);transform-origin:0 50%">0,4180</div><div class="a" style="left:630.7px;top:656.3px;width:698.5px;height:27.8px;background:#828282"></div><div class="a" style="left:630.7px;top:656.3px;width:19px;height:27.8px;background:linear-gradient(90deg,#333333,#1e1e1e)"></div><div class="t" style="left:656.2px;top:663.1px;font-size:16px;color:#f0f0f0;transform:scaleX(1.25);transform-origin:0 50%">y: CIE31</div><div class="t" style="left:811.1px;top:663.1px;font-size:16px;color:#f0f0f0;transform:scaleX(1.35);transform-origin:0 50%">0,3620</div><div class="t" style="left:916.0px;top:663.1px;font-size:16px;color:#f0f0f0;transform:scaleX(1.35);transform-origin:0 50%">0,4030</div><div class="t" style="left:1020.6px;top:663.1px;font-size:16px;color:#f0f0f0;transform:scaleX(1.35);transform-origin:0 50%">0,4444</div><div class="t" style="left:1125.3px;top:663.1px;font-size:16px;color:#f0f0f0;transform:scaleX(1.35);transform-origin:0 50%">0,4832</div><div class="t" style="left:1230.3px;top:663.1px;font-size:16px;color:#f0f0f0;transform:scaleX(1.35);transform-origin:0 50%">0,5232</div><div class="a" style="left:630.7px;top:683.9px;width:698.5px;height:27.8px;background:#414141"></div><div class="a" style="left:630.7px;top:683.9px;width:19px;height:27.8px;background:linear-gradient(90deg,#262626,#1e1e1e)"></div><div class="t" style="left:656.2px;top:690.6px;font-size:16px;color:#f0f0f0;transform:scaleX(1.25);transform-origin:0 50%">Y</div><div class="t" style="left:811.1px;top:690.6px;font-size:16px;color:#f0f0f0;transform:scaleX(1.35);transform-origin:0 50%">269,9133</div><div class="t" style="left:916.0px;top:690.6px;font-size:16px;color:#f0f0f0;transform:scaleX(1.35);transform-origin:0 50%">263,6406</div><div class="t" style="left:1020.6px;top:690.6px;font-size:16px;color:#f0f0f0;transform:scaleX(1.35);transform-origin:0 50%">258,6120</div><div class="t" style="left:1125.3px;top:690.6px;font-size:16px;color:#f0f0f0;transform:scaleX(1.35);transform-origin:0 50%">254,7686</div><div class="t" style="left:1230.3px;top:690.6px;font-size:16px;color:#f0f0f0;transform:scaleX(1.35);transform-origin:0 50%">251,2445</div><div class="a" style="left:630.7px;top:711.4px;width:698.5px;height:27.8px;background:#828282"></div><div class="a" style="left:630.7px;top:711.4px;width:19px;height:27.8px;background:linear-gradient(90deg,#333333,#1e1e1e)"></div><div class="t" style="left:656.2px;top:718.1px;font-size:16px;color:#f0f0f0;transform:scaleX(1.3);transform-origin:0 50%">Target x:CIE31</div><div class="t" style="left:811.1px;top:718.1px;font-size:16px;color:#f0f0f0;transform:scaleX(1.35);transform-origin:0 50%">0,3344</div><div class="t" style="left:916.0px;top:718.1px;font-size:16px;color:#f0f0f0;transform:scaleX(1.35);transform-origin:0 50%">0,3564</div><div class="t" style="left:1020.6px;top:718.1px;font-size:16px;color:#f0f0f0;transform:scaleX(1.35);transform-origin:0 50%">0,3773</div><div class="t" style="left:1125.3px;top:718.1px;font-size:16px;color:#f0f0f0;transform:scaleX(1.35);transform-origin:0 50%">0,3969</div><div class="t" style="left:1230.3px;top:718.1px;font-size:16px;color:#f0f0f0;transform:scaleX(1.35);transform-origin:0 50%">0,4193</div><div class="a" style="left:630.7px;top:738.9px;width:698.5px;height:27.8px;background:#414141"></div><div class="a" style="left:630.7px;top:738.9px;width:19px;height:27.8px;background:linear-gradient(90deg,#262626,#1e1e1e)"></div><div class="t" style="left:656.2px;top:745.7px;font-size:16px;color:#f0f0f0;transform:scaleX(1.3);transform-origin:0 50%">Target y:CIE31</div><div class="t" style="left:811.1px;top:745.7px;font-size:16px;color:#f0f0f0;transform:scaleX(1.35);transform-origin:0 50%">0,3648</div><div class="t" style="left:916.0px;top:745.7px;font-size:16px;color:#f0f0f0;transform:scaleX(1.35);transform-origin:0 50%">0,4013</div><div class="t" style="left:1020.6px;top:745.7px;font-size:16px;color:#f0f0f0;transform:scaleX(1.35);transform-origin:0 50%">0,4358</div><div class="t" style="left:1125.3px;top:745.7px;font-size:16px;color:#f0f0f0;transform:scaleX(1.35);transform-origin:0 50%">0,4682</div><div class="t" style="left:1230.3px;top:745.7px;font-size:16px;color:#f0f0f0;transform:scaleX(1.35);transform-origin:0 50%">0,5053</div><div class="a" style="left:630.7px;top:766.4px;width:698.5px;height:27.8px;background:#828282"></div><div class="a" style="left:630.7px;top:766.4px;width:19px;height:27.8px;background:linear-gradient(90deg,#333333,#1e1e1e)"></div><div class="t" style="left:656.2px;top:773.2px;font-size:16px;color:#f0f0f0;transform:scaleX(1.25);transform-origin:0 50%">Target Y</div><div class="t" style="left:811.1px;top:773.2px;font-size:16px;color:#f0f0f0;transform:scaleX(1.35);transform-origin:0 50%">271,9552</div><div class="t" style="left:916.0px;top:773.2px;font-size:16px;color:#f0f0f0;transform:scaleX(1.35);transform-origin:0 50%">267,1816</div><div class="t" style="left:1020.6px;top:773.2px;font-size:16px;color:#f0f0f0;transform:scaleX(1.35);transform-origin:0 50%">263,5137</div><div class="t" style="left:1125.3px;top:773.2px;font-size:16px;color:#f0f0f0;transform:scaleX(1.35);transform-origin:0 50%">260,6352</div><div class="t" style="left:1230.3px;top:773.2px;font-size:16px;color:#f0f0f0;transform:scaleX(1.35);transform-origin:0 50%">257,8523</div><div class="a" style="left:630.7px;top:794.0px;width:698.5px;height:27.8px;background:#414141"></div><div class="a" style="left:630.7px;top:794.0px;width:19px;height:27.8px;background:linear-gradient(90deg,#262626,#1e1e1e)"></div><div class="t" style="left:656.2px;top:800.7px;font-size:16px;color:#f0f0f0;transform:scaleX(1.25);transform-origin:0 50%">ΔE 2000</div><div class="t" style="left:811.1px;top:800.7px;font-size:16px;color:#f0f0f0;transform:scaleX(1.35);transform-origin:0 50%">4,3819</div><div class="t" style="left:916.0px;top:800.7px;font-size:16px;color:#f0f0f0;transform:scaleX(1.35);transform-origin:0 50%">3,0555</div><div class="t" style="left:1020.6px;top:800.7px;font-size:16px;color:#f0f0f0;transform:scaleX(1.35);transform-origin:0 50%">2,5691</div><div class="t" style="left:1125.3px;top:800.7px;font-size:16px;color:#f0f0f0;transform:scaleX(1.35);transform-origin:0 50%">2,4027</div><div class="t" style="left:1230.3px;top:800.7px;font-size:16px;color:#f0f0f0;transform:scaleX(1.35);transform-origin:0 50%">2,2407</div><div class="a" style="left:0;top:822px;width:1655px;height:6px;background:linear-gradient(#333,#2c2c2c)"></div><div class="a" style="left:0;top:828px;width:1655px;height:75px;background:linear-gradient(#4b4b4b,#454545 15%,#2b2b2b)"></div><div class="a" style="left:0;top:828px;width:52.3px;height:75px;background:linear-gradient(#a9a9a9,#5c5c5c);border-radius:0 5px 0 0"></div><div class="a" style="left:15px;top:830.5px;width:19px;height:19px;border-radius:50%;background:linear-gradient(#555,#9c9c9c)"></div><svg width="60" height="903"><polygon points="19,841.5 30,841.5 24.5,836" fill="#161616"/></svg><div class="a" style="left:3px;top:861px;width:44px;height:37.5px;background:#ffff00;border:1.5px solid #d2d200;border-radius:5px"></div><div class="a" style="left:59.8px;top:828px;width:187.6px;height:75px;background:linear-gradient(#a6a6a6,#5e5e5e);border-radius:5px 5px 0 0"></div><div class="a" style="left:66.6px;top:835px;width:174.6px;height:45px;background:#c1c2a3;border-radius:4px;border:1px solid rgba(0,0,0,0.18)"></div><div class="t" style="left:141.8px;top:887.1px;font-size:12px;color:#252525;">20%</div><div class="a" style="left:249.9px;top:828px;width:187.6px;height:75px;background:linear-gradient(#a6a6a6,#5e5e5e);border-radius:5px 5px 0 0"></div><div class="a" style="left:256.7px;top:835px;width:174.6px;height:45px;background:#c3c088;border-radius:4px;border:1px solid rgba(0,0,0,0.18)"></div><div class="t" style="left:331.9px;top:887.1px;font-size:12px;color:#252525;">40%</div><div class="a" style="left:440.0px;top:828px;width:187.6px;height:75px;background:linear-gradient(#a6a6a6,#5e5e5e);border-radius:5px 5px 0 0"></div><div class="a" style="left:446.8px;top:835px;width:174.6px;height:45px;background:#c3bf6c;border-radius:4px;border:1px solid rgba(0,0,0,0.18)"></div><div class="t" style="left:522.0px;top:887.1px;font-size:12px;color:#252525;">60%</div><div class="a" style="left:630.1px;top:828px;width:187.6px;height:75px;background:linear-gradient(#a6a6a6,#5e5e5e);border-radius:5px 5px 0 0"></div><div class="a" style="left:636.9px;top:835px;width:174.6px;height:45px;background:#c3bf50;border-radius:4px;border:1px solid rgba(0,0,0,0.18)"></div><div class="t" style="left:712.1px;top:887.1px;font-size:12px;color:#252525;">80%</div><div class="a" style="left:820.2px;top:828px;width:187.6px;height:75px;background:linear-gradient(#1b1b1b,#343434);border-radius:5px 5px 0 0"></div><div class="a" style="left:827.0px;top:835px;width:174.6px;height:45px;background:#c4c000;border-radius:4px;border:1px solid rgba(0,0,0,0.18)"></div><div class="t" style="left:898.9px;top:887.1px;font-size:12px;color:#fff;font-weight:bold;">100%</div><div class="a" style="left:1261px;top:828.5px;width:60.5px;height:75px;background:linear-gradient(#989898,#858585 30%,#5e5e5e);border-radius:5px 0 0 0"></div><div class="a" style="left:1261px;top:850.5px;width:60.5px;height:1px;background:#5a5a5a"></div><div class="a" style="left:1261px;top:851.5px;width:60.5px;height:1px;background:#a8a8a8"></div><div class="a" style="left:1282px;top:830.5px;width:19px;height:19px;border-radius:50%;background:linear-gradient(#6a6a6a,#a4a4a4)"></div><svg width="1655" height="903"><polygon points="1286,842.5 1297,842.5 1291.5,836.5" fill="#2a2a2a"/></svg><div class="a" style="left:1271.5px;top:859px;width:38.5px;height:38px;border:3px solid #181818;border-radius:6.5px;background:linear-gradient(#9c9c9c 0,#909090 50%,#777 50%,#828282)"></div><div class="a" style="left:1282.5px;top:870px;width:18px;height:16.6px;background:#000"></div><div class="a" style="left:1322.2px;top:828px;width:55.6px;height:38px;background:linear-gradient(#9c9c9c,#686868)"></div><div class="a" style="left:1337.8px;top:834.8px;width:24.4px;height:24.4px;border-radius:50%;background:linear-gradient(#747474,#adadad)"></div><div class="a" style="left:1378.8px;top:828px;width:55.6px;height:38px;background:linear-gradient(#9c9c9c,#686868)"></div><div class="a" style="left:1394.4px;top:834.8px;width:24.4px;height:24.4px;border-radius:50%;background:linear-gradient(#747474,#adadad)"></div><div class="a" style="left:1435.4px;top:828px;width:55.6px;height:38px;background:linear-gradient(#9c9c9c,#686868)"></div><div class="a" style="left:1451.0px;top:834.8px;width:24.4px;height:24.4px;border-radius:50%;background:linear-gradient(#747474,#adadad)"></div><div class="a" style="left:1492.1px;top:828px;width:55.6px;height:38px;background:linear-gradient(#9c9c9c,#686868)"></div><div class="a" style="left:1507.7px;top:834.8px;width:24.4px;height:24.4px;border-radius:50%;background:linear-gradient(#747474,#adadad)"></div><div class="a" style="left:1548.7px;top:828px;width:55.6px;height:38px;background:linear-gradient(#9c9c9c,#686868)"></div><div class="a" style="left:1564.3px;top:834.8px;width:24.4px;height:24.4px;border-radius:50%;background:linear-gradient(#747474,#adadad)"></div><svg width="1655" height="903"><rect x="1345.0" y="842.0" width="10" height="10" fill="#2e2e2e"/><polygon points="1402.6,841.0 1402.6,853.0 1413.1,847.0" fill="#2e2e2e"/><path d="M1459.0,840.8 h-3 v12.4 h3 M1467.4,840.8 h3 v12.4 h-3" fill="none" stroke="#2e2e2e" stroke-width="2"/><path d="M1459.6,847.0 l2.2,-2 v4 z M1466.8,847.0 l-2.2,-2 v4 z" fill="#2e2e2e"/><rect x="1462.4" y="846.4" width="1.6" height="1.2" fill="#2e2e2e"/><path d="M1519.9,847.0 c-1.6,-3.6 -7.6,-4.2 -7.6,0 s6,3.6 7.6,0 s6,-4.2 7.6,0 s-6,3.6 -7.6,0z" fill="none" stroke="#2e2e2e" stroke-width="2.1"/><path d="M1570.9,845.5 A5.8,5.8 0 0 1 1581.7,844.5 M1582.1,848.5 A5.8,5.8 0 0 1 1571.2,849.5" fill="none" stroke="#2e2e2e" stroke-width="2.4"/><polygon points="1584.9,839.9 1585.1,847.1 1578.1,845.9" fill="#2e2e2e"/><polygon points="1568.0,854.1 1567.8,846.9 1574.8,848.1" fill="#2e2e2e"/></svg><div class="a" style="left:1605.3px;top:828px;width:50px;height:38.3px;background:linear-gradient(#494949,#2a2a2a)"></div><div class="a" style="left:1622.6px;top:834.9px;width:24.4px;height:24.4px;border-radius:50%;background:linear-gradient(#2d2d2d,#424242)"></div><div class="a" style="left:1322.2px;top:867px;width:170.3px;height:36px;background:linear-gradient(#a8a8a8,#767676);border-top:1px solid #b8b8b8"></div><div class="a" style="left:1493.7px;top:867px;width:162px;height:36px;background:linear-gradient(#a8a8a8,#767676);border-top:1px solid #b8b8b8"></div><div class="a" style="left:1349.3px;top:873.6px;width:24px;height:24px;border-radius:50%;background:linear-gradient(#7a7a7a,#b0b0b0)"></div><div class="a" style="left:1616px;top:873.6px;width:24px;height:24px;border-radius:50%;background:linear-gradient(#7a7a7a,#b0b0b0)"></div><div class="t" style="left:1394.4px;top:871.0px;font-size:26.5px;color:#3a3a3a;letter-spacing:1.36px;-webkit-text-stroke:0.75px #3a3a3a;">Back</div><div class="t" style="left:1528.5px;top:871.0px;font-size:26.5px;color:#3a3a3a;letter-spacing:2.84px;-webkit-text-stroke:0.75px #3a3a3a;">Next</div><div class="t" style="left:1354.6px;top:871.1px;font-size:24px;color:#3a3a3a;-webkit-text-stroke:0.5px #3a3a3a;">«</div><div class="t" style="left:1621.3px;top:871.1px;font-size:24px;color:#3a3a3a;-webkit-text-stroke:0.5px #3a3a3a;">»</div></body></html>
